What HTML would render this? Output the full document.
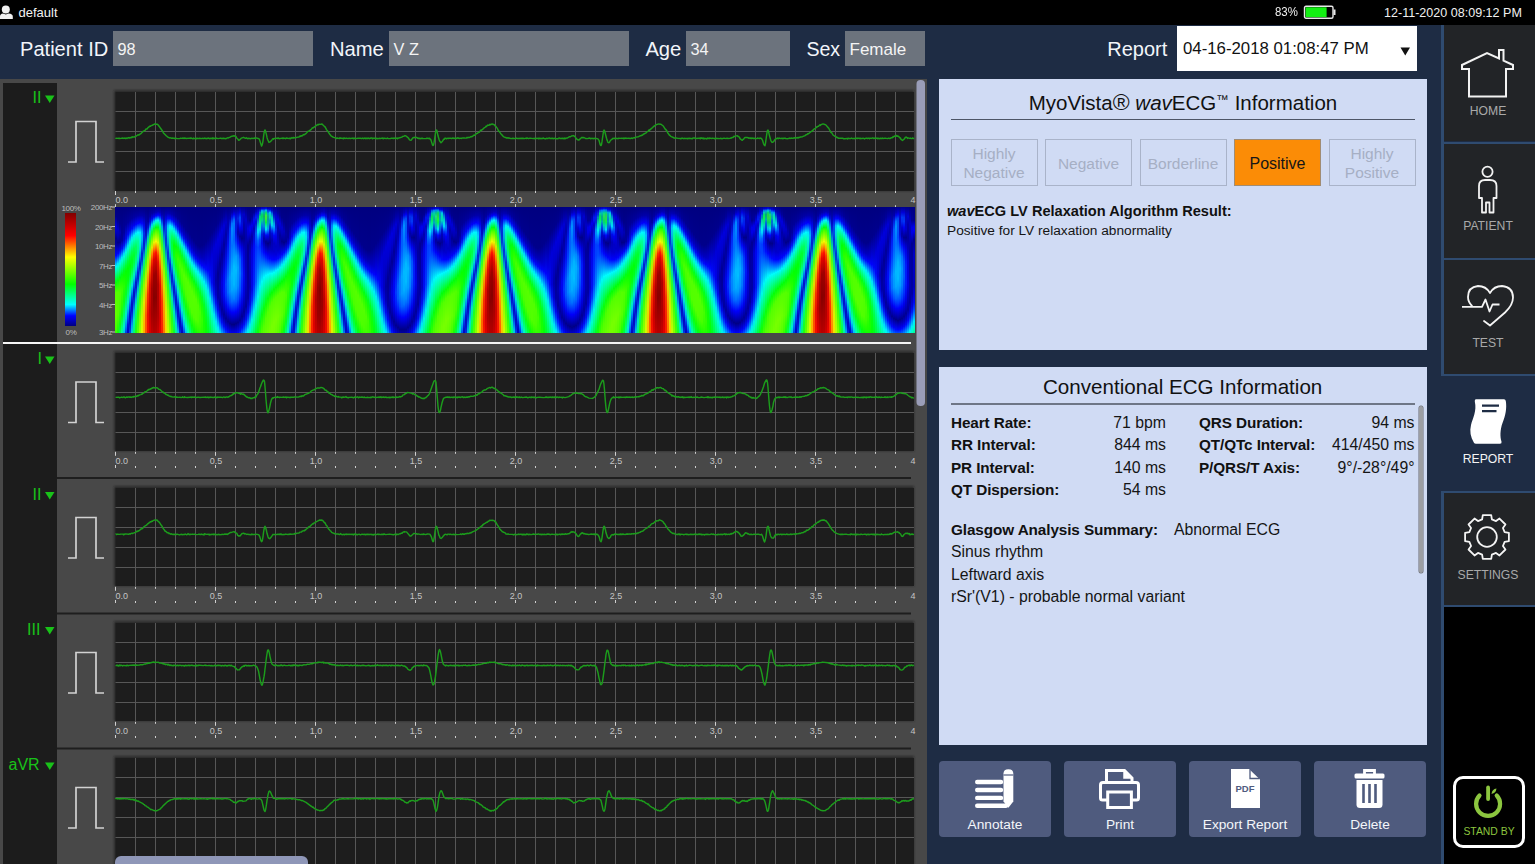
<!DOCTYPE html>
<html><head><meta charset="utf-8">
<style>
*{margin:0;padding:0;box-sizing:border-box}
html,body{width:1535px;height:864px;overflow:hidden;background:#1e2c44;font-family:"Liberation Sans",sans-serif}
.a{position:absolute;white-space:nowrap}
.tl{font-family:"Liberation Sans",sans-serif;font-size:9px;fill:#c4c4c4}
.t{line-height:1.15}
.b{font-weight:bold;font-size:15.3px;letter-spacing:-0.1px;color:#111}
.r{font-size:15.8px;color:#151515}
b{position:absolute;top:0;width:2px;height:126px}
.hz{font-family:"Liberation Sans",sans-serif;font-size:8px;fill:#bdbdbd;letter-spacing:-0.4px}
.ll{font-family:"Liberation Sans",sans-serif;font-size:16px;fill:#19c219}
</style></head><body>
<div class="a" style="left:0;top:0;width:1535px;height:25px;background:#000"></div>
<svg class="a" style="left:0;top:0" width="16" height="25"><circle cx="5.8" cy="9.6" r="4" fill="#f0f0f0"/><path d="M0 19V16.5Q0 14 3 13.6L5.8 14.5L8.6 13.6Q12.8 14 12.8 16.5V19Z" fill="#f0f0f0"/></svg>
<div class="a t" style="left:18.5px;top:5.5px;font-size:13px;color:#f2f2f2">default</div>
<div class="a t" style="left:1275px;top:5px;font-size:13px;color:#f0f0f0;transform:scaleX(0.88);transform-origin:0 0">83%</div>
<svg class="a" style="left:1303px;top:5px" width="34" height="15"><rect x="1.5" y="1.2" width="28.5" height="12" rx="1.5" fill="none" stroke="#e8e8e8" stroke-width="1.4"/><rect x="2.6" y="2.3" width="21" height="9.8" fill="#12ef12"/><rect x="30.5" y="4.5" width="2" height="5.5" fill="#e8e8e8"/></svg>
<div class="a t" style="left:1384px;top:6px;font-size:12.55px;color:#f0f0f0">12-11-2020 08:09:12 PM</div>
<div class="a" style="left:0;top:25px;width:1535px;height:54px;background:#1e2c44"></div>
<div class="a t" style="left:20px;top:38px;font-size:20.1px;color:#f2f5fa">Patient ID</div>
<div class="a t" style="left:330px;top:38px;font-size:20.2px;color:#f2f5fa">Name</div>
<div class="a t" style="left:645.4px;top:38px;font-size:20.2px;color:#f2f5fa">Age</div>
<div class="a t" style="left:806.4px;top:38px;font-size:19.6px;color:#f2f5fa">Sex</div>
<div class="a t" style="left:1107.3px;top:38px;font-size:20.0px;color:#f2f5fa">Report</div>
<div class="a" style="left:113px;top:31px;width:200px;height:34.5px;background:#6c737d"></div>
<div class="a t" style="left:117.5px;top:39.5px;font-size:16.3px;color:#f4f4f4">98</div>
<div class="a" style="left:389px;top:31px;width:240px;height:34.5px;background:#6c737d"></div>
<div class="a t" style="left:393.5px;top:39.5px;font-size:16.3px;color:#f4f4f4">V Z</div>
<div class="a" style="left:686px;top:31px;width:104px;height:34.5px;background:#6c737d"></div>
<div class="a t" style="left:690.5px;top:39.5px;font-size:16.3px;color:#f4f4f4">34</div>
<div class="a" style="left:845px;top:31px;width:80px;height:34.5px;background:#6c737d"></div>
<div class="a t" style="left:849.5px;top:39.5px;font-size:17px;color:#f4f4f4">Female</div>
<div class="a" style="left:1176.5px;top:25.5px;width:240.5px;height:45px;background:#fff"></div>
<div class="a t" style="left:1183px;top:38.7px;font-size:16.8px;color:#111">04-16-2018 01:08:47 PM</div>
<svg class="a" style="left:1400px;top:47px" width="11" height="9"><path d="M0.5 0.5H10L5.25 8.5Z" fill="#111"/></svg>
<svg width="927" height="785" viewBox="0 79 927 785" style="position:absolute;left:0;top:79px">
<defs><filter id="sh" x="-5%" y="-20%" width="110%" height="140%"><feGaussianBlur stdDeviation="1.3"/></filter></defs>
<rect x="0" y="79" width="927" height="785" fill="#484848"/>
<rect x="3" y="83" width="54" height="781" fill="#1c1c1c"/>
<rect x="114.0" y="90.5" width="800.0" height="100.5" fill="#1d1d1d" filter="url(#sh)" opacity="0.7"/>
<rect x="115.5" y="92" width="798.5" height="99" fill="#1d1d1d"/>
<path d="M135.5 92V191 M155.5 92V191 M175.5 92V191 M195.5 92V191 M215.5 92V191 M235.5 92V191 M255.5 92V191 M275.5 92V191 M295.5 92V191 M315.5 92V191 M335.5 92V191 M355.5 92V191 M375.5 92V191 M395.5 92V191 M415.5 92V191 M435.5 92V191 M455.5 92V191 M475.5 92V191 M495.5 92V191 M515.5 92V191 M535.5 92V191 M555.5 92V191 M575.5 92V191 M595.5 92V191 M615.5 92V191 M635.5 92V191 M655.5 92V191 M675.5 92V191 M695.5 92V191 M715.5 92V191 M735.5 92V191 M755.5 92V191 M775.5 92V191 M795.5 92V191 M815.5 92V191 M835.5 92V191 M855.5 92V191 M875.5 92V191 M895.5 92V191 M115.5 111.5H914.0 M115.5 131.5H914.0 M115.5 151.5H914.0 M115.5 171.5H914.0" stroke="#575757" stroke-width="1" fill="none"/>
<path d="M115.5,138.8 116,138.3 118.5,138.4 119,138.0 119.5,138.6 123,138.0 123.5,138.4 124.5,138.3 125,137.9 125.5,138.6 126.5,138.0 127,138.5 128,137.7 128.5,137.9 129,137.4 129.5,138.1 130.5,137.5 131,137.8 131.5,137.1 132,137.5 132.5,136.8 134.5,137.1 135,136.4 136.5,136.0 138,134.8 139,135.1 140,133.9 140.5,134.1 143.5,131.1 145,130.5 146,129.0 147,129.0 148,127.6 150,126.1 150.5,126.3 151,125.6 152.5,125.2 153,124.7 154,124.5 155,123.8 155.5,124.3 157,124.1 158,124.8 162.5,131.0 163.5,133.1 166.5,136.1 167,136.1 167.5,136.8 169.5,138.0 170,137.7 171.5,138.3 172.5,138.0 173,138.3 174.5,138.2 175,138.7 176,138.2 176.5,138.5 179.5,138.6 180.5,138.3 182,138.4 183,138.0 183.5,138.4 184.5,138.0 185,138.5 185.5,138.2 186,138.5 190,138.1 190.5,138.4 191,138.0 193,138.8 193.5,138.1 194,138.6 195,138.6 195.5,138.2 196.5,138.8 197,138.1 198,138.6 199.5,138.2 202,138.6 202.5,138.2 203.5,138.6 204.5,138.1 205,138.5 205.5,138.3 207,138.7 208,138.0 210,138.7 211,138.2 211.5,138.6 212.5,137.9 213,138.9 213.5,138.0 214.5,138.6 215.5,138.0 216,138.6 216.5,138.1 218,138.6 220.5,138.1 221.5,138.5 223.5,138.3 226,138.7 227.5,137.8 228.5,137.9 229,137.4 230,137.3 231,136.5 234,135.8 236,136.5 236.5,137.7 237.5,138.9 238,139.1 238.5,140.2 239.5,140.1 241.5,138.1 243.5,137.3 245.5,138.3 246,138.3 246.5,137.8 247.5,138.7 248.5,138.3 251,138.7 252,138.2 253,138.6 254.5,137.9 255,138.6 256,137.9 259,138.8 259.5,139.6 261.5,146.0 262,145.3 262.5,143.6 263,140.8 264,133.1 264.5,131.1 265,129.9 265.5,131.0 266,132.9 266.5,134.9 267,137.4 267.5,139.3 269,142.4 270.5,141.7 271,140.9 271.5,140.7 272.5,139.0 273,138.7 273.5,139.2 274,138.4 275.5,138.5 277,138.1 277.5,138.5 278.5,138.0 279,138.7 282,138.1 282.5,138.5 283,138.1 283.5,138.5 284,138.1 285.5,138.7 286,138.1 286.5,138.0 289.5,138.6 290,138.1 290.5,138.8 292,137.6 292.5,138.0 293,138.0 293.5,137.4 294,137.9 295,137.6 296,137.8 296.5,137.4 299,137.0 300,136.0 300.5,136.4 301,135.8 302,136.1 303.5,134.6 304,134.9 305.5,133.9 307,132.4 307.5,131.5 308.5,131.4 309.5,130.7 311,129.6 312.5,127.8 313,128.0 313.5,127.4 314.5,127.0 315.5,126.0 316,125.9 316.5,125.1 317,125.2 318,124.4 318.5,124.8 319,124.2 321,124.4 321.5,124.0 322,124.0 323,125.1 323.5,125.3 324.5,126.7 325,126.7 326.5,129.6 328.5,132.3 329,133.3 331,135.8 333.5,137.4 335.5,137.8 336.5,138.6 337,138.0 339.5,138.6 340,137.7 340.5,138.2 342.5,138.3 343.5,138.8 344,137.8 345,138.5 346.5,138.1 348,138.6 349,138.2 350.5,138.5 352.5,138.1 353.5,138.7 354,138.1 354.5,138.5 355,138.2 355.5,138.6 358,138.3 360.5,138.3 361.5,138.6 362.5,138.1 363.5,138.7 364.5,138.1 365.5,138.7 366,138.0 366.5,138.5 367.5,138.2 368,138.5 368.5,138.1 369.5,138.7 371,138.0 372,138.0 372.5,138.8 373.5,138.2 375.5,138.1 376,138.8 376.5,138.2 378,138.7 379,138.3 380.5,138.5 382,138.1 382.5,138.4 383,138.1 383.5,138.7 384.5,138.2 386.5,138.6 387.5,138.0 388,138.5 390.5,138.6 391,138.2 392.5,138.2 393.5,138.5 394,138.0 395.5,138.6 397,138.0 397.5,138.8 398,138.3 402,137.1 402.5,136.4 404,136.2 405,135.6 406,135.9 406.5,136.6 407,136.7 408.5,138.1 409.5,139.9 411,140.3 413,137.8 414,137.5 414.5,137.7 415,137.3 416.5,137.4 417.5,138.2 418,138.0 418.5,138.6 419.5,138.3 420,138.8 421.5,138.3 422,138.6 422.5,138.2 423,138.5 426.5,138.6 427,138.1 428,138.5 429.5,138.2 430,139.0 430.5,139.1 431,140.1 432.5,145.0 433,145.5 433.5,145.1 434,142.9 434.5,139.8 435.5,132.6 436,130.7 436.5,129.9 437,131.1 438,135.8 439,139.3 439.5,140.8 441,142.7 442.5,141.3 443,140.3 444,139.0 444.5,139.2 445,138.1 446,138.2 446.5,138.8 448,138.1 448.5,138.5 450,138.1 451.5,138.5 453,138.0 453.5,138.4 454,138.2 455,138.5 456,138.1 456.5,138.6 458,137.7 458.5,138.3 459.5,138.5 460,138.1 461.5,138.4 462,137.9 463.5,138.1 464,137.7 464.5,138.1 466.5,138.0 467,137.3 467.5,137.8 468.5,137.3 469,137.5 470,137.2 471,136.5 472,136.7 474,135.1 475,135.2 475.5,134.1 476,134.1 476.5,133.5 477.5,133.4 478,132.6 479,132.4 481,130.1 481.5,130.3 482,129.6 482.5,129.5 483.5,128.4 485.5,127.0 486,126.2 486.5,126.5 487.5,125.1 489,125.3 490,124.2 490.5,124.8 492,123.9 492.5,123.9 493,124.5 494,124.5 494.5,124.9 495,125.8 495.5,125.9 497.5,128.7 498.5,130.9 499.5,131.8 501.5,134.6 502.5,135.3 503,136.3 505,137.5 506,137.5 506.5,138.1 508,137.8 508.5,138.2 509,138.0 511,138.6 513,138.3 515,138.6 516.5,138.1 517,138.5 523,138.2 524.5,138.6 526,138.1 526.5,138.6 527,137.9 528.5,138.6 530,138.1 533.5,138.6 534,138.2 535,138.8 537,138.2 538.5,138.8 539,138.0 540,138.8 540.5,138.3 541.5,138.7 542,138.3 542.5,138.5 543.5,138.0 544,138.5 545.5,138.9 546.5,138.3 548,138.6 548.5,138.1 549.5,138.0 550,138.5 552.5,138.2 554,138.7 555,138.2 556,138.7 558,138.7 558.5,138.1 559.5,138.0 560,138.5 563,138.3 563.5,138.7 564.5,138.1 565,138.9 565.5,138.2 567.5,138.0 569.5,136.7 570.5,136.8 571.5,136.0 573.5,135.6 575,136.7 576.5,138.8 578,139.9 579,139.9 582,137.2 582.5,137.7 584,137.5 585.5,138.5 587.5,138.6 589.5,138.0 590.5,138.8 591,138.3 592,138.6 593,138.3 593.5,138.7 595,138.3 598,138.9 599,140.3 600,144.1 600.5,145.3 601,145.6 601.5,144.6 602,141.7 603.5,131.3 604,130.1 604.5,130.6 605,132.3 606.5,138.3 607.5,141.2 608,142.4 609,142.7 609.5,142.3 610,141.1 611,139.9 612,139.3 612.5,138.5 615,138.3 615.5,138.6 616,138.2 616.5,138.6 617,138.4 618,138.7 618.5,138.2 621.5,138.4 622,138.1 623.5,138.7 624,137.9 624.5,138.6 626,138.0 626.5,138.4 628.5,138.2 630.5,138.5 632,138.0 632.5,138.5 634,137.5 634.5,137.9 636,137.1 638.5,136.7 640.5,135.7 641,135.9 641.5,135.3 642.5,135.2 643,134.5 646.5,132.6 647,131.7 648.5,131.1 649,129.9 649.5,130.3 650,129.5 650.5,129.5 651.5,128.2 652.5,127.8 653.5,126.3 654,126.6 654.5,125.8 656,124.8 659,123.9 660,124.3 661,124.2 663.5,126.3 665.5,129.6 666,129.5 666.5,130.8 667,130.9 667.5,132.5 669.5,135.2 670,135.3 670.5,136.1 672,137.0 673,137.2 673.5,137.8 675.5,138.3 676,137.9 678,138.4 680.5,138.5 681,138.9 681.5,138.3 682.5,138.1 683.5,138.7 684.5,138.3 686.5,138.6 687,138.2 687.5,138.7 689,138.2 692.5,138.7 693,138.0 695,138.0 695.5,138.5 699,138.2 699.5,138.5 700,138.1 700.5,138.7 701,137.7 701.5,138.3 702,138.1 702.5,138.6 703,138.1 703.5,138.8 704,138.1 704.5,138.8 705.5,138.4 706.5,138.9 707.5,137.9 708,138.7 709,138.0 709.5,138.6 710,138.1 712,138.5 712.5,138.2 714,138.4 714.5,138.8 715.5,138.2 720,138.6 720.5,138.3 722,138.7 724,138.1 726,138.6 727,138.1 727.5,138.5 730.5,138.2 731,137.8 731.5,138.0 732,137.4 733,137.5 734,136.3 734.5,136.6 736,135.9 737.5,135.8 738,136.6 738.5,136.5 739,136.9 739.5,137.4 740,138.6 742,140.3 742.5,140.2 743,139.3 743.5,139.3 744.5,137.9 745,137.5 747.5,137.5 748.5,138.2 749,137.8 750,138.5 750.5,138.0 751.5,138.5 752,138.0 753.5,138.6 754,138.1 754.5,138.6 757,138.5 757.5,138.0 759.5,138.6 760,138.0 761.5,138.4 762,139.5 762.5,140.1 763.5,143.5 764,144.7 765,145.7 765.5,143.1 767,132.6 767.5,130.3 768,130.0 768.5,131.3 769.5,135.8 770.5,139.3 771,140.8 772,142.4 773,142.2 773.5,141.4 774,141.3 774.5,139.9 775.5,138.9 776.5,138.7 777,138.1 777.5,138.4 778,138.0 778.5,138.7 779.5,138.1 781,138.7 782,138.2 783,138.8 783.5,138.2 785,138.1 785.5,138.6 788,138.7 789.5,138.1 790,138.6 791,138.0 793,138.4 793.5,138.0 795,137.8 796,138.1 797,137.5 798,138.0 798.5,137.4 799,137.7 800.5,137.0 802.5,136.7 805,135.6 806,134.7 807,134.5 808,133.5 808.5,133.8 811.5,131.2 812,131.4 812.5,130.4 813,130.3 813.5,129.4 815,128.7 816,127.8 816.5,126.9 817,127.2 817.5,126.4 818.5,126.3 820,124.8 820.5,125.4 821,124.7 823,123.9 825.5,124.7 826.5,125.5 827,126.5 827.5,126.6 828,127.7 828.5,127.7 829.5,129.8 830,130.5 830.5,131.9 831,132.6 831.5,132.4 833,135.0 835,136.3 835.5,136.2 836.5,137.4 837,137.7 837.5,137.4 838.5,138.3 843,138.2 843.5,138.7 845,138.8 847,138.4 847.5,138.9 848,138.3 850.5,138.6 851.5,138.0 852.5,138.6 853.5,138.4 854.5,138.7 855.5,138.1 856.5,138.4 857,138.0 857.5,138.6 858,138.2 859.5,138.3 860,138.8 860.5,138.3 862,138.6 863,138.2 864.5,138.9 865,138.4 866.5,138.1 867.5,138.6 868,138.2 869,138.1 869.5,138.7 870,138.3 871.5,138.4 872.5,137.9 873.5,138.5 874,137.9 874.5,138.4 876,138.3 876.5,138.0 877.5,138.7 878,138.1 879,138.7 880.5,138.2 882,138.5 882.5,138.1 883,138.6 885,138.1 887.5,138.6 888.5,138.2 890,138.5 891.5,137.7 892.5,137.7 893,136.6 893.5,137.1 894.5,136.0 895,136.3 896.5,135.5 897,136.3 898,136.0 900,137.9 900.5,137.9 901,139.4 902.5,140.4 904,139.2 905.5,137.2 906.5,137.1 907.5,138.4 908,137.8 909.5,138.4 910.5,138.1 911,138.6 912,138.6 912.5,138.0 913.5,138.5 914,138.0" stroke="#1c9c1c" stroke-width="1.45" fill="none" stroke-linejoin="round"/>
<path d="M115.5 191v4 M115.5 204.2v3 M135.5 191v2 M135.5 205.2v2 M155.5 191v2 M155.5 205.2v2 M175.5 191v2 M175.5 205.2v2 M195.5 191v2 M195.5 205.2v2 M215.5 191v4 M215.5 204.2v3 M235.5 191v2 M235.5 205.2v2 M255.5 191v2 M255.5 205.2v2 M275.5 191v2 M275.5 205.2v2 M295.5 191v2 M295.5 205.2v2 M315.5 191v4 M315.5 204.2v3 M335.5 191v2 M335.5 205.2v2 M355.5 191v2 M355.5 205.2v2 M375.5 191v2 M375.5 205.2v2 M395.5 191v2 M395.5 205.2v2 M415.5 191v4 M415.5 204.2v3 M435.5 191v2 M435.5 205.2v2 M455.5 191v2 M455.5 205.2v2 M475.5 191v2 M475.5 205.2v2 M495.5 191v2 M495.5 205.2v2 M515.5 191v4 M515.5 204.2v3 M535.5 191v2 M535.5 205.2v2 M555.5 191v2 M555.5 205.2v2 M575.5 191v2 M575.5 205.2v2 M595.5 191v2 M595.5 205.2v2 M615.5 191v4 M615.5 204.2v3 M635.5 191v2 M635.5 205.2v2 M655.5 191v2 M655.5 205.2v2 M675.5 191v2 M675.5 205.2v2 M695.5 191v2 M695.5 205.2v2 M715.5 191v4 M715.5 204.2v3 M735.5 191v2 M735.5 205.2v2 M755.5 191v2 M755.5 205.2v2 M775.5 191v2 M775.5 205.2v2 M795.5 191v2 M795.5 205.2v2 M815.5 191v4 M815.5 204.2v3 M835.5 191v2 M835.5 205.2v2 M855.5 191v2 M855.5 205.2v2 M875.5 191v2 M875.5 205.2v2 M895.5 191v2 M895.5 205.2v2" stroke="#d0d0d0" stroke-width="1" fill="none"/>
<text x="115.5" y="203.2" text-anchor="start" class="tl">0.0</text>
<text x="216.0" y="203.2" text-anchor="middle" class="tl">0.5</text>
<text x="316.0" y="203.2" text-anchor="middle" class="tl">1.0</text>
<text x="416.0" y="203.2" text-anchor="middle" class="tl">1.5</text>
<text x="516.0" y="203.2" text-anchor="middle" class="tl">2.0</text>
<text x="616.0" y="203.2" text-anchor="middle" class="tl">2.5</text>
<text x="716.0" y="203.2" text-anchor="middle" class="tl">3.0</text>
<text x="816.0" y="203.2" text-anchor="middle" class="tl">3.5</text>
<text x="915.5" y="203.2" text-anchor="end" class="tl">4</text>
<rect x="3" y="342" width="908" height="2" fill="#f6f6f6"/>
<rect x="114.0" y="351.5" width="800.0" height="99.5" fill="#1d1d1d" filter="url(#sh)" opacity="0.7"/>
<rect x="115.5" y="353" width="798.5" height="98" fill="#1d1d1d"/>
<path d="M135.5 353V451 M155.5 353V451 M175.5 353V451 M195.5 353V451 M215.5 353V451 M235.5 353V451 M255.5 353V451 M275.5 353V451 M295.5 353V451 M315.5 353V451 M335.5 353V451 M355.5 353V451 M375.5 353V451 M395.5 353V451 M415.5 353V451 M435.5 353V451 M455.5 353V451 M475.5 353V451 M495.5 353V451 M515.5 353V451 M535.5 353V451 M555.5 353V451 M575.5 353V451 M595.5 353V451 M615.5 353V451 M635.5 353V451 M655.5 353V451 M675.5 353V451 M695.5 353V451 M715.5 353V451 M735.5 353V451 M755.5 353V451 M775.5 353V451 M795.5 353V451 M815.5 353V451 M835.5 353V451 M855.5 353V451 M875.5 353V451 M895.5 353V451 M115.5 372.5H914.0 M115.5 392.5H914.0 M115.5 412.5H914.0 M115.5 432.5H914.0" stroke="#575757" stroke-width="1" fill="none"/>
<path d="M115.5,397.4 118.5,397.2 119,397.3 119.5,397.9 121.5,397.1 123,397.5 124,396.8 125.5,397.8 126.5,397.0 128,397.2 129,396.8 129.5,397.2 130.5,397.0 131.5,397.4 132.5,396.8 133,397.0 133.5,396.4 134,396.9 135,396.3 136,396.7 136.5,396.0 137,396.3 138,395.4 138.5,395.8 139.5,394.9 141,394.6 141.5,394.1 142,394.3 143,393.3 144,392.9 145,391.7 146,391.7 147.5,390.5 148,389.8 148.5,389.9 149,389.3 149.5,389.5 153.5,387.5 154.5,387.9 155.5,387.6 157.5,388.0 158.5,389.1 159.5,389.6 160,389.5 162.5,391.9 163,392.0 163.5,392.8 164.5,393.0 166,394.6 166.5,394.5 167.5,395.3 168,394.9 169,395.9 170,396.5 171,396.3 171.5,396.7 173.5,397.1 175,396.6 175.5,397.6 176,397.0 178.5,397.4 180,397.2 181,397.6 182,397.4 182.5,396.8 183,397.4 184,397.6 184.5,396.7 185,397.3 187.5,397.5 190,397.3 191,396.9 191.5,397.6 192,396.9 192.5,397.3 195.5,397.0 196.5,397.6 198,397.1 200,397.5 204,397.1 205,397.3 205.5,396.9 206,397.5 207.5,397.1 208,397.5 208.5,397.2 209,397.7 210,397.0 210.5,397.4 211,397.2 213.5,397.5 215,397.0 217,397.7 217.5,397.0 218,397.3 221,397.1 222.5,397.6 223.5,397.0 224.5,397.1 225,397.5 226.5,396.9 228,397.3 228.5,396.7 229,396.8 229.5,396.1 232,395.2 232.5,394.3 233,394.4 233.5,393.6 234,393.9 234.5,393.3 235.5,392.8 237,392.6 239.5,393.5 240,393.2 240.5,394.3 241,393.4 242.5,394.2 243.5,394.1 246.5,396.9 247,396.8 248.5,397.8 249.5,397.6 250.5,398.4 251,398.0 251.5,398.6 252,398.6 253,397.8 254.5,397.7 255,396.9 255.5,397.4 256,396.9 257,394.7 257.5,394.3 258.5,392.5 260,387.8 260.5,386.8 261.5,383.7 262.5,381.5 263.5,380.0 264,380.4 264.5,381.6 265,386.8 265.5,392.5 266,399.3 266.5,404.8 267,409.4 267.5,411.9 268,412.8 268.5,411.8 269,410.0 269.5,408.1 270.5,403.0 271.5,399.5 272.5,398.0 273,397.7 273.5,398.1 274,397.4 276,397.2 277,397.5 277.5,396.6 278,397.2 279,397.2 279.5,397.6 280,397.2 282,397.4 283.5,397.0 284.5,397.4 286,397.0 286.5,397.8 287,397.1 287.5,397.1 289.5,397.5 290.5,397.2 291,397.5 291.5,397.2 293.5,397.3 294.5,396.9 298.5,397.1 300,396.3 301.5,396.5 302,395.7 303.5,396.1 305,394.6 309,393.0 310.5,392.1 311,391.2 313.5,389.9 314.5,389.8 315.5,388.8 317.5,387.9 320,388.0 321,387.4 323,388.0 324,388.7 325,390.0 326.5,390.5 327,391.3 328.5,392.1 329,393.2 329.5,392.9 331,394.4 332.5,395.0 333,395.6 334,395.6 334.5,396.4 335,396.2 335.5,396.6 336,396.2 338,397.1 338.5,396.6 339,397.1 341,397.1 341.5,397.7 342,397.2 342.5,397.5 343,397.0 344,397.3 345.5,397.1 346,396.6 346.5,397.2 348.5,397.8 349,397.4 352,397.2 353,397.7 354,397.7 354.5,397.0 356,397.4 357.5,396.8 358.5,397.8 359.5,397.0 360,397.4 362,397.0 364,397.6 364.5,397.1 365,397.5 366.5,397.6 367,397.3 369.5,397.6 370.5,397.2 371,397.8 371.5,397.3 373,396.8 374,397.3 376,397.5 378.5,397.1 379,397.6 379.5,397.0 380.5,397.4 381,396.8 381.5,397.5 383.5,397.0 385,397.5 386,396.9 386.5,397.6 389.5,397.2 390,397.9 390.5,397.3 391,397.1 392,397.6 393,396.8 393.5,397.6 396,397.0 396.5,397.5 397,397.1 398.5,397.3 399.5,396.5 400,397.0 402,396.3 403,394.9 404,394.7 405,393.7 405.5,393.8 406,393.2 406.5,393.2 407.5,392.4 412,393.4 412.5,394.0 413.5,393.6 414.5,394.6 416,395.0 417.5,396.4 418,396.3 419,397.2 419.5,396.9 421,398.0 422.5,398.5 423.5,398.2 424,398.7 425.5,397.6 426,397.7 426.5,396.8 427,396.8 427.5,395.8 428.5,395.2 429.5,393.5 434,381.1 435,380.5 435.5,380.6 436,382.7 436.5,387.9 437,394.4 437.5,399.9 438,406.3 438.5,410.2 439,412.4 439.5,412.5 440,411.8 440.5,410.1 441,407.4 442,403.0 443,399.8 443.5,398.6 444,398.1 445,397.5 447.5,397.0 448.5,397.4 449,397.0 450,397.5 452,397.1 453,397.7 454,396.9 455,397.5 456,397.0 457,397.8 457.5,397.1 458,397.4 459,397.0 460.5,397.5 461,397.1 462.5,396.8 463.5,397.6 464.5,397.1 465,397.5 467,397.0 468,397.4 468.5,396.8 469,396.6 469.5,397.0 470.5,396.3 473,396.4 474.5,395.6 475.5,395.7 476.5,394.8 477,395.2 478.5,393.6 479.5,393.7 480,393.0 481,392.4 482,392.1 482.5,391.2 484.5,389.9 485,390.1 486.5,389.4 487,388.7 490,387.4 490.5,388.0 492,387.1 494,388.4 494.5,388.3 495,388.8 495.5,388.7 496.5,389.9 497,390.0 499,392.1 499.5,392.0 500,392.9 500.5,392.7 503.5,395.0 504,395.8 505,395.7 508.5,397.0 510.5,397.0 511.5,397.5 514,397.0 514.5,397.5 515.5,397.0 516.5,397.4 517,396.8 518,397.5 519.5,397.0 520,397.7 521.5,397.1 522.5,397.6 526.5,397.0 527.5,397.7 528.5,397.6 529,397.2 530.5,397.3 531,397.7 531.5,397.0 533.5,397.5 534,396.9 534.5,397.6 535.5,397.4 536.5,397.8 537,397.4 539.5,397.2 544,397.6 545,397.4 545.5,396.9 546,397.5 546.5,397.0 548,397.7 549,397.0 549.5,397.4 551,397.0 552,397.7 552.5,397.0 554,397.5 554.5,396.9 555,397.4 556,397.1 556.5,397.5 557,396.9 558.5,397.5 559.5,397.1 560,397.4 561.5,397.3 562.5,397.9 563,397.1 565,397.6 569,396.6 569.5,395.9 570.5,395.7 573,393.5 573.5,393.7 576,392.6 576.5,393.2 577,393.0 578.5,393.6 580,393.3 580.5,393.8 581,393.3 583.5,394.9 584,395.6 585.5,396.8 586,396.7 589,398.1 592.5,398.4 594.5,397.2 595.5,395.9 596,395.8 597,393.1 597.5,392.7 598.5,390.0 599,389.3 600.5,384.4 602.5,380.3 603,380.3 603.5,381.0 604,384.5 604.5,389.9 605,396.8 605.5,402.9 606,407.8 606.5,411.2 607,412.3 607.5,412.6 608,411.3 609.5,404.1 610,402.1 611,399.3 612.5,397.4 613,397.5 613.5,396.8 614,397.7 616,397.1 618,397.4 618.5,397.1 619,397.7 619.5,397.1 620,397.5 621,397.0 621.5,397.4 624.5,397.2 625.5,397.5 626,397.0 629,397.3 630,396.9 630.5,397.4 632.5,397.0 633,397.6 634.5,396.9 635,397.3 635.5,397.1 636,397.3 636.5,396.8 638,396.9 638.5,396.5 639,396.8 640,396.2 641,396.2 641.5,395.5 643.5,395.7 644,394.9 644.5,394.8 645,394.2 647.5,393.4 650,391.5 651,391.1 652,389.7 653,390.3 654,389.1 655,388.9 656.5,387.8 657.5,387.6 658.5,388.0 660.5,387.4 662,388.4 663.5,388.7 664,389.7 664.5,389.7 665,390.7 665.5,390.2 667.5,392.5 671,394.7 672,396.1 672.5,395.3 674.5,396.7 675,396.3 675.5,396.8 676,396.5 676.5,397.0 678.5,396.7 679.5,397.3 680.5,397.4 681,396.9 682,397.5 682.5,396.8 683.5,397.7 684,397.1 684.5,397.5 688.5,397.1 689,397.5 690,397.0 691,397.4 691.5,396.8 692,397.4 693,397.6 694,397.1 695.5,397.6 697,397.0 698.5,397.6 700,397.6 701,397.0 704,397.6 707,397.1 707.5,397.6 708,396.7 708.5,397.5 710.5,397.3 711.5,397.7 712,397.3 712.5,397.7 713,397.2 714,397.4 714.5,397.0 716,397.5 717,396.9 718,397.3 719.5,397.1 720,397.5 720.5,397.2 721.5,397.5 722.5,396.9 723,397.5 724,397.2 724.5,397.6 725,397.2 726,397.3 726.5,397.9 727,396.9 728.5,397.5 729,397.1 730,397.4 730.5,397.0 732,396.8 732.5,396.2 734.5,395.6 738,392.6 739,392.9 740,392.3 740.5,392.8 741.5,392.9 742,393.3 745.5,393.9 746,394.5 748.5,395.7 749,396.5 750,396.7 751,397.6 751.5,397.3 752,398.2 752.5,397.6 753,398.0 753.5,397.5 754,398.1 756,398.0 756.5,398.5 757.5,397.4 758,397.3 758.5,396.2 759.5,396.0 760.5,394.1 761,392.9 761.5,392.2 763.5,386.8 764.5,383.2 766,380.3 766.5,379.9 767,380.3 767.5,382.6 768,387.6 769,400.5 769.5,406.0 770,409.9 770.5,412.3 771,412.5 772,410.0 773,405.8 773.5,402.5 774.5,399.4 775.5,397.8 776.5,397.7 777,397.2 778,397.7 779,396.9 779.5,397.7 780,397.1 782.5,397.4 783.5,397.0 784.5,397.3 785,396.8 785.5,397.5 786,397.1 787,397.6 789.5,396.9 790.5,397.2 791,396.8 792,397.6 795.5,397.0 796,397.4 797,397.0 799,397.4 800,396.7 801,397.3 801.5,396.6 804.5,396.3 806,395.4 806.5,395.8 807.5,395.4 808,394.7 808.5,395.0 811.5,392.7 813,391.9 814,391.8 815.5,390.3 816.5,390.3 818,388.8 819,388.7 820.5,387.8 821.5,388.0 823.5,387.5 825.5,388.1 827,389.3 829,390.1 829.5,391.3 830,391.2 831,392.6 831.5,392.3 835.5,395.4 837,396.2 837.5,395.7 838.5,396.5 839.5,396.0 840,396.8 840.5,396.7 841,397.1 843.5,397.0 844.5,397.4 847,397.1 847.5,397.5 849,396.9 850,397.4 851,396.9 853.5,397.5 856,397.1 857.5,397.5 858,397.2 859,397.6 862.5,397.2 863,397.7 863.5,397.1 864,397.5 864.5,397.1 865.5,397.6 866,397.1 866.5,397.7 867,397.1 868,397.4 868.5,397.1 869,397.5 869.5,397.4 870,396.7 871.5,397.4 872,397.1 874,397.4 874.5,397.0 875.5,397.6 876.5,396.8 877.5,397.5 878,397.2 878.5,397.5 879,397.0 880.5,397.5 881.5,397.1 882,397.4 884.5,397.3 885,396.8 886,397.6 887.5,396.9 888,397.6 888.5,397.1 890,397.0 891,397.4 891.5,396.8 892,397.2 894.5,395.8 895.5,394.7 896,394.8 897,393.6 897.5,393.6 898.5,392.9 900,393.1 901,392.6 902,393.3 905.5,393.7 907,394.3 907.5,395.0 909.5,396.5 911,397.1 911.5,397.7 912,397.2 913,398.0 914,397.9" stroke="#1c9c1c" stroke-width="1.45" fill="none" stroke-linejoin="round"/>
<path d="M115.5 451.8v4 M115.5 465.0v3 M135.5 451.8v2 M135.5 466.0v2 M155.5 451.8v2 M155.5 466.0v2 M175.5 451.8v2 M175.5 466.0v2 M195.5 451.8v2 M195.5 466.0v2 M215.5 451.8v4 M215.5 465.0v3 M235.5 451.8v2 M235.5 466.0v2 M255.5 451.8v2 M255.5 466.0v2 M275.5 451.8v2 M275.5 466.0v2 M295.5 451.8v2 M295.5 466.0v2 M315.5 451.8v4 M315.5 465.0v3 M335.5 451.8v2 M335.5 466.0v2 M355.5 451.8v2 M355.5 466.0v2 M375.5 451.8v2 M375.5 466.0v2 M395.5 451.8v2 M395.5 466.0v2 M415.5 451.8v4 M415.5 465.0v3 M435.5 451.8v2 M435.5 466.0v2 M455.5 451.8v2 M455.5 466.0v2 M475.5 451.8v2 M475.5 466.0v2 M495.5 451.8v2 M495.5 466.0v2 M515.5 451.8v4 M515.5 465.0v3 M535.5 451.8v2 M535.5 466.0v2 M555.5 451.8v2 M555.5 466.0v2 M575.5 451.8v2 M575.5 466.0v2 M595.5 451.8v2 M595.5 466.0v2 M615.5 451.8v4 M615.5 465.0v3 M635.5 451.8v2 M635.5 466.0v2 M655.5 451.8v2 M655.5 466.0v2 M675.5 451.8v2 M675.5 466.0v2 M695.5 451.8v2 M695.5 466.0v2 M715.5 451.8v4 M715.5 465.0v3 M735.5 451.8v2 M735.5 466.0v2 M755.5 451.8v2 M755.5 466.0v2 M775.5 451.8v2 M775.5 466.0v2 M795.5 451.8v2 M795.5 466.0v2 M815.5 451.8v4 M815.5 465.0v3 M835.5 451.8v2 M835.5 466.0v2 M855.5 451.8v2 M855.5 466.0v2 M875.5 451.8v2 M875.5 466.0v2 M895.5 451.8v2 M895.5 466.0v2" stroke="#d0d0d0" stroke-width="1" fill="none"/>
<text x="115.5" y="464.2" text-anchor="start" class="tl">0.0</text>
<text x="216.0" y="464.2" text-anchor="middle" class="tl">0.5</text>
<text x="316.0" y="464.2" text-anchor="middle" class="tl">1.0</text>
<text x="416.0" y="464.2" text-anchor="middle" class="tl">1.5</text>
<text x="516.0" y="464.2" text-anchor="middle" class="tl">2.0</text>
<text x="616.0" y="464.2" text-anchor="middle" class="tl">2.5</text>
<text x="716.0" y="464.2" text-anchor="middle" class="tl">3.0</text>
<text x="816.0" y="464.2" text-anchor="middle" class="tl">3.5</text>
<text x="915.5" y="464.2" text-anchor="end" class="tl">4</text>
<rect x="114.0" y="486.5" width="800.0" height="99.5" fill="#1d1d1d" filter="url(#sh)" opacity="0.7"/>
<rect x="115.5" y="488" width="798.5" height="98" fill="#1d1d1d"/>
<path d="M135.5 488V586 M155.5 488V586 M175.5 488V586 M195.5 488V586 M215.5 488V586 M235.5 488V586 M255.5 488V586 M275.5 488V586 M295.5 488V586 M315.5 488V586 M335.5 488V586 M355.5 488V586 M375.5 488V586 M395.5 488V586 M415.5 488V586 M435.5 488V586 M455.5 488V586 M475.5 488V586 M495.5 488V586 M515.5 488V586 M535.5 488V586 M555.5 488V586 M575.5 488V586 M595.5 488V586 M615.5 488V586 M635.5 488V586 M655.5 488V586 M675.5 488V586 M695.5 488V586 M715.5 488V586 M735.5 488V586 M755.5 488V586 M775.5 488V586 M795.5 488V586 M815.5 488V586 M835.5 488V586 M855.5 488V586 M875.5 488V586 M895.5 488V586 M115.5 507.5H914.0 M115.5 527.5H914.0 M115.5 547.5H914.0 M115.5 567.5H914.0" stroke="#575757" stroke-width="1" fill="none"/>
<path d="M115.5,534.2 116,534.0 116.5,534.6 117.5,534.1 120,534.4 120.5,534.1 123,534.1 123.5,534.8 124,534.1 124.5,534.4 125.5,533.9 128.5,534.3 129.5,533.8 130.5,534.0 131,533.4 132,533.3 132.5,533.6 133,533.1 134,533.1 134.5,532.6 135.5,532.4 136.5,531.3 137.5,531.5 138,530.8 138.5,531.1 140,530.0 140.5,529.2 142.5,528.5 144,526.6 146.5,525.2 148,523.4 148.5,523.5 149.5,522.2 150,522.3 150.5,521.8 151,521.9 152,521.1 152.5,521.2 153,520.6 155,519.9 155.5,520.2 157,519.9 157.5,520.8 158.5,521.6 160,523.3 160.5,524.3 161.5,525.4 163.5,529.0 164,529.4 165,531.0 166.5,531.8 167,532.8 168,532.6 168.5,532.8 169,533.7 169.5,533.3 171,534.3 171.5,533.8 173,534.6 173.5,534.2 176.5,534.5 177,534.1 179.5,534.9 181,534.3 183,534.7 184,534.3 184.5,534.6 185.5,534.0 186.5,534.8 187.5,534.3 188,533.6 189,534.5 189.5,534.3 190,534.7 190.5,534.2 192,534.4 192.5,534.1 193.5,534.4 194.5,534.1 196.5,534.6 198.5,534.4 199,534.0 200,534.6 200.5,534.3 201,534.5 201.5,534.1 202,534.4 203.5,534.4 204,534.9 204.5,533.7 206,534.4 208.5,534.2 209,534.7 209.5,534.2 210,535.0 211,534.3 212,534.6 213,534.0 213.5,534.7 214,534.2 215,534.5 215.5,534.0 216,534.5 217,534.7 219,534.3 219.5,534.7 221.5,534.6 222,534.2 223,534.6 225,534.0 226,534.4 227,533.9 227.5,534.4 230.5,532.4 231.5,532.4 234,531.6 236,533.1 236.5,533.1 237,533.6 237.5,535.2 238,535.3 238.5,536.1 239.5,535.8 240,536.0 242,533.5 243,533.5 243.5,533.2 244.5,533.9 245,533.5 246.5,534.4 247.5,534.2 251,534.7 251.5,534.1 252,534.5 253,534.3 254,534.7 255.5,534.1 257.5,534.4 259,535.0 260,537.4 261,540.7 261.5,541.7 262,541.4 262.5,539.7 263,536.6 263.5,532.7 264,529.5 264.5,527.2 265,526.2 265.5,527.2 266,528.8 266.5,530.8 267,533.3 268,536.7 268.5,537.9 269.5,538.7 270,538.5 271,537.3 273,534.3 274,534.7 275,534.3 276.5,534.6 277.5,534.2 278,534.6 279,534.1 279.5,534.6 280.5,533.9 281,534.7 281.5,534.1 283,534.8 283.5,534.4 285,534.5 285.5,534.1 288,534.5 289,534.2 289.5,534.4 290,534.0 291,534.3 294,534.1 294.5,533.4 295,534.0 296.5,533.3 299,533.1 300,532.1 301.5,532.0 302,531.3 304,530.6 304.5,530.8 305,530.0 305.5,530.1 306.5,528.8 308,527.8 308.5,527.0 309,527.1 309.5,526.5 310,526.5 311.5,524.8 313,523.6 313.5,523.8 314,523.0 315,522.6 315.5,522.1 319,520.3 320,520.0 321,520.4 321.5,519.9 322.5,520.3 324.5,522.7 325,522.8 326,524.9 327,526.0 328.5,529.0 329,529.2 330.5,531.1 331,531.2 331.5,532.3 335.5,534.0 338,534.0 339.5,534.5 340,534.3 340.5,533.6 342,534.8 344,534.3 344.5,534.8 345.5,534.2 346.5,534.6 347,534.0 348,534.6 349,534.1 350,534.6 351,534.2 352,534.5 353,534.2 353.5,534.9 354.5,534.1 355,534.3 355.5,533.8 357,534.9 357.5,534.4 359.5,534.3 360,534.7 361,534.7 362,534.2 364,534.5 365,534.2 365.5,534.7 367,534.2 370.5,534.5 371,534.2 372,534.8 373,534.3 373.5,535.0 374.5,534.3 376.5,534.6 377.5,534.1 378.5,534.6 379,534.1 380,534.6 382,534.3 383.5,534.5 384,533.8 385.5,534.6 389.5,534.1 393.5,534.8 395,534.1 395.5,534.5 396,534.3 396.5,534.7 397,534.0 398,534.6 400,533.7 400.5,533.7 401,533.2 402,533.3 402.5,532.5 403.5,531.9 404,532.2 404.5,531.6 405,531.7 406.5,531.9 410,536.0 411,536.0 414,533.3 414.5,533.6 416.5,533.6 417,534.4 418,533.9 421,534.6 422,534.2 423,534.7 423.5,534.0 425.5,534.6 427.5,534.0 429.5,534.1 430,534.4 431,536.1 431.5,537.3 432.5,540.8 433,541.7 433.5,541.5 434,539.0 434.5,535.8 435,531.6 435.5,528.8 436,526.6 436.5,526.3 437,527.3 439,535.6 439.5,536.0 440,537.9 441,538.5 442.5,537.2 443,536.2 443.5,536.0 444,535.1 445,534.4 446,534.3 447,534.8 448,534.1 449,534.1 449.5,534.5 450.5,534.2 451.5,534.6 454,534.3 455,534.8 455.5,534.1 456,534.6 460,534.4 460.5,533.9 461.5,534.5 463,533.7 463.5,534.2 464.5,534.3 465,533.7 466.5,533.7 467,533.3 469,533.6 469.5,533.0 470.5,533.0 471,532.5 471.5,532.7 472.5,531.9 475.5,530.7 478.5,528.5 479.5,527.4 480,527.6 481.5,526.0 482,526.1 483,524.5 483.5,524.6 484,523.9 485.5,523.2 486.5,522.2 487.5,522.2 488,521.2 488.5,521.3 490,520.2 491,520.6 492,520.0 492.5,520.5 494,520.4 495,521.8 495.5,521.6 497,524.4 499,527.3 500,529.5 500.5,529.5 501,530.4 501.5,530.6 502,531.5 505.5,533.2 506,534.1 507.5,534.2 508,533.8 508.5,534.2 512.5,534.4 513.5,534.9 514.5,534.3 517,534.7 518.5,534.1 519,534.6 520,534.2 521.5,534.3 522,534.8 522.5,534.3 523,534.9 524,534.2 525,534.9 525.5,534.4 526,534.5 526.5,533.9 527,534.5 527.5,534.1 528.5,534.7 529,534.3 531.5,534.6 533.5,534.0 535.5,534.6 536.5,534.2 538,534.3 538.5,533.9 540,534.6 541,534.1 541.5,534.7 542.5,534.3 543.5,534.5 545,534.3 545.5,534.6 546.5,534.5 547,534.0 548,534.3 549,534.0 550,534.7 552,534.1 554.5,534.6 555.5,534.0 556.5,534.7 557,534.1 557.5,534.7 559.5,534.1 560,534.2 560.5,534.7 561.5,534.1 562,534.6 562.5,534.0 564.5,534.4 565.5,533.7 566,534.2 569.5,533.5 571,531.9 571.5,532.2 572,531.5 572.5,532.2 573.5,531.8 575,532.5 575.5,533.4 576,533.6 577.5,536.1 578.5,536.5 579,536.1 580.5,533.8 581,533.8 581.5,532.9 582,533.2 582.5,532.8 583.5,533.7 584,533.5 585.5,534.2 586,533.9 586.5,534.3 588,534.2 588.5,534.6 591.5,534.0 592,534.3 593.5,534.1 594,534.5 595,534.0 595.5,534.8 596,534.0 596.5,534.4 597,534.2 598,534.9 599,536.5 599.5,537.9 600,540.2 600.5,541.3 601,541.7 601.5,540.6 602,537.8 603,530.8 603.5,527.8 604,526.2 604.5,526.5 605.5,530.1 606,532.8 607.5,537.2 608.5,538.4 609,538.5 610.5,537.0 611,535.6 611.5,534.9 612.5,534.6 613,535.0 615,534.0 618,534.5 619.5,534.2 620,534.6 620.5,533.9 621,534.5 621.5,534.5 622,533.9 623,534.6 623.5,534.1 625,534.6 626.5,534.0 627.5,534.3 628,533.8 629,534.3 629.5,533.9 631,534.2 631.5,533.7 633,533.9 633.5,533.5 634,533.9 635.5,533.3 636,533.8 636.5,533.3 637,533.6 637.5,532.9 638.5,533.0 639,532.5 640,532.4 641,531.6 643,531.0 644.5,529.5 648,527.4 649,526.2 650,525.8 651.5,523.9 653.5,523.2 655.5,521.2 656,521.2 656.5,520.7 658,520.9 659.5,519.8 662,520.8 662.5,521.5 663,521.6 663.5,522.3 664,523.6 664.5,523.5 665.5,525.2 666,526.4 666.5,526.7 668,529.2 669,530.0 670.5,531.9 673,533.6 674,533.3 674.5,533.9 677,534.5 677.5,534.2 678,534.6 679,533.8 679.5,534.1 680,535.0 680.5,534.3 683,534.4 683.5,534.8 686,534.1 686.5,534.6 687,534.2 689,534.7 690,534.3 693.5,534.5 695.5,534.0 696,534.6 697,534.3 697.5,534.6 698.5,534.1 699,534.6 699.5,533.9 700.5,534.5 701,534.1 701.5,534.7 702,534.3 702.5,534.7 704,534.4 704.5,534.9 705,534.5 707,534.3 710,534.6 711.5,533.9 712.5,534.4 713.5,534.1 714,534.6 717.5,534.7 718,534.1 719,534.6 720.5,534.3 721,534.6 722,534.2 722.5,534.7 724.5,533.8 725.5,534.8 726,533.9 727,534.5 729,534.1 729.5,534.5 730.5,534.1 731,533.4 731.5,534.1 732,533.5 733,533.5 734,532.5 736.5,531.4 737,531.5 738,532.5 738.5,532.3 739,533.3 739.5,533.6 740,534.6 740.5,534.8 741,536.2 742.5,536.1 743,535.3 743.5,535.2 745.5,532.8 747,533.2 747.5,533.9 748,533.6 749.5,534.6 751,534.2 752,534.5 753,534.6 753.5,534.2 755,534.3 755.5,534.7 756.5,534.3 759,534.2 759.5,534.6 761,534.7 761.5,534.2 762.5,536.0 764,541.0 764.5,542.0 765,540.9 765.5,538.9 766,536.1 767,528.4 767.5,526.7 768,526.3 768.5,527.0 769.5,531.7 770.5,535.7 771.5,537.8 773,538.1 773.5,538.0 774,537.4 774.5,536.1 775,535.6 775.5,534.5 776,535.1 776.5,534.3 777.5,534.7 778,534.1 779.5,534.7 780.5,534.2 781.5,534.7 782,534.2 783,534.6 784,534.2 785.5,534.6 787,534.0 787.5,534.5 790,534.5 791,534.0 791.5,534.5 794.5,533.9 795,534.4 795.5,533.7 796,534.3 796.5,533.7 798,533.9 799.5,533.2 800,533.6 802,532.7 803.5,532.5 804.5,531.5 805,531.8 806,531.1 806.5,530.1 807.5,530.3 809,529.4 810,528.3 811,527.8 812,526.5 813,526.3 814,524.9 816.5,523.4 817.5,522.2 818.5,522.2 819,521.3 819.5,521.5 820,520.8 822.5,520.0 823.5,520.3 824,519.8 825.5,520.8 826,520.5 826.5,521.7 827,521.8 828.5,523.9 830.5,527.4 832.5,530.3 833,530.4 833.5,531.2 834.5,532.1 836.5,533.4 839.5,534.4 840.5,534.2 841,534.8 842,534.0 842.5,534.5 846,534.1 848,534.6 850,534.4 850.5,534.8 851,533.8 852.5,534.5 854.5,534.3 855.5,534.8 856,533.9 856.5,534.9 857.5,534.3 860,534.6 860.5,534.2 861,534.5 861.5,534.2 862.5,534.6 865,534.1 866.5,534.9 867,534.2 867.5,534.6 868.5,534.3 869,534.8 869.5,534.4 870,534.6 871,534.2 872.5,534.3 873,534.8 874,534.0 874.5,534.8 875,534.5 876,534.7 876.5,534.2 881,534.7 881.5,533.9 882,534.4 883.5,534.7 885,534.4 887.5,534.5 888,534.2 888.5,534.6 889.5,534.3 890,533.6 890.5,534.1 891,533.6 891.5,534.1 894.5,532.2 896.5,532.1 897.5,531.7 898.5,532.6 899,532.4 899.5,533.4 900.5,533.8 901.5,536.0 902.5,536.4 903,536.1 904,534.5 906,533.2 907,533.7 907.5,533.2 909,534.0 909.5,533.6 910,534.9 911.5,534.0 912,534.5 912.5,534.1 913,534.5 914,534.4" stroke="#1c9c1c" stroke-width="1.45" fill="none" stroke-linejoin="round"/>
<path d="M115.5 586.8v4 M115.5 600.0v3 M135.5 586.8v2 M135.5 601.0v2 M155.5 586.8v2 M155.5 601.0v2 M175.5 586.8v2 M175.5 601.0v2 M195.5 586.8v2 M195.5 601.0v2 M215.5 586.8v4 M215.5 600.0v3 M235.5 586.8v2 M235.5 601.0v2 M255.5 586.8v2 M255.5 601.0v2 M275.5 586.8v2 M275.5 601.0v2 M295.5 586.8v2 M295.5 601.0v2 M315.5 586.8v4 M315.5 600.0v3 M335.5 586.8v2 M335.5 601.0v2 M355.5 586.8v2 M355.5 601.0v2 M375.5 586.8v2 M375.5 601.0v2 M395.5 586.8v2 M395.5 601.0v2 M415.5 586.8v4 M415.5 600.0v3 M435.5 586.8v2 M435.5 601.0v2 M455.5 586.8v2 M455.5 601.0v2 M475.5 586.8v2 M475.5 601.0v2 M495.5 586.8v2 M495.5 601.0v2 M515.5 586.8v4 M515.5 600.0v3 M535.5 586.8v2 M535.5 601.0v2 M555.5 586.8v2 M555.5 601.0v2 M575.5 586.8v2 M575.5 601.0v2 M595.5 586.8v2 M595.5 601.0v2 M615.5 586.8v4 M615.5 600.0v3 M635.5 586.8v2 M635.5 601.0v2 M655.5 586.8v2 M655.5 601.0v2 M675.5 586.8v2 M675.5 601.0v2 M695.5 586.8v2 M695.5 601.0v2 M715.5 586.8v4 M715.5 600.0v3 M735.5 586.8v2 M735.5 601.0v2 M755.5 586.8v2 M755.5 601.0v2 M775.5 586.8v2 M775.5 601.0v2 M795.5 586.8v2 M795.5 601.0v2 M815.5 586.8v4 M815.5 600.0v3 M835.5 586.8v2 M835.5 601.0v2 M855.5 586.8v2 M855.5 601.0v2 M875.5 586.8v2 M875.5 601.0v2 M895.5 586.8v2 M895.5 601.0v2" stroke="#d0d0d0" stroke-width="1" fill="none"/>
<text x="115.5" y="599.2" text-anchor="start" class="tl">0.0</text>
<text x="216.0" y="599.2" text-anchor="middle" class="tl">0.5</text>
<text x="316.0" y="599.2" text-anchor="middle" class="tl">1.0</text>
<text x="416.0" y="599.2" text-anchor="middle" class="tl">1.5</text>
<text x="516.0" y="599.2" text-anchor="middle" class="tl">2.0</text>
<text x="616.0" y="599.2" text-anchor="middle" class="tl">2.5</text>
<text x="716.0" y="599.2" text-anchor="middle" class="tl">3.0</text>
<text x="816.0" y="599.2" text-anchor="middle" class="tl">3.5</text>
<text x="915.5" y="599.2" text-anchor="end" class="tl">4</text>
<rect x="114.0" y="621.5" width="800.0" height="99.5" fill="#1d1d1d" filter="url(#sh)" opacity="0.7"/>
<rect x="115.5" y="623" width="798.5" height="98" fill="#1d1d1d"/>
<path d="M135.5 623V721 M155.5 623V721 M175.5 623V721 M195.5 623V721 M215.5 623V721 M235.5 623V721 M255.5 623V721 M275.5 623V721 M295.5 623V721 M315.5 623V721 M335.5 623V721 M355.5 623V721 M375.5 623V721 M395.5 623V721 M415.5 623V721 M435.5 623V721 M455.5 623V721 M475.5 623V721 M495.5 623V721 M515.5 623V721 M535.5 623V721 M555.5 623V721 M575.5 623V721 M595.5 623V721 M615.5 623V721 M635.5 623V721 M655.5 623V721 M675.5 623V721 M695.5 623V721 M715.5 623V721 M735.5 623V721 M755.5 623V721 M775.5 623V721 M795.5 623V721 M815.5 623V721 M835.5 623V721 M855.5 623V721 M875.5 623V721 M895.5 623V721 M115.5 642.5H914.0 M115.5 662.5H914.0 M115.5 682.5H914.0 M115.5 702.5H914.0" stroke="#575757" stroke-width="1" fill="none"/>
<path d="M115.5,665.6 116.5,665.5 117,665.0 117.5,665.7 118,665.5 118.5,666.1 119.5,665.0 120,665.8 121,665.2 122.5,665.9 123,665.4 126.5,665.7 127,665.1 127.5,665.6 128.5,665.8 129,665.4 134.5,665.0 135,665.5 136.5,665.0 137,665.3 139.5,665.1 140,664.7 143,664.7 145,663.9 145.5,664.1 147,663.3 147.5,663.6 148.5,662.7 149,663.3 153.5,662.0 154.5,662.5 155.5,662.1 156,662.4 158.5,662.3 160,663.2 160.5,662.9 163,663.8 163.5,663.4 164,664.2 165,663.9 165.5,664.7 166,664.2 167,664.4 167.5,664.9 168,664.2 168.5,664.9 169,664.6 169.5,665.3 170,665.5 171,665.0 172,665.8 173,665.3 173.5,665.7 174,665.1 176,665.7 177.5,665.2 179,665.7 180,665.2 181.5,665.8 182,665.4 183.5,665.7 184,665.5 184.5,666.1 185.5,665.2 186.5,665.7 189,665.2 189.5,665.7 190,665.4 191,665.6 191.5,665.1 192,665.1 192.5,665.6 193,665.4 194,665.8 195.5,665.6 196,665.1 196.5,665.9 197.5,665.4 198,665.8 198.5,665.3 199.5,665.2 203.5,665.6 205,665.1 205.5,665.6 206,665.2 206.5,665.6 208.5,665.6 209,665.3 210,665.7 212,665.5 212.5,665.9 214,665.7 214.5,665.3 216.5,665.8 218,665.3 220.5,665.5 221.5,666.0 222.5,665.4 223,665.8 224.5,665.7 225,665.1 226.5,666.0 227,665.6 227.5,665.9 228,665.5 229.5,665.3 230.5,665.8 231,665.2 232,665.9 234,666.6 234.5,666.5 235,667.7 236,668.3 237.5,669.9 239.5,669.7 241,667.8 242.5,666.4 243,666.5 244,665.6 244.5,666.2 245,665.4 246,665.2 246.5,665.9 248.5,665.5 249.5,665.9 250,665.6 252,665.8 253.5,665.1 256.5,666.4 257.5,668.2 258.5,671.0 260,679.2 261,683.2 261.5,684.7 262,685.2 262.5,684.2 263,682.0 264,676.7 264.5,673.6 265,668.8 266.5,657.0 267.5,650.8 268,650.0 268.5,650.0 269,651.7 269.5,653.8 270,656.6 271,660.9 271.5,662.7 272,663.9 272.5,664.5 273.5,665.2 274,665.1 274.5,665.7 275.5,665.2 276,665.5 276.5,665.1 278,665.9 279,665.3 279.5,665.7 280.5,665.6 281,664.8 281.5,665.4 282.5,665.8 283,665.3 283.5,665.6 284.5,665.2 285.5,665.6 288,665.6 289,665.2 290.5,665.8 291,665.3 291.5,665.8 292,665.4 292.5,665.8 293,665.0 293.5,665.4 294,664.9 295.5,665.5 297,665.2 297.5,665.7 298,665.2 298.5,665.8 299,665.7 299.5,665.1 302,665.5 303.5,664.8 306,664.9 307.5,664.2 309,664.4 311,663.6 311.5,663.8 312,663.2 312.5,663.7 314.5,662.8 317,662.9 318,662.2 318.5,662.6 319,662.1 321.5,662.5 323,662.1 323.5,663.1 324,662.5 325.5,663.1 326,662.9 328.5,663.3 330,664.4 330.5,664.1 331.5,664.7 332,664.2 332.5,664.8 333,664.6 334,665.0 335,664.8 336,665.5 337.5,665.2 340,665.6 340.5,665.1 341.5,665.6 342.5,665.3 343,665.8 343.5,665.5 347,665.1 350,665.7 351,665.0 352,665.8 355,665.1 356,665.7 357.5,665.3 358,665.8 359,665.4 360.5,665.7 363,665.2 366,665.9 369,665.3 370,666.0 372.5,665.5 374,665.8 375,665.1 375.5,665.7 377,665.3 377.5,664.8 378,665.3 379,665.6 380,665.3 382.5,665.7 383,665.1 383.5,665.5 386.5,665.2 388,665.7 389.5,665.3 390.5,665.4 391,665.9 391.5,665.3 392,665.2 393,665.7 393.5,665.4 395,665.7 395.5,665.2 396.5,665.6 397.5,665.3 398,665.8 398.5,665.2 400,665.9 401.5,665.2 403,665.9 404.5,665.9 407,667.9 408,669.4 410,670.3 411.5,669.3 412.5,667.4 413.5,667.0 414,666.2 417.5,665.4 418.5,665.7 419,665.4 419.5,665.8 421.5,665.3 423,665.9 423.5,664.9 425,665.6 426,665.4 427.5,666.2 429,668.0 429.5,669.7 430.5,674.1 431.5,679.6 432,681.9 432.5,683.8 433,685.0 434,684.1 434.5,682.0 435,679.3 435.5,676.2 437,663.9 438,656.2 438.5,652.9 439,650.6 439.5,649.5 440,650.4 440.5,651.9 442.5,661.8 443.5,664.5 445.5,665.9 446,665.2 448.5,665.9 449,665.5 449.5,665.6 450.5,665.3 452.5,665.8 453,665.4 453.5,665.7 454,665.3 454.5,665.9 455,665.2 456,665.6 457,665.3 457.5,665.6 458,665.3 458.5,665.7 459,665.2 459.5,665.7 461.5,665.4 462.5,665.7 463,665.3 465,665.4 465.5,664.9 466,665.4 467,665.7 469,665.2 470.5,665.6 473.5,665.0 474.5,665.2 476,664.7 476.5,665.2 478.5,664.3 480,664.6 481,664.1 482,664.1 482.5,663.5 483,663.8 483.5,663.4 486,663.3 487.5,662.5 488.5,662.8 489.5,662.1 490.5,662.5 491,662.2 493.5,662.4 494.5,661.9 495.5,662.9 497,662.7 497.5,663.4 499,663.8 500.5,663.7 501.5,663.9 502,664.5 502.5,664.3 503,664.8 503.5,664.5 504.5,664.6 505,665.1 505.5,664.8 506,665.3 507,664.7 509,665.7 509.5,665.1 511.5,665.8 512.5,665.1 513,665.8 514,665.2 516,665.7 517.5,665.3 519,665.6 519.5,665.0 521,665.9 521.5,665.7 522,665.0 524.5,665.9 525,665.3 525.5,665.8 527,665.1 528,665.8 528.5,665.5 532.5,665.3 534,665.7 535.5,665.1 536.5,666.0 537.5,665.0 538,665.7 538.5,665.4 541.5,665.7 542,665.4 542.5,665.8 544,665.3 544.5,665.7 545,665.4 546,665.7 547.5,665.3 550,665.6 550.5,665.1 551,665.5 552.5,665.4 553,666.0 554.5,665.0 555.5,665.7 556,665.4 556.5,665.7 557,665.3 557.5,665.6 558,665.3 559.5,665.7 560.5,665.2 561,665.6 562,665.6 562.5,665.2 563,665.7 564,665.3 565,665.7 567,665.4 567.5,665.8 568.5,665.2 570.5,665.7 571,665.1 571.5,665.9 572.5,666.0 573,666.7 573.5,666.6 576,669.5 578,669.9 579,669.6 581,667.0 581.5,667.1 583.5,665.5 586.5,665.7 587,665.3 588,665.2 588.5,665.7 589.5,665.7 590.5,664.9 591.5,665.5 593,665.8 593.5,665.4 594,665.8 594.5,665.3 595,666.1 595.5,665.8 596,666.9 596.5,667.2 598,672.7 599,678.1 599.5,679.9 600.5,684.3 601,684.7 602,683.8 602.5,681.4 603,678.2 604,670.8 605,662.4 605.5,658.8 606,654.4 607,650.2 607.5,650.2 608,650.8 608.5,652.6 610.5,662.9 611,663.9 612.5,665.3 613,665.5 613.5,665.1 614.5,665.8 615.5,665.1 616.5,665.9 617,665.5 618,665.8 619,665.4 621,665.8 621.5,665.3 622,665.6 623,665.0 623.5,665.7 625,665.1 626,665.9 628,665.4 629,665.7 629.5,665.2 630,665.8 631,665.8 631.5,665.1 632,665.8 634,665.2 634.5,665.7 636.5,665.5 637,665.0 638,665.3 638.5,665.8 640,664.9 640.5,665.4 641.5,665.5 642,664.8 642.5,665.4 645,664.6 645.5,665.0 646,663.9 646.5,664.8 647.5,664.2 648,664.4 649,663.7 650,664.0 651,663.4 653.5,663.4 654,662.8 655,662.5 656,662.6 657,662.2 657.5,662.7 658,662.0 658.5,662.1 659,661.7 659.5,662.5 661.5,662.1 663,662.6 665,662.7 665.5,663.2 667.5,663.7 668,663.4 669,664.1 670.5,664.2 671,664.9 671.5,664.5 672.5,664.8 673,665.5 673.5,665.0 674.5,665.3 676,664.9 677,665.8 679.5,665.3 681,665.7 682,665.2 684,665.9 684.5,665.4 685,665.9 686.5,665.1 687,665.8 687.5,665.9 689.5,665.1 693,665.8 693.5,665.5 697.5,665.3 698.5,665.8 702,665.1 703,665.6 704.5,665.7 705,665.3 705.5,665.7 706.5,665.5 707,665.8 707.5,665.3 711,665.6 711.5,665.3 713.5,665.5 714,665.0 716,665.6 716.5,665.4 717,665.9 717.5,665.2 718,665.9 718.5,665.3 719,665.2 722,665.7 722.5,665.3 723,665.8 725,665.5 725.5,665.8 726,665.2 726.5,665.8 727,665.4 727.5,665.7 728,665.4 728.5,665.9 730.5,665.2 731.5,665.8 732.5,665.2 733,665.9 733.5,665.4 735.5,665.9 736,665.4 738,667.1 738.5,668.2 740,669.1 741,670.1 741.5,670.1 745,666.9 747.5,665.5 748,665.9 749.5,665.3 751.5,665.5 752.5,665.3 753,665.8 754.5,665.2 755.5,665.3 756,665.7 758.5,665.6 760,667.1 761,669.8 762,674.1 763,679.6 763.5,682.0 764.5,684.8 765,685.1 765.5,683.6 766.5,679.2 767,676.1 767.5,672.0 768,668.3 769,660.0 770,652.9 770.5,650.6 771,649.9 771.5,650.6 772,652.0 773.5,659.3 774.5,663.3 775,664.3 776,665.3 777.5,665.7 778,665.4 779,665.8 779.5,665.2 780,665.3 780.5,665.8 782,665.8 782.5,665.4 783,665.9 786,665.2 787.5,665.5 788.5,665.1 789,665.5 789.5,665.0 790.5,665.6 791,665.1 792.5,665.8 794,665.5 794.5,665.1 795.5,665.6 797.5,665.5 798,665.0 799.5,665.6 801,665.1 803,665.2 803.5,665.7 804,665.0 804.5,665.4 805,664.9 806,665.2 807,664.8 808,665.4 808.5,664.6 809.5,664.9 810,664.4 810.5,665.0 811,664.1 812,664.4 813.5,663.5 814.5,663.8 815.5,663.2 816,663.6 818,662.7 818.5,663.1 819.5,662.6 821,662.6 822.5,662.1 828,662.7 831.5,664.0 832,663.6 832.5,664.2 833,664.0 834.5,664.9 835,664.5 835.5,664.9 836,664.2 836.5,664.9 837,664.5 837.5,664.9 841.5,665.5 843,665.0 843.5,665.6 845,665.3 846.5,666.0 847,665.4 848,665.8 848.5,665.4 850.5,665.7 851.5,665.3 852,666.0 852.5,665.3 853,665.7 853.5,665.5 856,665.9 856.5,665.3 858,665.1 858.5,665.6 859,665.1 861,665.5 861.5,664.9 864.5,665.8 865,666.2 865.5,665.4 866.5,665.7 867.5,665.3 868.5,665.7 870,665.0 871,665.8 872,665.3 873.5,665.8 874,665.3 875.5,665.2 876,665.9 876.5,665.1 877.5,665.7 878.5,665.7 879,665.0 879.5,665.5 880.5,665.6 881,665.2 882,665.3 882.5,665.8 883,665.4 885.5,665.8 887.5,665.1 888,665.5 889.5,665.3 890,665.8 892,665.6 892.5,665.9 893,665.5 894,665.4 894.5,665.8 895,665.5 896.5,665.9 897,666.8 898,667.0 899.5,668.6 900,669.6 901.5,670.1 902.5,669.9 904,668.4 904.5,667.5 906,666.8 907,665.8 907.5,666.0 908,665.5 909.5,665.1 910,665.9 911,664.9 911.5,665.3 912,665.1 912.5,665.7 913.5,665.3 914,665.6" stroke="#1c9c1c" stroke-width="1.45" fill="none" stroke-linejoin="round"/>
<path d="M115.5 721.8v4 M115.5 735.0v3 M135.5 721.8v2 M135.5 736.0v2 M155.5 721.8v2 M155.5 736.0v2 M175.5 721.8v2 M175.5 736.0v2 M195.5 721.8v2 M195.5 736.0v2 M215.5 721.8v4 M215.5 735.0v3 M235.5 721.8v2 M235.5 736.0v2 M255.5 721.8v2 M255.5 736.0v2 M275.5 721.8v2 M275.5 736.0v2 M295.5 721.8v2 M295.5 736.0v2 M315.5 721.8v4 M315.5 735.0v3 M335.5 721.8v2 M335.5 736.0v2 M355.5 721.8v2 M355.5 736.0v2 M375.5 721.8v2 M375.5 736.0v2 M395.5 721.8v2 M395.5 736.0v2 M415.5 721.8v4 M415.5 735.0v3 M435.5 721.8v2 M435.5 736.0v2 M455.5 721.8v2 M455.5 736.0v2 M475.5 721.8v2 M475.5 736.0v2 M495.5 721.8v2 M495.5 736.0v2 M515.5 721.8v4 M515.5 735.0v3 M535.5 721.8v2 M535.5 736.0v2 M555.5 721.8v2 M555.5 736.0v2 M575.5 721.8v2 M575.5 736.0v2 M595.5 721.8v2 M595.5 736.0v2 M615.5 721.8v4 M615.5 735.0v3 M635.5 721.8v2 M635.5 736.0v2 M655.5 721.8v2 M655.5 736.0v2 M675.5 721.8v2 M675.5 736.0v2 M695.5 721.8v2 M695.5 736.0v2 M715.5 721.8v4 M715.5 735.0v3 M735.5 721.8v2 M735.5 736.0v2 M755.5 721.8v2 M755.5 736.0v2 M775.5 721.8v2 M775.5 736.0v2 M795.5 721.8v2 M795.5 736.0v2 M815.5 721.8v4 M815.5 735.0v3 M835.5 721.8v2 M835.5 736.0v2 M855.5 721.8v2 M855.5 736.0v2 M875.5 721.8v2 M875.5 736.0v2 M895.5 721.8v2 M895.5 736.0v2" stroke="#d0d0d0" stroke-width="1" fill="none"/>
<text x="115.5" y="734.2" text-anchor="start" class="tl">0.0</text>
<text x="216.0" y="734.2" text-anchor="middle" class="tl">0.5</text>
<text x="316.0" y="734.2" text-anchor="middle" class="tl">1.0</text>
<text x="416.0" y="734.2" text-anchor="middle" class="tl">1.5</text>
<text x="516.0" y="734.2" text-anchor="middle" class="tl">2.0</text>
<text x="616.0" y="734.2" text-anchor="middle" class="tl">2.5</text>
<text x="716.0" y="734.2" text-anchor="middle" class="tl">3.0</text>
<text x="816.0" y="734.2" text-anchor="middle" class="tl">3.5</text>
<text x="915.5" y="734.2" text-anchor="end" class="tl">4</text>
<rect x="114.0" y="756.5" width="800.0" height="111.5" fill="#1d1d1d" filter="url(#sh)" opacity="0.7"/>
<rect x="115.5" y="758" width="798.5" height="110" fill="#1d1d1d"/>
<path d="M135.5 758V868 M155.5 758V868 M175.5 758V868 M195.5 758V868 M215.5 758V868 M235.5 758V868 M255.5 758V868 M275.5 758V868 M295.5 758V868 M315.5 758V868 M335.5 758V868 M355.5 758V868 M375.5 758V868 M395.5 758V868 M415.5 758V868 M435.5 758V868 M455.5 758V868 M475.5 758V868 M495.5 758V868 M515.5 758V868 M535.5 758V868 M555.5 758V868 M575.5 758V868 M595.5 758V868 M615.5 758V868 M635.5 758V868 M655.5 758V868 M675.5 758V868 M695.5 758V868 M715.5 758V868 M735.5 758V868 M755.5 758V868 M775.5 758V868 M795.5 758V868 M815.5 758V868 M835.5 758V868 M855.5 758V868 M875.5 758V868 M895.5 758V868 M115.5 777.5H914.0 M115.5 797.5H914.0 M115.5 817.5H914.0 M115.5 837.5H914.0" stroke="#575757" stroke-width="1" fill="none"/>
<path d="M115.5,799.1 116,798.5 117,798.5 117.5,798.9 119,798.5 119.5,799.0 120,798.6 121,799.0 121.5,798.5 124,798.8 124.5,798.4 125.5,798.9 127,798.6 129,799.3 130,799.0 130.5,799.5 133,799.3 133.5,800.0 134,799.3 135,800.4 135.5,800.0 136,800.5 136.5,800.3 137,801.2 137.5,800.9 138,801.3 138.5,801.0 139,801.7 143,803.6 143.5,804.3 144.5,804.7 145,805.6 146.5,806.2 147,806.9 148,807.2 151,809.8 151.5,809.4 154.5,810.8 155,810.4 156.5,810.9 160.5,808.9 161,807.9 161.5,807.7 163,805.9 168,801.3 168.5,801.3 169.5,800.3 170,800.5 171,799.6 172.5,799.5 174,798.8 175.5,798.8 176,799.2 176.5,798.7 177,798.9 177.5,798.5 178,799.1 179,798.4 179.5,798.8 180,798.6 180.5,799.2 181.5,798.5 182,798.9 187,798.5 187.5,799.1 188,798.8 189,799.3 189.5,798.7 190.5,798.3 191.5,798.8 192.5,798.3 194,799.1 194.5,798.4 195,798.9 195.5,798.2 196,799.0 197,798.5 197.5,799.0 199.5,798.9 200.5,798.5 202,798.9 204,798.6 206.5,799.1 207,798.6 207.5,799.3 208.5,798.8 211.5,798.6 212,798.1 212.5,798.8 213,798.3 213.5,798.8 214.5,798.6 215,798.9 216,798.5 220,798.9 221,798.5 222,799.3 223,798.5 223.5,798.9 226,798.4 226.5,798.8 227,798.6 230,799.4 231.5,800.7 232.5,801.1 233.5,802.2 235,802.2 235.5,803.0 236.5,802.8 237.5,801.4 238,801.7 239.5,800.6 242,800.7 243,801.4 246,800.9 247.5,799.1 248,799.2 249,798.4 251.5,799.2 252,798.6 253.5,798.9 255,798.1 255.5,798.9 256,798.7 257,799.1 258.5,798.9 259,798.4 261,799.4 261.5,800.2 262,801.3 264,810.0 264.5,811.0 265,811.5 265.5,810.1 266,807.3 266.5,804.2 267,800.4 267.5,797.9 268,794.8 269,791.3 269.5,791.0 270.5,792.0 272,795.7 273.5,798.3 276,798.6 276.5,799.3 279,798.5 279.5,798.8 283,798.5 285,799.0 286,798.4 287.5,798.9 291,798.4 292,799.3 292.5,798.6 298.5,799.8 299.5,799.7 301.5,800.7 302,800.4 306,802.4 311,806.2 311.5,806.2 312.5,807.3 313,807.1 314,808.2 316,809.5 316.5,809.4 317.5,810.1 318.5,810.1 320,810.8 320.5,810.4 322.5,810.5 324.5,809.5 325,808.7 326,808.2 327.5,806.4 328,806.3 328.5,805.2 329.5,804.8 330,803.8 330.5,803.8 331.5,802.5 332.5,802.1 334,800.2 337,800.0 337.5,799.6 338,799.9 339.5,798.9 341,799.1 342.5,798.5 343,798.9 343.5,798.6 344,799.0 346.5,798.9 347.5,798.4 348,799.0 348.5,798.6 349,798.9 353.5,798.8 356,798.3 357.5,798.8 358,798.4 358.5,798.9 359,798.5 360,798.6 360.5,799.0 361,798.7 361.5,799.1 362.5,798.6 363.5,799.0 364,798.5 366,798.6 366.5,799.1 368.5,798.4 369,798.9 369.5,798.6 370,799.4 370.5,798.8 371.5,798.4 374,798.8 377,798.4 378,798.8 379,798.5 379.5,798.9 380,798.5 382,798.7 383,798.4 383.5,798.8 385.5,798.7 386,799.1 386.5,798.7 387.5,799.0 389.5,798.5 390,798.8 393.5,798.7 394,799.1 394.5,798.3 397,798.7 397.5,799.1 399,798.8 400,798.8 400.5,799.4 401,799.1 402,800.3 402.5,800.2 404,801.1 405,802.3 405.5,802.2 406.5,803.0 407,802.6 408,802.9 408.5,802.0 409,801.8 410,800.7 410.5,801.2 411.5,800.5 413,800.4 415,801.4 416,800.8 417.5,800.7 418.5,799.5 419.5,799.5 420,799.0 421,799.3 421.5,798.5 423.5,798.9 424,798.4 424.5,798.8 425.5,798.3 427,799.1 427.5,798.6 428,798.8 428.5,798.4 429,798.9 429.5,798.7 430,799.0 430.5,798.4 431.5,798.5 432,799.5 432.5,799.5 433,800.1 433.5,801.7 435,808.6 436,811.4 436.5,810.7 437,809.1 437.5,806.8 439,796.5 439.5,794.1 440,792.3 441,790.7 441.5,790.9 442,791.8 444,797.3 445,797.6 445.5,798.6 446,798.4 448.5,798.8 452,798.3 453,799.0 455.5,799.1 456.5,798.6 460,798.6 460.5,799.2 461.5,798.4 462,799.0 462.5,798.7 464,799.1 465.5,799.0 466,799.6 466.5,799.1 467.5,799.0 469.5,799.7 470,799.4 474.5,800.8 475,801.6 478,802.6 480,804.4 480.5,804.4 482.5,806.0 483,806.8 485.5,808.0 486,808.9 487,808.9 488,809.8 489,810.1 489.5,810.7 490,810.4 490.5,810.6 491,811.2 492,810.4 493.5,810.7 494.5,809.7 495,810.0 496.5,808.6 497,808.6 498,807.1 499.5,805.6 500.5,805.1 503,802.6 503.5,801.7 504,801.9 507,799.7 508.5,799.4 509,799.7 509.5,799.1 512.5,798.8 513,799.1 514.5,798.6 516,799.2 516.5,798.5 519,798.9 521,798.6 523,799.0 524.5,798.5 526.5,799.1 527,798.6 527.5,798.8 528.5,798.3 531,798.9 531.5,798.7 533.5,798.8 534.5,798.4 535.5,799.0 537.5,798.5 539.5,798.9 540,798.4 541.5,798.4 542,799.1 544.5,798.7 545,798.0 546,798.8 546.5,798.2 547,799.0 549.5,798.6 550,799.1 551,798.5 551.5,799.1 552,798.7 553.5,799.2 555,798.4 556,799.1 556.5,798.5 557.5,798.3 559.5,798.8 560,798.3 561,799.0 564,798.4 565.5,798.9 566.5,798.4 567,799.1 567.5,798.7 568,799.5 569,799.1 570,800.2 570.5,799.9 571.5,801.3 572,801.1 573.5,802.9 574,802.9 575,802.4 576,802.3 579,800.5 580.5,800.6 581,801.0 581.5,800.7 582.5,801.3 584,801.1 585.5,800.0 588.5,798.6 589,799.0 589.5,798.6 590.5,799.3 592,798.6 593.5,798.9 594.5,798.3 595,798.9 597,798.5 598,798.9 598.5,798.6 599,799.1 599.5,798.8 600,799.6 600.5,799.6 601,800.7 602.5,807.0 603,809.5 603.5,810.8 604,811.2 604.5,810.6 605,808.9 606.5,798.2 607.5,793.6 608,791.8 609,790.7 610.5,793.5 611.5,796.6 612,797.2 612.5,797.3 613,798.1 613.5,798.4 614,798.0 614.5,798.7 615,799.0 616,798.5 618,798.8 618.5,798.3 619.5,799.1 620,798.7 622,798.4 622.5,799.2 623.5,798.5 624,798.9 626,798.4 627,798.9 628,798.7 628.5,799.0 630,798.5 631,799.1 631.5,798.7 632,799.4 633,798.7 634,799.4 634.5,799.0 635.5,799.4 636,799.2 637,799.8 638,799.3 640,800.6 641.5,800.3 642.5,801.4 643,801.2 643.5,801.6 644,801.5 645.5,802.9 646.5,803.5 647,803.4 648,804.6 648.5,804.0 649,805.0 650,806.0 652,807.4 653.5,808.0 655,809.5 655.5,809.2 657.5,810.5 658.5,810.3 659.5,810.9 660.5,810.8 661,810.3 661.5,810.7 662.5,809.8 663,809.8 663.5,809.1 664.5,809.0 665.5,807.5 666,807.4 667,806.4 667.5,805.2 668.5,805.0 669,804.0 671,802.3 671.5,801.4 672,801.7 672.5,801.0 673.5,800.9 674,800.2 675,800.3 677.5,799.1 678,799.5 679,799.3 679.5,798.4 680,798.8 681.5,798.5 682,798.9 682.5,798.6 683,799.2 683.5,798.7 685.5,798.8 686.5,798.0 687,798.6 689,798.8 689.5,798.4 691,798.9 694,798.4 695.5,799.0 696,798.8 697,799.1 698,798.5 700,798.9 700.5,798.6 704.5,798.9 705,798.6 705.5,799.4 706,798.8 707,798.3 709,799.0 710,798.5 712.5,798.7 713,798.3 713.5,798.7 716,798.7 716.5,798.3 717,798.9 717.5,798.7 718.5,799.0 719,798.4 721.5,798.5 722,799.1 722.5,798.6 724,799.0 724.5,798.4 726,798.9 726.5,798.6 731.5,798.8 733,799.8 734,799.7 734.5,801.0 736.5,802.1 737,802.7 737.5,802.3 738,802.9 739,803.1 739.5,802.4 740,802.5 741.5,801.0 742,801.2 742.5,800.5 743.5,800.9 744,800.4 745,801.3 746.5,801.0 747,801.6 749,799.9 749.5,800.2 750.5,799.2 751,799.5 752,798.9 753.5,798.9 754,798.6 754.5,798.9 755.5,798.5 757,799.0 757.5,798.9 758,798.2 759,798.9 760,798.5 761,799.1 761.5,798.2 762,799.0 763,798.7 763.5,799.1 764.5,800.5 765,801.9 766,805.9 767,810.5 767.5,811.3 768,811.1 768.5,809.7 769,806.3 769.5,803.5 770.5,796.7 771,794.3 771.5,792.5 772.5,790.7 774,793.4 775.5,797.0 776,797.4 776.5,798.4 777.5,799.0 778.5,798.5 779.5,799.0 781,798.6 781.5,799.0 782,798.5 782.5,798.9 785.5,798.6 787.5,799.0 788,798.4 788.5,798.8 789,798.6 791,799.1 792,798.7 793.5,799.2 794,798.7 794.5,799.1 795.5,798.3 796,799.1 796.5,798.8 798,799.4 798.5,798.9 799,798.9 799.5,799.7 801,799.2 802,800.3 802.5,799.8 804,800.5 805,800.4 806,801.3 806.5,801.1 807.5,802.1 808.5,802.0 809,802.8 810,802.8 810.5,803.7 811,803.6 812,804.9 813,805.3 815,807.0 815.5,806.9 816,807.8 816.5,807.8 820.5,810.2 823,810.8 825.5,810.6 826,809.8 828.5,808.6 830,806.6 831,806.0 831.5,805.1 837,800.7 838.5,800.0 839.5,800.2 840,799.4 840.5,799.1 842,799.1 842.5,798.6 843,798.6 843.5,799.1 844,798.6 845,799.1 845.5,798.1 846,798.9 848,798.7 849,799.1 850,798.4 850.5,799.0 852,798.8 853,799.1 854,798.6 854.5,799.0 855,798.6 855.5,799.0 856,798.6 858,798.5 858.5,799.1 859,798.6 859.5,798.9 860,798.5 863.5,798.9 864.5,798.6 868.5,798.8 869,798.5 872.5,798.8 873,798.3 873.5,798.7 875,798.7 875.5,798.1 876,798.9 877,799.0 879,799.0 879.5,798.4 882,799.1 884.5,798.3 885,798.7 886.5,798.5 888,798.8 889.5,798.4 890.5,799.0 891.5,798.8 893,799.3 893.5,800.2 896,801.2 897.5,802.5 898.5,802.5 899,802.9 901.5,801.4 902,800.6 902.5,801.1 904,800.5 904.5,801.0 905.5,800.5 906.5,801.2 907,800.9 909,800.9 910.5,799.8 911,800.2 912,799.0 914,798.7" stroke="#1c9c1c" stroke-width="1.45" fill="none" stroke-linejoin="round"/>
<rect x="57" y="477" width="854" height="2" fill="#1e1e1e"/>
<rect x="57" y="612.5" width="854" height="2" fill="#1e1e1e"/>
<rect x="57" y="747.5" width="854" height="2" fill="#1e1e1e"/>
<path d="M68 162.0H76V121.5H96V162.0H104" stroke="#d2d2d2" stroke-width="1.7" fill="none"/>
<path d="M68 422.5H76V382H96V422.5H104" stroke="#d2d2d2" stroke-width="1.7" fill="none"/>
<path d="M68 558.0H76V517.5H96V558.0H104" stroke="#d2d2d2" stroke-width="1.7" fill="none"/>
<path d="M68 693.0H76V652.5H96V693.0H104" stroke="#d2d2d2" stroke-width="1.7" fill="none"/>
<path d="M68 828.0H76V787.5H96V828.0H104" stroke="#d2d2d2" stroke-width="1.7" fill="none"/>
<text x="32.5" y="103" class="ll">II</text>
<path d="M45 95.5H54.5L49.75 103Z" fill="#19c219"/>
<text x="37.5" y="364" class="ll">I</text>
<path d="M45 356.5H54.5L49.75 364Z" fill="#19c219"/>
<text x="32.5" y="499.5" class="ll">II</text>
<path d="M45 492.0H54.5L49.75 499.5Z" fill="#19c219"/>
<text x="27" y="634.5" class="ll">III</text>
<path d="M45 627.0H54.5L49.75 634.5Z" fill="#19c219"/>
<text x="8.5" y="770" class="ll">aVR</text>
<path d="M45 762.5H54.5L49.75 770Z" fill="#19c219"/>
<rect x="916.5" y="80" width="8.5" height="326" rx="4" fill="#9a9db8"/>
<rect x="115" y="856" width="193" height="14" rx="6" fill="#8f97b8"/>
</svg>
<div class="a" style="left:115px;top:207px;width:800px;height:126px;overflow:hidden"><b style="left:0px;background:linear-gradient(#000080 0px,#00008c 9.5px,#0000d8 19.5px,#0000bf 25.5px,#00008e 31.5px,#00009c 36.5px,#0005fa 48.5px,#003bff 51.5px,#00f8f6 59.5px,#03ff06 75.5px,#54ff00 85.5px,#62ff00 107.5px,#41ff00 123.5px,#36ff00 126px)"></b><b style="left:2px;background:linear-gradient(#000080 0px,#00008d 12.5px,#0000c8 22.5px,#0000af 29.5px,#000088 35.5px,#0006f7 46.5px,#003cff 49.5px,#00e8f9 56.5px,#00ffd7 59.5px,#04ff09 73.5px,#55ff00 85.5px,#54ff00 107.5px,#10ff0e 126px)"></b><b style="left:4px;background:linear-gradient(#000080 0px,#00008e 16.5px,#0000b2 25.5px,#000094 32.5px,#00008d 35.5px,#0005ed 43.5px,#0030ff 46.5px,#00e3f9 53.5px,#00fed9 56.5px,#01ff0f 70.5px,#27ff00 76.5px,#52ff00 86.5px,#41ff00 103.5px,#0cff16 117.5px,#01ff4c 126px)"></b><b style="left:6px;background:linear-gradient(#000080 0px,#000093 23.5px,#000099 33.5px,#000df2 41.5px,#0046ff 44.5px,#00e2f7 50.5px,#00fed6 53.5px,#01ff14 67.5px,#17ff00 72.5px,#3fff00 83.5px,#2aff01 97.5px,#08ff1e 108.5px,#00fca6 126px)"></b><b style="left:8px;background:linear-gradient(#000080 0px,#00009d 25.5px,#0001c5 33.5px,#0018f2 38.5px,#0051fe 41.5px,#00d5f9 46.5px,#00fadd 49.5px,#00ff1e 63.5px,#0bff00 68.5px,#28ff00 79.5px,#0dff12 94.5px,#01ff5f 106.5px,#00eecc 119.5px,#00c5ec 126px)"></b><b style="left:10px;background:linear-gradient(#000080 0px,#000099 17.5px,#0009e5 31.5px,#0031fa 35.5px,#00d0f8 42.5px,#00f7de 45.5px,#00ff30 58.5px,#04ff02 64.5px,#13ff03 76.5px,#04ff25 87.5px,#00f2bf 106.5px,#00d6e0 111.5px,#0080f3 119.5px,#003be8 126px)"></b><b style="left:12px;background:linear-gradient(#000080 0px,#00009d 15.5px,#000bf1 27.5px,#0044fd 31.5px,#00d7f6 38.5px,#00f7db 41.5px,#00ff33 54.5px,#01ff03 61.5px,#05ff11 73.5px,#00ff5b 84.5px,#00f1c0 95.5px,#00c6e6 101.5px,#0065f1 109.5px,#0017d7 117.5px,#0006c3 123.5px,#0006c3 126px)"></b><b style="left:14px;background:linear-gradient(#000080 0px,#00009f 13.5px,#0005ef 23.5px,#002efd 26.5px,#00e0f4 34.5px,#00fdc9 38.5px,#00ff35 50.5px,#00ff09 58.5px,#01ff1e 67.5px,#00fe85 79.5px,#00e7d3 87.5px,#0095f0 94.5px,#0044e6 100.5px,#0015cf 106.5px,#000cc5 109.5px,#0013ca 116.5px,#0034de 122.5px,#004aea 126px)"></b><b style="left:16px;background:linear-gradient(#000081 0px,#00009f 11.5px,#0009f5 21.5px,#005cff 25.5px,#00dffa 30.5px,#00fbda 33.5px,#00ff4b 44.5px,#00ff19 52.5px,#00ff28 60.5px,#00fd8a 71.5px,#00e6d6 78.5px,#0094ef 84.5px,#003cdf 90.5px,#0018d2 94.5px,#000ec8 97.5px,#0018cd 103.5px,#0045e1 109.5px,#00a1ed 118.5px,#00d7d7 126px)"></b><b style="left:18px;background:linear-gradient(#000081 0px,#0000a4 10.5px,#0003f0 18.5px,#0033ff 21.5px,#00edf7 28.5px,#00ffc0 32.5px,#00ff4f 41.5px,#00ff2c 48.5px,#00ff40 55.5px,#00f2b9 67.5px,#00d0de 71.5px,#0080ee 76.5px,#0026dc 82.5px,#0015c6 85.5px,#0013c9 89.5px,#0031da 94.5px,#009ee9 103.5px,#00e6c1 112.5px,#02fe6a 126px)"></b><b style="left:20px;background:linear-gradient(#000081 0px,#0000a6 9.5px,#0006f9 17.5px,#0066ff 21.5px,#00f1fb 26.5px,#00ffb4 31.5px,#00ff5e 39.5px,#00ff4d 45.5px,#00ff72 52.5px,#00efbb 59.5px,#00d7d8 62.5px,#0087ec 67.5px,#0042e0 71.5px,#0019cb 75.5px,#001cc8 80.5px,#0043dd 84.5px,#0075e6 88.5px,#00addf 92.5px,#00e6b9 98.5px,#05fd63 108.5px,#17ff24 119.5px,#21ff0f 126px)"></b><b style="left:22px;background:linear-gradient(#000081 0px,#0000a5 8.5px,#0006fc 16.5px,#00f8ff 25.5px,#00ff96 34.5px,#00ff81 41.5px,#00f3b1 49.5px,#00d9d5 53.5px,#008eea 58.5px,#0057e4 61.5px,#0021d5 65.5px,#0023d0 71.5px,#0070e3 77.5px,#00a5dc 80.5px,#01e5b0 86.5px,#0afd52 95.5px,#28ff10 106.5px,#60ff00 126px)"></b><b style="left:24px;background:linear-gradient(#000082 0px,#0000aa 8.5px,#0000f9 15.5px,#0040ff 18.5px,#00ebff 25.5px,#00fbcc 32.5px,#00ecc8 39.5px,#00d5d8 43.5px,#0087e9 49.5px,#0057e3 52.5px,#0023d4 56.5px,#0025ce 61.5px,#0073df 67.5px,#00a8d4 70.5px,#02e3a9 75.5px,#0cfc54 82.5px,#2fff11 91.5px,#7aff00 109.5px,#9dff00 126px)"></b><b style="left:26px;background:linear-gradient(#000082 0px,#0000a9 8.5px,#0007fb 16.5px,#0096ff 24.5px,#00b8fa 28.5px,#00abf4 33.5px,#0070eb 39.5px,#0025d5 46.5px,#0033d4 52.5px,#0077da 57.5px,#009dd2 59.5px,#02dea8 64.5px,#0ffc4a 71.5px,#3aff10 79.5px,#90fe00 95.5px,#d1f700 115.5px,#e0f500 126px)"></b><b style="left:28px;background:linear-gradient(#000081 0px,#0000aa 9.5px,#0008ec 18.5px,#0036eb 26.5px,#001fd2 36.5px,#002dd2 41.5px,#0084d6 47.5px,#03daa7 53.5px,#15fb49 60.5px,#38ff15 66.5px,#85fe00 77.5px,#dfe800 95.5px,#fabb00 114.5px,#fdb200 126px)"></b><b style="left:30px;background:linear-gradient(#000081 0px,#0002bd 21.5px,#0018c9 28.5px,#0031d7 31.5px,#007ad9 36.5px,#02b7bd 40.5px,#04dd9a 43.5px,#1ffb3e 50.5px,#41ff14 55.5px,#9cfc00 66.5px,#e1db00 78.5px,#fc9200 92.5px,#fe5800 108.5px,#fe5000 126px)"></b><b style="left:32px;background:linear-gradient(#000080 0px,#0000a2 14.5px,#0013ce 20.5px,#005be6 25.5px,#00aad3 29.5px,#02e09f 33.5px,#1bfb42 39.5px,#43ff14 44.5px,#9dfb01 53.5px,#dbd800 62.5px,#fa8600 73.5px,#f63100 87.5px,#eb0c00 107.5px,#f30d00 126px)"></b><b style="left:34px;background:linear-gradient(#000081 0px,#0000a6 9.5px,#000ad8 14.5px,#003af0 17.5px,#00a6ee 21.5px,#00e0c5 24.5px,#11fc45 30.5px,#37ff15 34.5px,#99fd01 42.5px,#d9dc00 49.5px,#f78a00 57.5px,#f23300 67.5px,#de0d00 77.5px,#c20000 103.5px,#d70000 126px)"></b><b style="left:36px;background:linear-gradient(#000082 0px,#0000a3 6.5px,#0006e5 11.5px,#002df8 13.5px,#00c2f2 17.5px,#00ead0 19.5px,#08ff46 24.5px,#29ff13 27.5px,#8fff00 34.5px,#dde700 40.5px,#fc8200 47.5px,#f63300 53.5px,#dd0d00 60.5px,#a40000 81.5px,#a30000 107.5px,#c00000 126px)"></b><b style="left:38px;background:linear-gradient(#000083 0px,#0000a6 5.5px,#0003e8 9.5px,#0014f6 10.5px,#0063fe 12.5px,#00c4fb 14.5px,#00f4d5 16.5px,#04ff30 21.5px,#36ff06 24.5px,#e8f600 35.5px,#fd9b00 40.5px,#fe2300 46.5px,#de0300 52.5px,#9b0000 68.5px,#870000 91.5px,#b30000 124.5px,#b50000 126px)"></b><b style="left:40px;background:linear-gradient(#000084 0px,#0000b6 5.5px,#0003f2 8.5px,#001efc 9.5px,#00e8fa 13.5px,#00fec3 15.5px,#01ff10 20.5px,#49ff00 23.5px,#aeff00 30.5px,#f7fb00 34.5px,#ff1600 45.5px,#dc0100 51.5px,#9d0000 66.5px,#8a0000 90.5px,#b80000 126px)"></b><b style="left:42px;background:linear-gradient(#000086 0px,#0000b1 4.5px,#0000ed 7.5px,#000dfd 8.5px,#00d2ff 12.5px,#00f7f6 13.5px,#01ff18 20.5px,#4aff02 24.5px,#e1f900 35.5px,#fd9400 42.5px,#fc3900 48.5px,#e50f00 55.5px,#ad0000 77.5px,#ae0000 106.5px,#c80000 126px)"></b><b style="left:44px;background:linear-gradient(#000085 0px,#0000b9 5.5px,#0005ee 8.5px,#003dfa 10.5px,#00b3fc 13.5px,#00e0e5 15.5px,#00fb72 20.5px,#18ff2a 24.5px,#4cff09 29.5px,#c9f100 41.5px,#f3a700 50.5px,#f43d00 63.5px,#e00f00 78.5px,#d60100 111.5px,#e40200 126px)"></b><b style="left:46px;background:linear-gradient(#000082 0px,#0000af 7.5px,#0010d8 11.5px,#006aed 16.5px,#00a3e1 19.5px,#02df9d 25.5px,#22fa3b 33.5px,#43fe17 38.5px,#9ff901 49.5px,#dcd300 60.5px,#f88a00 73.5px,#f93600 94.5px,#fa2000 123.5px,#fb2100 126px)"></b><b style="left:48px;background:linear-gradient(#000082 0px,#000bc9 16.5px,#003bd7 23.5px,#0087d2 30.5px,#07d897 38.5px,#22f942 46.5px,#42fe17 52.5px,#94fc01 64.5px,#dede00 80.5px,#faa400 98.5px,#ff7900 122.5px,#ff7800 126px)"></b><b style="left:50px;background:linear-gradient(#000083 0px,#0000b4 7.5px,#0006e4 12.5px,#0044e9 19.5px,#0046e1 26.5px,#0032d7 31.5px,#0044d1 38.5px,#0185d2 44.5px,#06db97 52.5px,#1cfb43 60.5px,#3eff14 67.5px,#8bfe00 81.5px,#e0ec00 105.5px,#f7d500 126px)"></b><b style="left:52px;background:linear-gradient(#000083 0px,#0000b3 6.5px,#0006fb 11.5px,#00b9fe 18.5px,#00d4f0 21.5px,#00cad9 28.5px,#0092e1 36.5px,#0063e0 40.5px,#0034d7 45.5px,#003dd2 51.5px,#0090d1 58.5px,#03dda0 65.5px,#15fc43 74.5px,#3bff10 83.5px,#8eff00 103.5px,#c7fc00 126px)"></b><b style="left:54px;background:linear-gradient(#000083 0px,#0000ae 6.5px,#0004f9 11.5px,#0083ff 15.5px,#00e8ff 18.5px,#00fde8 20.5px,#00fe9f 26.5px,#00fb88 32.5px,#00e4b1 41.5px,#00ccc8 44.5px,#0097e0 49.5px,#0064e0 52.5px,#002cd4 57.5px,#0032d4 63.5px,#0075db 69.5px,#00accc 73.5px,#02e1aa 78.5px,#0cfc50 87.5px,#31ff10 98.5px,#7aff00 120.5px,#85ff00 126px)"></b><b style="left:56px;background:linear-gradient(#000082 0px,#0000ac 7.5px,#0005f1 12.5px,#0030fd 14.5px,#00e2fd 19.5px,#00fce3 21.5px,#00ff64 29.5px,#00ff37 35.5px,#01ff41 41.5px,#00f491 50.5px,#00d6c7 55.5px,#0082e3 61.5px,#0025d3 68.5px,#0026cf 74.5px,#0070e1 81.5px,#00a9d8 85.5px,#01e3b4 91.5px,#08fd5a 101.5px,#1eff1b 111.5px,#4cff02 126px)"></b><b style="left:58px;background:linear-gradient(#000081 0px,#0000a5 8.5px,#0007ec 14.5px,#0047fe 17.5px,#00d1fb 21.5px,#00fcd3 24.5px,#00ff37 33.5px,#02ff07 38.5px,#0cff19 48.5px,#02fe51 55.5px,#00eda6 62.5px,#00ced0 66.5px,#0086e7 71.5px,#0056e2 74.5px,#001fd0 79.5px,#001eca 85.5px,#0069e6 93.5px,#00abe0 98.5px,#00e4c1 104.5px,#03fd6c 114.5px,#13ff24 126px)"></b><b style="left:60px;background:linear-gradient(#000081 0px,#00009b 9.5px,#000aed 17.5px,#004afd 20.5px,#00ccf9 24.5px,#00f2e3 26.5px,#00ff4d 34.5px,#04ff08 39.5px,#27ff01 48.5px,#10ff17 58.5px,#01fe57 65.5px,#00e8bb 73.5px,#00bfdd 77.5px,#0061eb 83.5px,#001dd5 89.5px,#0012cc 92.5px,#001bcc 97.5px,#0039dc 101.5px,#008aea 108.5px,#00ddd1 116.5px,#01fc8d 126px)"></b><b style="left:62px;background:linear-gradient(#000080 0px,#000097 11.5px,#0004df 19.5px,#0027fa 22.5px,#00bef9 27.5px,#00f4d9 30.5px,#01ff22 40.5px,#14ff03 44.5px,#3aff00 52.5px,#24ff04 62.5px,#08ff24 69.5px,#00f2ae 81.5px,#00d8d6 85.5px,#0097ed 90.5px,#004be6 95.5px,#0018d2 100.5px,#000dc7 103.5px,#0016cd 109.5px,#0046e6 115.5px,#00b5ec 124.5px,#00bee8 126px)"></b><b style="left:64px;background:linear-gradient(#000080 0px,#000096 14.5px,#0002db 22.5px,#001ff6 25.5px,#008dfe 29.5px,#00dcef 32.5px,#00fcc4 35.5px,#03ff20 44.5px,#1fff01 49.5px,#48ff00 58.5px,#31ff01 68.5px,#0dff19 76.5px,#00fc8a 87.5px,#00e3d5 94.5px,#0097f1 100.5px,#003fe5 106.5px,#0012ce 111.5px,#0008c2 114.5px,#000dc3 119.5px,#0029dc 124.5px,#0033e2 126px)"></b><b style="left:66px;background:linear-gradient(#000080 0px,#000091 16.5px,#0000ca 24.5px,#0016f2 28.5px,#0059fe 31.5px,#00cff7 35.5px,#00f7d2 38.5px,#03ff23 48.5px,#1fff01 53.5px,#4eff00 62.5px,#40ff00 73.5px,#0eff16 84.5px,#00ff74 94.5px,#00e9d4 103.5px,#00a1f4 109.5px,#0039e7 116.5px,#0012d3 120.5px,#0004bd 126px)"></b><b style="left:68px;background:linear-gradient(#000080 0px,#000090 19.5px,#0000c5 27.5px,#000def 31.5px,#0046fd 34.5px,#00d3f6 39.5px,#00f8d2 42.5px,#05ff1a 53.5px,#2bff00 59.5px,#54ff00 68.5px,#42ff00 81.5px,#0eff13 92.5px,#00ff62 101.5px,#00efce 111.5px,#00b4f4 117.5px,#0035ea 126px)"></b><b style="left:70px;background:linear-gradient(#000080 0px,#00008f 22.5px,#0000c1 30.5px,#0012f2 35.5px,#004efe 38.5px,#00d6f6 43.5px,#00f9d3 46.5px,#04ff1f 57.5px,#20ff01 62.5px,#53ff00 71.5px,#4aff00 87.5px,#10ff0d 99.5px,#01ff4d 107.5px,#00f2cf 119.5px,#00c7f3 124.5px,#00b9f6 126px)"></b><b style="left:72px;background:linear-gradient(#000080 0px,#00008c 24.5px,#0000be 33.5px,#000aef 38.5px,#003dfd 41.5px,#00d9f5 47.5px,#00fad3 50.5px,#05ff16 62.5px,#26ff01 67.5px,#54ff00 75.5px,#4fff00 93.5px,#10ff0a 106.5px,#00ff4b 114.5px,#00fac5 126px)"></b><b style="left:74px;background:linear-gradient(#000080 0px,#00008b 27.5px,#0000bb 36.5px,#000ff3 42.5px,#0045fe 45.5px,#00ddf5 51.5px,#00fbd3 54.5px,#04ff16 66.5px,#26ff00 71.5px,#54ff00 79.5px,#52ff00 99.5px,#0cff0c 113.5px,#00ff5d 122.5px,#00ff7e 126px)"></b><b style="left:76px;background:linear-gradient(#000080 0px,#00008b 30.5px,#0000c1 40.5px,#0009f0 45.5px,#0039fe 48.5px,#00e4f3 55.5px,#00fecf 58.5px,#04ff14 70.5px,#2fff00 76.5px,#56ff00 84.5px,#51ff00 105.5px,#0bff08 118.5px,#00ff41 126px)"></b><b style="left:78px;background:linear-gradient(#000080 0px,#00008b 33.5px,#0000c0 43.5px,#0007ef 48.5px,#0031fe 51.5px,#00e1f7 58.5px,#00fdd6 61.5px,#05ff12 74.5px,#37ff00 81.5px,#57ff00 89.5px,#4fff00 110.5px,#08ff07 123.5px,#02ff12 126px)"></b><b style="left:80px;background:linear-gradient(#000080 0px,#00008c 36.5px,#0000c1 46.5px,#0006f1 51.5px,#0031ff 54.5px,#00e1fa 61.5px,#00feda 64.5px,#03ff1a 77.5px,#1eff01 82.5px,#53ff00 92.5px,#52ff00 112.5px,#10ff01 126px)"></b><b style="left:82px;background:linear-gradient(#000080 0px,#00008b 38.5px,#0000bf 48.5px,#0007f7 54.5px,#003bff 57.5px,#00e5fa 64.5px,#00fedb 67.5px,#03ff1a 81.5px,#21ff01 87.5px,#4fff00 98.5px,#4dff00 114.5px,#1fff00 126px)"></b><b style="left:84px;background:linear-gradient(#000080 0px,#00008b 39.5px,#0000c2 50.5px,#0005f8 56.5px,#004cff 60.5px,#00e9f9 67.5px,#00ffce 71.5px,#02ff20 85.5px,#1cff01 92.5px,#47ff00 105.5px,#3aff00 119.5px,#26ff00 126px)"></b><b style="left:86px;background:linear-gradient(#000080 0px,#00008a 38.5px,#0000bc 50.5px,#0005fb 58.5px,#0087ff 65.5px,#00e9f9 70.5px,#00ffc7 75.5px,#02ff24 90.5px,#17ff03 98.5px,#35ff00 113.5px,#23ff00 126px)"></b><b style="left:88px;background:linear-gradient(#000080 0px,#00008c 37.5px,#0000c8 52.5px,#0008fe 60.5px,#00eef5 74.5px,#00ffb3 81.5px,#02ff24 97.5px,#14ff03 108.5px,#19ff00 126px)"></b><b style="left:90px;background:linear-gradient(#000080 0px,#00008b 34.5px,#0000e0 56.5px,#000bfe 62.5px,#00e9f6 78.5px,#00ffc0 85.5px,#00ff34 103.5px,#08ff09 116.5px,#0aff03 126px)"></b><b style="left:92px;background:linear-gradient(#000080 0px,#00008c 31.5px,#0004fb 63.5px,#0059ff 72.5px,#00e2f7 83.5px,#00fecd 90.5px,#00ff45 110.5px,#01ff16 126px)"></b><b style="left:94px;background:linear-gradient(#000080 0px,#00008c 28.5px,#0000de 55.5px,#000af9 68.5px,#004eff 77.5px,#00e6f2 91.5px,#00febd 100.5px,#00ff4b 120.5px,#00ff39 126px)"></b><b style="left:96px;background:linear-gradient(#000080 0px,#00008d 25.5px,#0000d6 47.5px,#000af2 75.5px,#003bfd 83.5px,#00ddf5 98.5px,#00fdce 106.5px,#00ff62 126px)"></b><b style="left:98px;background:linear-gradient(#000080 0px,#00008e 22.5px,#0000d6 41.5px,#0000cc 62.5px,#0001d4 77.5px,#0016f2 87.5px,#005cfe 95.5px,#00e4f3 107.5px,#00fec9 115.5px,#00ff8b 126px)"></b><b style="left:100px;background:linear-gradient(#000080 0px,#00008c 18.5px,#0000da 37.5px,#0000cb 53.5px,#0000a5 73.5px,#0001c7 87.5px,#0017f0 96.5px,#005afe 103.5px,#00e3f6 114.5px,#00fed1 121.5px,#00ffb5 126px)"></b><b style="left:102px;background:linear-gradient(#000080 0px,#000091 16.5px,#0000dc 32.5px,#0000cf 45.5px,#000093 66.5px,#0000a5 90.5px,#000ae9 102.5px,#003efd 108.5px,#00e3f9 120.5px,#00fedf 126px)"></b><b style="left:104px;background:linear-gradient(#000080 0px,#000093 13.5px,#0000dd 27.5px,#0000d1 38.5px,#000094 56.5px,#0000b9 80.5px,#00009c 97.5px,#000aed 109.5px,#003dfe 114.5px,#00e6fa 126px)"></b><b style="left:106px;background:linear-gradient(#000080 0px,#000095 10.5px,#0000de 23.5px,#0000c9 33.5px,#000097 47.5px,#0000ac 57.5px,#0001e0 75.5px,#0000d1 89.5px,#00009a 102.5px,#0000af 107.5px,#000ef2 115.5px,#0051ff 120.5px,#00aaff 126px)"></b><b style="left:108px;background:linear-gradient(#000081 0px,#0000a1 9.5px,#0000d8 18.5px,#0000c7 26.5px,#00009d 37.5px,#0000b0 47.5px,#000bf4 68.5px,#0013f9 84.5px,#0001de 95.5px,#000096 107.5px,#0000a8 111.5px,#000cf5 119.5px,#0059ff 124.5px,#006dff 126px)"></b><b style="left:110px;background:linear-gradient(#000082 0px,#0000ca 15.5px,#0000a7 27.5px,#0000b9 36.5px,#0013f6 57.5px,#0049ff 77.5px,#0033ff 88.5px,#0003ee 98.5px,#000092 111.5px,#0000ac 115.5px,#0009f7 122.5px,#0038ff 126px)"></b><b style="left:112px;background:linear-gradient(#000082 0px,#0000b0 12.5px,#0003b7 21.5px,#0010ee 37.5px,#0033fe 52.5px,#0075ff 72.5px,#006bff 85.5px,#0028ff 96.5px,#0001f0 102.5px,#00008e 114.5px,#0000d6 121.5px,#0010fe 126px)"></b><b style="left:114px;background:linear-gradient(#000082 0px,#0002b2 11.5px,#0032f1 21.5px,#0043fe 32.5px,#0060ff 48.5px,#009bff 70.5px,#008dff 84.5px,#004fff 95.5px,#0000f5 104.5px,#000089 116.5px,#0001f5 126px)"></b><b style="left:116px;background:linear-gradient(#000083 0px,#0000a9 5.5px,#000bdf 9.5px,#0070fd 16.5px,#0087ff 21.5px,#0071ff 38.5px,#00b4ff 66.5px,#00a5ff 82.5px,#0067ff 94.5px,#0000f7 105.5px,#000085 117.5px,#0000ec 126px)"></b><b style="left:118px;background:linear-gradient(#000087 0px,#0000b9 4.5px,#0002f0 7.5px,#0061fc 12.5px,#0079fd 16.5px,#0063ff 32.5px,#00bcff 59.5px,#00b6ff 77.5px,#007dff 91.5px,#001aff 102.5px,#0000f8 105.5px,#000082 117.5px,#0000eb 126px)"></b><b style="left:120px;background:linear-gradient(#000088 0px,#0008db 8.5px,#001ddb 14.5px,#0019e3 25.5px,#002dfc 33.5px,#009dff 49.5px,#00bbff 63.5px,#009fff 81.5px,#005aff 94.5px,#0000f8 104.5px,#000088 116.5px,#0000be 121.5px,#0000f1 126px)"></b><b style="left:122px;background:linear-gradient(#000089 0px,#0007d2 6.5px,#0026e1 11.5px,#0006d0 18.5px,#0001af 24.5px,#0001b0 27.5px,#0010f6 36.5px,#007bff 48.5px,#00a0ff 60.5px,#008dff 78.5px,#004cff 92.5px,#0002f5 102.5px,#00008c 115.5px,#0008fb 126px)"></b><b style="left:124px;background:linear-gradient(#00008d 0px,#0004e2 5.5px,#0047f5 10.5px,#003ffb 14.5px,#0002ef 20.5px,#000095 29.5px,#0000ae 32.5px,#0006f4 39.5px,#005fff 52.5px,#0074ff 66.5px,#0051ff 83.5px,#0004f3 98.5px,#000090 113.5px,#0009f8 123.5px,#0028ff 126px)"></b><b style="left:126px;background:linear-gradient(#000088 0px,#0006c6 7.5px,#000edb 16.5px,#0000de 21.5px,#000094 29.5px,#00008a 31.5px,#0000e0 40.5px,#001efb 50.5px,#0038fe 66.5px,#001bfb 84.5px,#0001df 96.5px,#000094 109.5px,#0000b5 114.5px,#0007f3 120.5px,#0045ff 124.5px,#005aff 126px)"></b><b style="left:128px;background:linear-gradient(#000087 0px,#0000cb 7.5px,#0000be 13.5px,#0000ad 17.5px,#00009f 26.5px,#000093 31.5px,#0000d1 44.5px,#0009ef 68.5px,#0001d8 88.5px,#000098 104.5px,#0000ae 109.5px,#000ef4 117.5px,#0047ff 121.5px,#0098ff 126px)"></b><b style="left:130px;background:linear-gradient(#000083 0px,#0000c7 12.5px,#0000ab 31.5px,#0000b4 52.5px,#0000c1 77.5px,#00009a 99.5px,#000df0 112.5px,#0048ff 117.5px,#00d8fc 126px)"></b><b style="left:132px;background:linear-gradient(#000082 0px,#0000a2 13.5px,#0000dd 21.5px,#0000d3 27.5px,#000092 38.5px,#0000a3 91.5px,#0009ea 105.5px,#003efd 111.5px,#00e6f7 122.5px,#00fbe4 126px)"></b><b style="left:134px;background:linear-gradient(#000081 0px,#000094 10.5px,#00008f 13.5px,#0000e6 19.5px,#0000f1 23.5px,#000095 34.5px,#0000bb 48.5px,#0000b2 79.5px,#000aeb 97.5px,#003cfc 104.5px,#00e6f5 117.5px,#00fecb 123.5px,#00ffb9 126px)"></b><b style="left:136px;background:linear-gradient(#000080 0px,#000099 9.5px,#0000e9 18.5px,#0000d3 23.5px,#0000a7 29.5px,#0000ae 33.5px,#0001de 43.5px,#0007e6 82.5px,#002bfa 93.5px,#008eff 103.5px,#00eeef 112.5px,#00ffac 121.5px,#00ff89 126px)"></b><b style="left:138px;background:linear-gradient(#000081 0px,#000096 5.5px,#0011eb 12.5px,#0002f1 15.5px,#0003ba 21.5px,#000ccc 28.5px,#000cf4 39.5px,#0026fb 77.5px,#005afe 88.5px,#00e9f1 104.5px,#00ffb9 113.5px,#00ff57 126px)"></b><b style="left:140px;background:linear-gradient(#000085 0px,#0000b4 4.5px,#0010f1 8.5px,#001ff3 10.5px,#000cdc 14.5px,#0018ce 16.5px,#003fda 20.5px,#005df7 26.5px,#002fff 39.5px,#0061ff 74.5px,#00abff 87.5px,#00f5e9 98.5px,#01ff25 126px)"></b><b style="left:142px;background:linear-gradient(#00008d 0px,#000de7 6.5px,#002ad3 8.5px,#0036da 10.5px,#0060c3 12.5px,#0080cf 14.5px,#00b0ce 17.5px,#00dbef 22.5px,#00cfff 25.5px,#0061ff 33.5px,#003fff 40.5px,#006cff 59.5px,#00b2ff 77.5px,#00f6ed 89.5px,#00ff58 111.5px,#0cff07 124.5px,#10ff05 126px)"></b><b style="left:144px;background:linear-gradient(#000096 0px,#0000ae 1.5px,#002cd0 3.5px,#007acd 5.5px,#007fc0 6.5px,#00b88f 8.5px,#01d187 9.5px,#00e76b 12.5px,#00f491 16.5px,#00dfed 22.5px,#0084fd 27.5px,#0044fc 32.5px,#002cff 39.5px,#006aff 54.5px,#00f2f6 79.5px,#00ffa0 94.5px,#07ff11 114.5px,#31ff00 126px)"></b><b style="left:146px;background:linear-gradient(#0000ab 0px,#0000d8 1.5px,#003feb 2.5px,#0098f4 3.5px,#00bcd3 4.5px,#00cfaf 5.5px,#00d36d 7.5px,#02d958 9.5px,#00d96f 11.5px,#00cd98 13.5px,#008cd9 17.5px,#005fe4 21.5px,#001ada 27.5px,#0007ea 36.5px,#001dff 44.5px,#00faf7 74.5px,#00ff6f 94.5px,#08ff0f 107.5px,#45ff00 122.5px,#4dff00 126px)"></b><b style="left:148px;background:linear-gradient(#0000ab 0px,#0006d4 1.5px,#003bea 2.5px,#007ee5 3.5px,#00a3cf 4.5px,#0cad80 7.5px,#10ad67 9.5px,#08a899 13.5px,#0082e2 19.5px,#0042e3 23.5px,#000dd4 26.5px,#0000aa 31.5px,#0000ab 34.5px,#0009fb 45.5px,#00fafb 70.5px,#00ff58 91.5px,#09ff0c 101.5px,#54ff00 119.5px,#5bff00 126px)"></b><b style="left:150px;background:linear-gradient(#0000b3 0px,#000ce1 1.5px,#006af1 2.5px,#00b7df 3.5px,#00db73 5.5px,#0cea50 6.5px,#32f038 8.5px,#36f02e 11.5px,#01f340 15.5px,#00ebcc 20.5px,#00d9f7 22.5px,#001ef7 27.5px,#0005f0 28.5px,#000095 34.5px,#000094 36.5px,#0001f3 46.5px,#001dff 50.5px,#00fafd 68.5px,#00ff2b 91.5px,#0fff05 97.5px,#54ff00 111.5px,#64ff00 126px)"></b><b style="left:152px;background:linear-gradient(#00009d 0px,#0001bc 1.5px,#003de9 3.5px,#0054ea 4.5px,#01a0c4 6.5px,#0dad93 8.5px,#0fad85 9.5px,#0c9b9c 12.5px,#00b2a4 16.5px,#00a3e9 21.5px,#007df5 23.5px,#0015ee 27.5px,#0000dc 29.5px,#000085 36.5px,#0000eb 47.5px,#0012ff 51.5px,#00fbfe 67.5px,#07ff0a 91.5px,#55ff00 105.5px,#6cff00 126px)"></b><b style="left:154px;background:linear-gradient(#00009b 0px,#0000e1 2.5px,#0032f2 3.5px,#00b7f7 5.5px,#00d5b1 8.5px,#00d2b5 10.5px,#0098d4 13.5px,#0092d9 15.5px,#006ccf 17.5px,#003fe1 19.5px,#0009c5 25.5px,#000090 35.5px,#0003fc 51.5px,#009aff 61.5px,#00f7fe 66.5px,#04ff0c 87.5px,#52ff00 99.5px,#72ff00 124.5px,#72ff00 126px)"></b><b style="left:156px;background:linear-gradient(#00008b 0px,#000bc0 3.5px,#0022d3 4.5px,#006cdc 6.5px,#00d0c0 10.5px,#00e5b8 13.5px,#00e4d8 16.5px,#00cdf4 18.5px,#0037f0 23.5px,#0009dc 26.5px,#0000b0 33.5px,#0000bf 42.5px,#0002fe 52.5px,#009eff 61.5px,#00fef9 66.5px,#07ff06 85.5px,#52ff00 95.5px,#76ff00 119.5px,#73ff00 126px)"></b><b style="left:158px;background:linear-gradient(#000087 0px,#0006bf 6.5px,#002ed0 10.5px,#009ee8 16.5px,#00abfc 19.5px,#0067fe 23.5px,#0005f7 28.5px,#0000c3 36.5px,#0000ca 44.5px,#0000fd 52.5px,#007fff 59.5px,#00fdf8 65.5px,#03ff0a 82.5px,#53ff00 92.5px,#77ff00 115.5px,#70ff00 126px)"></b><b style="left:160px;background:linear-gradient(#000085 0px,#0000d9 9.5px,#0016c6 16.5px,#002ae5 22.5px,#0000eb 29.5px,#0000c3 39.5px,#0000da 47.5px,#0004fe 52.5px,#00aaff 60.5px,#00f1fd 63.5px,#00ffd8 66.5px,#04ff09 80.5px,#55ff00 90.5px,#75ff00 112.5px,#68ff00 126px)"></b><b style="left:162px;background:linear-gradient(#000081 0px,#0000a1 6.5px,#0000df 12.5px,#0000d4 16.5px,#0002b2 21.5px,#0000c9 43.5px,#0007fd 51.5px,#009bff 58.5px,#00f6f8 62.5px,#03ff09 78.5px,#55ff00 88.5px,#70ff00 109.5px,#5dff00 126px)"></b><b style="left:164px;background:linear-gradient(#000080 0px,#000094 8.5px,#0000da 16.5px,#0000cb 21.5px,#00009c 28.5px,#0000a5 35.5px,#0000e0 46.5px,#0010fe 50.5px,#00f2f7 60.5px,#00ffb0 65.5px,#03ff09 76.5px,#54ff00 86.5px,#67ff00 108.5px,#4aff00 126px)"></b><b style="left:166px;background:linear-gradient(#000080 0px,#00008b 10.5px,#0000cf 20.5px,#0000bd 26.5px,#00008a 34.5px,#0005f7 47.5px,#0038ff 50.5px,#00e4fb 57.5px,#00fedb 60.5px,#03ff09 74.5px,#55ff00 85.5px,#5cff00 108.5px,#2dff01 123.5px,#23ff03 126px)"></b><b style="left:168px;background:linear-gradient(#000080 0px,#00008d 14.5px,#0000bf 24.5px,#0000a1 31.5px,#000087 35.5px,#0008f6 45.5px,#0042ff 48.5px,#00dafb 54.5px,#00fde0 57.5px,#04ff08 72.5px,#54ff00 85.5px,#4cff00 105.5px,#12ff0d 120.5px,#05ff27 126px)"></b><b style="left:170px;background:linear-gradient(#000080 0px,#00008d 18.5px,#0000a2 27.5px,#000091 34.5px,#0007ef 42.5px,#0039ff 45.5px,#00d7fa 51.5px,#00fcdf 54.5px,#02ff0d 69.5px,#30ff00 77.5px,#4bff00 88.5px,#28ff03 104.5px,#06ff20 114.5px,#00ff78 126px)"></b><b style="left:172px;background:linear-gradient(#000080 0px,#00009b 30.5px,#0001cc 36.5px,#0017f5 40.5px,#0073ff 44.5px,#00dbf9 48.5px,#00fcda 51.5px,#00ff19 65.5px,#11ff00 70.5px,#33ff00 81.5px,#18ff07 96.5px,#04ff34 106.5px,#00f1c8 124.5px,#00eed0 126px)"></b><b style="left:174px;background:linear-gradient(#000080 0px,#000099 19.5px,#0001ce 31.5px,#001cf3 36.5px,#006bfe 40.5px,#00e2f2 45.5px,#00fec2 49.5px,#00ff22 61.5px,#07ff01 66.5px,#1eff01 77.5px,#09ff18 90.5px,#00ff76 103.5px,#00ebd1 114.5px,#00a5f4 122.5px,#0080f5 126px)"></b><b style="left:176px;background:linear-gradient(#000080 0px,#00009b 16.5px,#000aed 29.5px,#003cfb 33.5px,#00d3f8 40.5px,#00fcd1 44.5px,#00ff31 56.5px,#04ff02 63.5px,#08ff0e 77.5px,#01ff52 88.5px,#00efc4 101.5px,#00b2f1 109.5px,#003ae6 119.5px,#0011cf 126px)"></b><b style="left:178px;background:linear-gradient(#000080 0px,#00009e 14.5px,#0008f2 25.5px,#0046fe 29.5px,#00dcf4 36.5px,#00fdcc 40.5px,#00ff34 52.5px,#00ff03 60.5px,#02ff1c 71.5px,#00fe89 84.5px,#00e8d3 92.5px,#008ef1 100.5px,#0039e1 107.5px,#0014d0 112.5px,#0007c5 117.5px,#0011c9 123.5px,#0017d2 126px)"></b><b style="left:180px;background:linear-gradient(#000080 0px,#00009f 12.5px,#0007f3 22.5px,#0038fe 25.5px,#00cffb 31.5px,#00f6e3 34.5px,#00ff3f 47.5px,#00ff11 55.5px,#00ff20 63.5px,#00fe7e 74.5px,#00e8d1 82.5px,#0092f0 89.5px,#003fe2 95.5px,#0016cf 100.5px,#0009c9 104.5px,#0015c9 109.5px,#0039de 115.5px,#0079ee 122.5px,#0097ef 126px)"></b><b style="left:182px;background:linear-gradient(#000081 0px,#00009f 10.5px,#0003ef 19.5px,#002ffe 22.5px,#00e7f8 29.5px,#00fed4 32.5px,#00ff50 42.5px,#00ff23 49.5px,#00ff2b 56.5px,#00ff75 65.5px,#00e9ce 73.5px,#009bef 79.5px,#0049e6 84.5px,#0018cf 89.5px,#0010c9 94.5px,#001ace 97.5px,#006beb 106.5px,#00bfdf 114.5px,#00ebbe 121.5px,#00f6a6 126px)"></b><b style="left:184px;background:linear-gradient(#000081 0px,#0000a2 9.5px,#000af9 18.5px,#0069ff 22.5px,#00f0f8 27.5px,#00ffb0 32.5px,#00ff53 40.5px,#00ff3a 47.5px,#00ff5b 54.5px,#00f1ba 63.5px,#00ccde 67.5px,#0079ed 72.5px,#001fda 78.5px,#0016c7 80.5px,#001ac7 85.5px,#002fda 88.5px,#0088e7 95.5px,#00dec9 103.5px,#02fc75 114.5px,#0bff31 126px)"></b><b style="left:186px;background:linear-gradient(#000081 0px,#0000a2 8.5px,#0002f7 16.5px,#0042ff 19.5px,#00eeff 25.5px,#00ffda 28.5px,#00ff7b 36.5px,#00ff64 43.5px,#00fc8c 50.5px,#00e1d3 57.5px,#0081eb 63.5px,#0022da 69.5px,#0017d0 73.5px,#0021d1 76.5px,#007ee4 83.5px,#00b4d8 87.5px,#00e2bd 91.5px,#07fd5d 101.5px,#1aff23 110.5px,#3eff05 123.5px,#42ff02 126px)"></b><b style="left:188px;background:linear-gradient(#000081 0px,#0000a8 8.5px,#0000f7 15.5px,#0024ff 17.5px,#00f8ff 25.5px,#00ffaf 33.5px,#00fca2 39.5px,#00e4cd 47.5px,#0097e9 53.5px,#0052e3 57.5px,#0020d0 61.5px,#0024ce 66.5px,#0072e1 72.5px,#00a7d8 75.5px,#01e2b2 80.5px,#0afd56 88.5px,#2bff11 98.5px,#70ff00 118.5px,#7eff00 126px)"></b><b style="left:190px;background:linear-gradient(#000082 0px,#0000aa 8.5px,#0000f8 15.5px,#003aff 18.5px,#00cfff 25.5px,#00e7ef 29.5px,#00d5e1 36.5px,#0092ea 43.5px,#0057e4 47.5px,#0025d6 51.5px,#002fd4 57.5px,#0074dc 62.5px,#00a8cf 65.5px,#02e4a1 70.5px,#0efc48 77.5px,#36ff10 85.5px,#83ff00 101.5px,#c1fd00 126px)"></b><b style="left:192px;background:linear-gradient(#000082 0px,#0000a7 8.5px,#0002f2 16.5px,#006bfb 25.5px,#0072f4 30.5px,#0023d2 41.5px,#002bd2 46.5px,#007cd8 52.5px,#02d8af 58.5px,#10fb4f 65.5px,#36ff14 72.5px,#83ff00 84.5px,#daf200 104.5px,#f5da00 126px)"></b><b style="left:194px;background:linear-gradient(#000081 0px,#0000ae 11.5px,#0007d7 20.5px,#0013cd 30.5px,#0031d5 36.5px,#0073d7 41.5px,#0199ce 43.5px,#06e192 49.5px,#1afb44 55.5px,#40ff13 61.5px,#95fd00 72.5px,#e0e100 86.5px,#fba300 102.5px,#ff7e00 121.5px,#ff7e00 126px)"></b><b style="left:196px;background:linear-gradient(#000081 0px,#0001af 18.5px,#0017cb 24.5px,#0065de 30.5px,#00a0d2 33.5px,#04df99 38.5px,#1cfa44 44.5px,#3fff16 49.5px,#9afc00 59.5px,#dfd700 70.5px,#fc8500 83.5px,#fa3800 99.5px,#fa2200 121.5px,#fb2500 126px)"></b><b style="left:198px;background:linear-gradient(#000081 0px,#0000a3 11.5px,#0011d6 17.5px,#006dec 22.5px,#00a0e7 24.5px,#01dfb5 28.5px,#15fb46 34.5px,#41ff14 39.5px,#abf600 49.5px,#dfd200 56.5px,#f97b00 66.5px,#f33300 76.5px,#e10c00 89.5px,#db0200 117.5px,#e40200 126px)"></b><b style="left:200px;background:linear-gradient(#000082 0px,#0000a3 7.5px,#0005dc 12.5px,#0023ef 14.5px,#009cf5 18.5px,#00e3d0 21.5px,#09fc55 26.5px,#2fff15 30.5px,#9afe00 38.5px,#dae000 44.5px,#f88b00 51.5px,#f33500 59.5px,#db0d00 68.5px,#ae0000 92.5px,#c10000 121.5px,#c70000 126px)"></b><b style="left:202px;background:linear-gradient(#000082 0px,#0000ab 6.5px,#0006e9 10.5px,#0036fb 12.5px,#00b7f9 15.5px,#00eddb 17.5px,#05ff43 22.5px,#2aff0e 25.5px,#b8ff00 34.5px,#eae300 38.5px,#fe5200 46.5px,#f11900 51.5px,#c20200 61.5px,#940000 80.5px,#9a0000 108.5px,#b60000 126px)"></b><b style="left:204px;background:linear-gradient(#000083 0px,#0000ad 5.5px,#0001e5 8.5px,#000df5 9.5px,#005cff 11.5px,#00c6fd 13.5px,#00e9f1 14.5px,#00ff96 17.5px,#01ff28 20.5px,#21ff07 22.5px,#59ff00 25.5px,#f0fc00 34.5px,#ff5300 42.5px,#fc0b00 46.5px,#a50000 62.5px,#850000 82.5px,#9d0000 114.5px,#b20000 126px)"></b><b style="left:206px;background:linear-gradient(#000085 0px,#0000ad 4.5px,#0009fb 8.5px,#0097ff 11.5px,#00f8f6 13.5px,#01ff0a 20.5px,#4aff00 23.5px,#a9ff00 30.5px,#eefc00 34.5px,#ff6700 42.5px,#fd2200 46.5px,#dc0400 53.5px,#a10000 71.5px,#980000 99.5px,#bb0000 126px)"></b><b style="left:208px;background:linear-gradient(#000086 0px,#0000c1 5.5px,#000afa 8.5px,#00e3f9 13.5px,#00fcb2 16.5px,#07ff26 21.5px,#3fff06 25.5px,#d1f600 37.5px,#f5ac00 44.5px,#f73b00 54.5px,#de0f00 65.5px,#ba0000 93.5px,#d10000 126px)"></b><b style="left:210px;background:linear-gradient(#000083 0px,#0000ab 5.5px,#0009e4 9.5px,#0050f5 12.5px,#00a5f4 15.5px,#00e2c1 19.5px,#10fb46 26.5px,#3fff14 32.5px,#a6f900 43.5px,#dad600 51.5px,#f78700 62.5px,#f33300 78.5px,#e70c00 100.5px,#ee0800 126px)"></b><b style="left:212px;background:linear-gradient(#000081 0px,#0001b2 10.5px,#0028da 16.5px,#0095d6 24.5px,#05d99a 31.5px,#28fa39 40.5px,#46fe17 45.5px,#9ff901 57.5px,#ded600 70.5px,#fa9400 85.5px,#fc5200 105.5px,#fe4000 126px)"></b><b style="left:214px;background:linear-gradient(#000082 0px,#0008d0 14.5px,#003cd3 30.5px,#0184d3 37.5px,#07d897 45.5px,#1ffa43 53.5px,#44ff14 60.5px,#94fd00 73.5px,#e0e300 92.5px,#fbaf00 114.5px,#fea000 126px)"></b><b style="left:216px;background:linear-gradient(#000083 0px,#0000b1 6.5px,#0003f2 11.5px,#007efa 18.5px,#0096f2 22.5px,#0081e6 28.5px,#0036d8 39.5px,#0044d2 45.5px,#0089d0 51.5px,#05de96 59.5px,#18fb43 67.5px,#3dff11 75.5px,#8cfe00 91.5px,#ddf400 117.5px,#e8ec00 126px)"></b><b style="left:218px;background:linear-gradient(#000083 0px,#0000b2 6.5px,#0007fd 11.5px,#00deff 18.5px,#00f2ee 20.5px,#00f4b9 27.5px,#00e2be 34.5px,#009edc 42.5px,#0066e0 46.5px,#0031d5 51.5px,#0036d3 57.5px,#0079d8 63.5px,#01afc6 67.5px,#02e29f 72.5px,#0ffc4b 80.5px,#37ff10 90.5px,#80ff00 109.5px,#aafe00 126px)"></b><b style="left:220px;background:linear-gradient(#000082 0px,#0000a9 6.5px,#0001f0 11.5px,#002afe 13.5px,#00ddff 18.5px,#00f6fa 19.5px,#00ff83 27.5px,#00ff5d 33.5px,#00fb70 40.5px,#00dcc2 49.5px,#0090e2 55.5px,#005fe1 58.5px,#0027d3 63.5px,#002fd5 69.5px,#0074de 75.5px,#00a2d7 78.5px,#01e1b2 84.5px,#09fc59 93.5px,#26ff11 104.5px,#6dff00 126px)"></b><b style="left:222px;background:linear-gradient(#000082 0px,#0000a4 7.5px,#0006ef 13.5px,#0030fc 15.5px,#00dcfb 20.5px,#00f9e1 22.5px,#00ff4b 31.5px,#00ff18 37.5px,#04ff2b 45.5px,#01fa82 54.5px,#00dbc7 60.5px,#0085e5 66.5px,#0056e2 69.5px,#0020cf 74.5px,#0024d2 80.5px,#0073e4 87.5px,#00aadd 91.5px,#00e4b9 97.5px,#06fd60 107.5px,#1aff20 117.5px,#32ff09 126px)"></b><b style="left:224px;background:linear-gradient(#000081 0px,#00009c 8.5px,#0006e7 15.5px,#0021f9 17.5px,#00c1fb 22.5px,#00eeea 24.5px,#00ffa0 28.5px,#00ff1a 36.5px,#06ff02 39.5px,#1aff06 48.5px,#07ff29 56.5px,#00f39f 66.5px,#00cdd4 71.5px,#0083e9 76.5px,#0046e0 80.5px,#001ccf 84.5px,#0017cb 89.5px,#002cda 93.5px,#007fe8 100.5px,#00d8cf 108.5px,#01fc82 118.5px,#06ff4c 126px)"></b><b style="left:226px;background:linear-gradient(#000080 0px,#000099 10.5px,#0007e6 18.5px,#0039fb 21.5px,#00d3f6 26.5px,#00facc 29.5px,#02ff17 39.5px,#1dff00 44.5px,#31ff00 52.5px,#11ff13 62.5px,#01ff52 69.5px,#00ecb8 77.5px,#00d5d6 80.5px,#008fec 85.5px,#004fe7 89.5px,#0019d2 94.5px,#000eca 97.5px,#0018cb 102.5px,#0035db 106.5px,#0084ed 113.5px,#00d0db 120.5px,#00eebd 126px)"></b><b style="left:228px;background:linear-gradient(#000080 0px,#000094 12.5px,#0001d7 20.5px,#001bf4 23.5px,#0067fe 26.5px,#00daf0 30.5px,#00fcc5 33.5px,#02ff20 42.5px,#1eff01 47.5px,#41ff00 55.5px,#29ff02 65.5px,#07ff23 73.5px,#00f4af 85.5px,#00d0dd 90.5px,#008aef 95.5px,#0040e4 100.5px,#0014ce 105.5px,#000bc4 111.5px,#0027d9 117.5px,#007ef1 126px)"></b><b style="left:230px;background:linear-gradient(#000080 0px,#000094 15.5px,#0001d2 23.5px,#0013f1 26.5px,#0054fe 29.5px,#00ccf7 33.5px,#00f7d3 36.5px,#03ff21 46.5px,#1fff01 51.5px,#4bff00 60.5px,#38ff00 70.5px,#0dff15 79.5px,#00fe78 89.5px,#00e9d0 97.5px,#0095f3 104.5px,#0033e2 111.5px,#000ec9 116.5px,#0009be 123.5px,#0010ca 126px)"></b><b style="left:232px;background:linear-gradient(#000080 0px,#00008f 17.5px,#0000c3 25.5px,#000bed 29.5px,#0042fc 32.5px,#00d1f6 37.5px,#00f8d2 40.5px,#05ff18 51.5px,#25ff01 56.5px,#50ff00 65.5px,#40ff00 76.5px,#0cff15 87.5px,#00ff72 97.5px,#00e8d9 107.5px,#009ff5 113.5px,#0039e9 120.5px,#000fce 126px)"></b><b style="left:234px;background:linear-gradient(#000080 0px,#00008e 20.5px,#0000be 28.5px,#0010f1 33.5px,#004afe 36.5px,#00d4f6 41.5px,#00f8d2 44.5px,#04ff1e 55.5px,#20ff01 60.5px,#52ff00 70.5px,#46ff00 82.5px,#0fff0f 94.5px,#00ff57 103.5px,#00f2ca 114.5px,#00cbed 119.5px,#0074f8 126px)"></b><b style="left:236px;background:linear-gradient(#000080 0px,#00008d 23.5px,#0000c4 32.5px,#0009ed 36.5px,#0039fc 39.5px,#00d7f5 45.5px,#00f9d3 48.5px,#05ff18 60.5px,#2aff00 66.5px,#53ff00 75.5px,#48ff00 89.5px,#0eff0f 102.5px,#00ff57 111.5px,#00f2d2 123.5px,#00e8e2 126px)"></b><b style="left:238px;background:linear-gradient(#000080 0px,#00008d 26.5px,#0000c1 35.5px,#000df1 40.5px,#0041fd 43.5px,#00d9f5 49.5px,#00f9d4 52.5px,#04ff1d 64.5px,#1eff01 69.5px,#53ff00 79.5px,#4bff00 96.5px,#0eff0b 109.5px,#00ff53 118.5px,#00ff9c 126px)"></b><b style="left:240px;background:linear-gradient(#000080 0px,#00008d 29.5px,#0000be 38.5px,#0008ed 43.5px,#0032fc 46.5px,#00dcf5 53.5px,#00fad5 56.5px,#04ff15 69.5px,#2aff00 75.5px,#55ff00 84.5px,#4dff00 102.5px,#0cff0c 116.5px,#00ff55 126px)"></b><b style="left:242px;background:linear-gradient(#000080 0px,#00008d 32.5px,#0000c4 42.5px,#000bf2 47.5px,#003afe 50.5px,#00e0f5 57.5px,#00fec6 61.5px,#04ff16 73.5px,#29ff00 79.5px,#55ff00 88.5px,#4eff00 108.5px,#0aff0a 122.5px,#02ff1c 126px)"></b><b style="left:244px;background:linear-gradient(#000080 0px,#00008a 34.5px,#0000ba 44.5px,#0007ef 50.5px,#0030fd 53.5px,#00e7f3 61.5px,#00ffc2 65.5px,#04ff15 77.5px,#28ff00 83.5px,#54ff00 92.5px,#4eff00 113.5px,#12ff03 126px)"></b><b style="left:246px;background:linear-gradient(#000080 0px,#00008b 37.5px,#0000b9 47.5px,#000cf5 54.5px,#0056ff 58.5px,#00e4f7 64.5px,#00ffc9 68.5px,#04ff14 81.5px,#2eff00 88.5px,#54ff00 97.5px,#4dff00 117.5px,#29ff00 126px)"></b><b style="left:248px;background:linear-gradient(#000080 0px,#00008b 40.5px,#0000ba 50.5px,#000cf7 57.5px,#0056ff 61.5px,#00e4f9 67.5px,#00fedc 70.5px,#03ff13 85.5px,#2bff00 92.5px,#53ff00 103.5px,#4aff00 120.5px,#37ff00 126px)"></b><b style="left:250px;background:linear-gradient(#000080 0px,#00008b 42.5px,#0000c0 53.5px,#0005f5 59.5px,#0031ff 62.5px,#00e6fa 70.5px,#00ffd0 74.5px,#03ff15 89.5px,#24ff00 96.5px,#4eff00 109.5px,#42ff00 123.5px,#3cff00 126px)"></b><b style="left:252px;background:linear-gradient(#000080 0px,#00008a 43.5px,#0000ba 54.5px,#000afb 62.5px,#0096ff 69.5px,#00e9fa 73.5px,#00ffd2 77.5px,#02ff1b 93.5px,#1aff01 100.5px,#41ff00 114.5px,#39ff00 126px)"></b><b style="left:254px;background:linear-gradient(#000080 0px,#00008a 43.5px,#0000c1 56.5px,#000afd 64.5px,#00eafa 76.5px,#00ffcb 81.5px,#02ff1f 98.5px,#18ff01 107.5px,#2fff00 123.5px,#2dff00 126px)"></b><b style="left:256px;background:linear-gradient(#000080 0px,#00008c 42.5px,#0000c5 57.5px,#0003fb 65.5px,#007fff 73.5px,#00f0f6 80.5px,#00ffb6 87.5px,#01ff25 104.5px,#11ff03 115.5px,#1bff00 126px)"></b><b style="left:258px;background:linear-gradient(#000080 0px,#00008b 39.5px,#0000d0 59.5px,#0006fd 67.5px,#00aeff 79.5px,#00eef5 84.5px,#00ffb7 92.5px,#00ff33 110.5px,#07ff09 123.5px,#08ff06 126px)"></b><b style="left:260px;background:linear-gradient(#000080 0px,#00008b 36.5px,#0000f5 67.5px,#0020ff 72.5px,#00ebf5 89.5px,#00ffb9 98.5px,#00ff3d 118.5px,#00ff23 126px)"></b><b style="left:262px;background:linear-gradient(#000080 0px,#00008b 33.5px,#0007fa 72.5px,#0058ff 82.5px,#00e5f5 95.5px,#00feca 103.5px,#00ff4d 126px)"></b><b style="left:264px;background:linear-gradient(#000080 0px,#00008c 30.5px,#0000d5 56.5px,#000af7 78.5px,#0045fe 87.5px,#00e6f3 103.5px,#00fec4 112.5px,#00ff7a 126px)"></b><b style="left:266px;background:linear-gradient(#000080 0px,#00008c 27.5px,#0000d4 50.5px,#0001e2 80.5px,#001bf8 90.5px,#0076ff 100.5px,#00e6f3 111.5px,#00ffc5 120.5px,#00ffa7 126px)"></b><b style="left:268px;background:linear-gradient(#000080 0px,#00008d 24.5px,#0000d6 45.5px,#0000c9 65.5px,#0000c3 82.5px,#000cee 96.5px,#0046fe 104.5px,#00e4f6 118.5px,#00fed4 126px)"></b><b style="left:270px;background:linear-gradient(#000080 0px,#00008e 21.5px,#0000d8 40.5px,#0000cd 56.5px,#00009e 79.5px,#0000b5 93.5px,#000eee 105.5px,#0049fe 112.5px,#00e2fa 124.5px,#00eaf6 126px)"></b><b style="left:272px;background:linear-gradient(#000080 0px,#00008f 18.5px,#0000da 35.5px,#0000d0 49.5px,#000092 71.5px,#0000a0 98.5px,#000bee 112.5px,#0043fe 118.5px,#00aaff 126px)"></b><b style="left:274px;background:linear-gradient(#000080 0px,#000091 15.5px,#0000db 30.5px,#0000d2 42.5px,#000092 63.5px,#0000ba 86.5px,#000098 105.5px,#000af0 118.5px,#003ffe 123.5px,#005fff 126px)"></b><b style="left:276px;background:linear-gradient(#000080 0px,#000093 12.5px,#0000de 26.5px,#0000cd 37.5px,#000095 54.5px,#0000b9 67.5px,#0001df 84.5px,#0000c8 98.5px,#000097 110.5px,#0000b9 116.5px,#000bf4 123.5px,#001ffc 126px)"></b><b style="left:278px;background:linear-gradient(#000080 0px,#00009a 10.5px,#0000dc 21.5px,#0000cd 30.5px,#000099 44.5px,#0000ac 54.5px,#0006f2 75.5px,#000af6 92.5px,#0000d0 104.5px,#000093 114.5px,#0000a5 118.5px,#0003ea 126px)"></b><b style="left:280px;background:linear-gradient(#000081 0px,#0000a7 9.5px,#0000d5 17.5px,#0000c0 25.5px,#0000a0 34.5px,#0000b6 45.5px,#0011f8 66.5px,#003aff 85.5px,#001bfd 97.5px,#0000e3 106.5px,#00008f 118.5px,#0000c4 124.5px,#0000cf 126px)"></b><b style="left:282px;background:linear-gradient(#000082 0px,#0000c3 14.5px,#0000ab 24.5px,#0001bb 32.5px,#0013f6 53.5px,#0064ff 78.5px,#005bff 91.5px,#0016fe 103.5px,#0000e7 109.5px,#00008b 120.5px,#0000b9 126px)"></b><b style="left:284px;background:linear-gradient(#000082 0px,#0000a9 12.5px,#000ccc 22.5px,#0019f2 33.5px,#003afe 49.5px,#0085ff 72.5px,#0084ff 87.5px,#0050ff 99.5px,#0000f6 109.5px,#000087 122.5px,#0000a9 126px)"></b><b style="left:286px;background:linear-gradient(#000082 0px,#0000a9 8.5px,#001ddd 14.5px,#0053fa 22.5px,#0060ff 43.5px,#00a5ff 69.5px,#009bff 86.5px,#005fff 99.5px,#0000f7 110.5px,#000086 122.5px,#0000a2 126px)"></b><b style="left:288px;background:linear-gradient(#000084 0px,#0000b5 5.5px,#0008e4 8.5px,#0071fd 14.5px,#008eff 18.5px,#0074ff 37.5px,#00b9ff 64.5px,#00acff 83.5px,#0070ff 97.5px,#0000f8 110.5px,#000086 122.5px,#0000a3 126px)"></b><b style="left:290px;background:linear-gradient(#000087 0px,#0000ce 5.5px,#0001ef 7.5px,#0049f6 11.5px,#0060f5 16.5px,#004ffe 30.5px,#00b8ff 56.5px,#00bbff 74.5px,#0088ff 91.5px,#0034ff 103.5px,#0000f7 109.5px,#000088 122.5px,#0000ac 126px)"></b><b style="left:292px;background:linear-gradient(#000088 0px,#0007cb 8.5px,#000fca 16.5px,#000bcd 24.5px,#001bf8 33.5px,#0092ff 48.5px,#00b4ff 61.5px,#009eff 80.5px,#005bff 95.5px,#0001f4 107.5px,#00008c 120.5px,#0000bd 126px)"></b><b style="left:294px;background:linear-gradient(#00008b 0px,#0000d8 5.5px,#002eeb 9.5px,#002aec 14.5px,#0000d0 20.5px,#0000a6 26.5px,#0000ad 29.5px,#000df6 37.5px,#0074ff 49.5px,#0095ff 61.5px,#0080ff 79.5px,#0036ff 95.5px,#0002f0 104.5px,#000090 118.5px,#0000d6 126px)"></b><b style="left:296px;background:linear-gradient(#00008c 0px,#0000d8 5.5px,#0035f0 10.5px,#0038f5 14.5px,#0001f4 20.5px,#00008f 30.5px,#0005f2 40.5px,#0055ff 54.5px,#0062ff 69.5px,#0033fe 87.5px,#0002e9 100.5px,#000094 114.5px,#0000b4 119.5px,#0006f1 126px)"></b><b style="left:298px;background:linear-gradient(#000088 0px,#0001b9 6.5px,#0008c2 12.5px,#0000cc 22.5px,#000089 30.5px,#0001e2 42.5px,#0021fb 58.5px,#001efb 77.5px,#0001e1 94.5px,#000097 109.5px,#0000ac 114.5px,#000cf3 122.5px,#0030fe 126px)"></b><b style="left:300px;background:linear-gradient(#000086 0px,#0000cf 8.5px,#0000c9 12.5px,#0000a7 19.5px,#00009a 31.5px,#0001d4 51.5px,#0003e2 76.5px,#0000b7 94.5px,#00009a 104.5px,#0000bf 111.5px,#0012f4 118.5px,#0066ff 124.5px,#0078ff 126px)"></b><b style="left:302px;background:linear-gradient(#000082 0px,#0000c2 15.5px,#0000ae 32.5px,#0000a0 44.5px,#0000b3 77.5px,#00009b 97.5px,#000aec 111.5px,#0046fe 117.5px,#00c6fd 126px)"></b><b style="left:304px;background:linear-gradient(#000082 0px,#000095 10.5px,#000097 13.5px,#0000e2 20.5px,#0000e4 25.5px,#000094 36.5px,#00009c 57.5px,#0000a4 87.5px,#0007e2 102.5px,#0033fb 109.5px,#00e2f8 122.5px,#00f8e9 126px)"></b><b style="left:306px;background:linear-gradient(#000081 0px,#000096 13.5px,#0000ea 19.5px,#0000ed 23.5px,#000099 33.5px,#0000c8 47.5px,#0000c2 80.5px,#0013f0 96.5px,#0051fe 104.5px,#00e2f6 116.5px,#00fed3 122.5px,#00ffbb 126px)"></b><b style="left:308px;background:linear-gradient(#000080 0px,#000092 7.5px,#0000e8 16.5px,#0000d5 21.5px,#0001ae 27.5px,#0001b7 32.5px,#0002e6 42.5px,#0010f0 82.5px,#0034fb 91.5px,#009dfe 102.5px,#00f1ed 111.5px,#00ff97 123.5px,#00ff88 126px)"></b><b style="left:310px;background:linear-gradient(#000081 0px,#0000a2 5.5px,#0013e9 10.5px,#000bf2 14.5px,#0005bd 19.5px,#0011c6 23.5px,#0015f6 36.5px,#003afe 77.5px,#007cff 89.5px,#00f0ed 103.5px,#00ff96 116.5px,#00ff53 126px)"></b><b style="left:312px;background:linear-gradient(#000087 0px,#0000c2 4.5px,#000cf0 7.5px,#001ee9 11.5px,#001cd0 13.5px,#0030ce 16.5px,#0084f5 23.5px,#0074fe 28.5px,#003aff 38.5px,#0048ff 53.5px,#007eff 76.5px,#00eaf2 93.5px,#00ffb5 104.5px,#02ff20 126px)"></b><b style="left:314px;background:linear-gradient(#00008e 0px,#0008d2 4.5px,#0033da 7.5px,#0039d7 8.5px,#0057c2 9.5px,#0081c2 11.5px,#0085bc 12.5px,#00b2b2 14.5px,#00e1c5 18.5px,#00e7fc 24.5px,#0067ff 32.5px,#0040ff 38.5px,#004dff 48.5px,#00b9ff 75.5px,#00f7eb 87.5px,#00ff49 111.5px,#0dff07 123.5px,#14ff04 126px)"></b><b style="left:316px;background:linear-gradient(#00009c 0px,#0000bb 1.5px,#001dd4 2.5px,#005be0 3.5px,#007bde 4.5px,#00bfa5 6.5px,#02dd63 9.5px,#00f058 12.5px,#00ef94 16.5px,#00d5dc 20.5px,#009af7 24.5px,#0049f6 29.5px,#0023fa 35.5px,#002dff 43.5px,#00f3f7 77.5px,#00ffa0 92.5px,#07ff11 112.5px,#36ff00 126px)"></b><b style="left:318px;background:linear-gradient(#0000ab 0px,#0000d8 1.5px,#0032f3 2.5px,#0088f6 3.5px,#00c0c1 5.5px,#01d398 7.5px,#03ba95 10.5px,#01ad9f 12.5px,#00abbb 15.5px,#003ddd 21.5px,#0011c5 26.5px,#0004d2 34.5px,#000efc 43.5px,#00f7fa 72.5px,#00ff81 90.5px,#08ff0f 105.5px,#45ff00 120.5px,#51ff00 126px)"></b><b style="left:320px;background:linear-gradient(#0000ae 0px,#0008da 1.5px,#0052eb 2.5px,#008ce3 3.5px,#06c883 6.5px,#1ce17b 9.5px,#0ad974 13.5px,#00c3a6 17.5px,#0099e7 21.5px,#0046eb 24.5px,#0009d9 27.5px,#0000a1 32.5px,#0000a4 35.5px,#0004f7 45.5px,#00a1ff 61.5px,#00fdf8 70.5px,#00ff2f 94.5px,#10ff05 101.5px,#54ff00 117.5px,#5dff00 126px)"></b><b style="left:322px;background:linear-gradient(#0000ad 0px,#0009d8 1.5px,#0052ec 2.5px,#0094dc 3.5px,#00bdb2 4.5px,#00d27a 5.5px,#0dd45c 6.5px,#22d547 8.5px,#1ef534 12.5px,#03f64c 15.5px,#00e7e4 21.5px,#00dbf7 22.5px,#0020fb 27.5px,#0007f6 28.5px,#00008c 35.5px,#00009a 37.5px,#0002f5 47.5px,#0022ff 51.5px,#00fdfc 68.5px,#08ff0a 94.5px,#54ff00 109.5px,#66ff00 126px)"></b><b style="left:324px;background:linear-gradient(#00009d 0px,#0006dc 2.5px,#0072dc 4.5px,#0095c7 5.5px,#029cc2 7.5px,#0392c6 8.5px,#02adae 13.5px,#01a3aa 14.5px,#0085db 18.5px,#0050e8 23.5px,#0002d9 28.5px,#000087 36.5px,#0001f6 49.5px,#0026ff 53.5px,#00fdfd 67.5px,#08ff08 90.5px,#54ff00 103.5px,#6eff00 126px)"></b><b style="left:326px;background:linear-gradient(#000098 0px,#0000d6 2.5px,#0027eb 3.5px,#00a8ef 5.5px,#00cbe0 6.5px,#00deaf 9.5px,#00d7b3 12.5px,#00d8be 13.5px,#007ff0 17.5px,#001ad3 22.5px,#0001b9 27.5px,#000098 35.5px,#0008ff 52.5px,#00c1ff 63.5px,#00fafe 66.5px,#03ff0c 86.5px,#4bff00 96.5px,#72ff00 119.5px,#72ff00 126px)"></b><b style="left:328px;background:linear-gradient(#000089 0px,#0003b2 3.5px,#0023c6 5.5px,#0075d5 8.5px,#00c9c7 12.5px,#00e4dc 16.5px,#00cffc 19.5px,#003af5 24.5px,#0008e6 27.5px,#0000b8 34.5px,#0000c4 43.5px,#0001fd 52.5px,#008cff 60.5px,#00f6fe 65.5px,#06ff07 84.5px,#55ff00 95.5px,#76ff00 118.5px,#72ff00 126px)"></b><b style="left:330px;background:linear-gradient(#000087 0px,#0005c9 7.5px,#002ace 12.5px,#007df0 18.5px,#007ff8 20.5px,#0025fd 26.5px,#0000f4 29.5px,#0000c4 37.5px,#0000ce 45.5px,#0001fd 52.5px,#0083ff 59.5px,#00f5fd 64.5px,#00ff81 73.5px,#07ff05 82.5px,#52ff00 91.5px,#77ff00 113.5px,#6dff00 126px)"></b><b style="left:332px;background:linear-gradient(#000083 0px,#0000ad 5.5px,#0000de 10.5px,#000ec0 18.5px,#0008e3 26.5px,#0000c4 41.5px,#0000f1 50.5px,#0008ff 52.5px,#00b4ff 60.5px,#00f7fa 63.5px,#07ff04 80.5px,#54ff00 89.5px,#74ff00 111.5px,#64ff00 126px)"></b><b style="left:334px;background:linear-gradient(#000081 0px,#000097 6.5px,#0000de 13.5px,#0000d6 17.5px,#0000ab 23.5px,#0000c9 43.5px,#0003f9 50.5px,#0048ff 54.5px,#00effb 61.5px,#00ffc6 65.5px,#02ff0d 77.5px,#35ff00 83.5px,#58ff00 89.5px,#6dff00 110.5px,#59ff00 126px)"></b><b style="left:336px;background:linear-gradient(#000080 0px,#00008d 8.5px,#0000d7 17.5px,#0000ca 22.5px,#000095 31.5px,#0000ac 38.5px,#0003f5 48.5px,#002eff 51.5px,#00edfa 59.5px,#00ffd5 62.5px,#02ff0d 75.5px,#33ff00 81.5px,#57ff00 87.5px,#64ff00 108.5px,#41ff00 126px)"></b><b style="left:338px;background:linear-gradient(#000080 0px,#00008b 11.5px,#0000cb 21.5px,#0000b4 28.5px,#000087 34.5px,#0004f3 46.5px,#0031ff 49.5px,#00defb 56.5px,#00fedf 59.5px,#02ff0c 73.5px,#38ff00 80.5px,#56ff00 86.5px,#56ff00 108.5px,#20ff05 123.5px,#17ff08 126px)"></b><b style="left:340px;background:linear-gradient(#000080 0px,#00008d 15.5px,#0000b7 25.5px,#000097 32.5px,#00008a 35.5px,#0007f3 44.5px,#003cff 47.5px,#00d6fb 53.5px,#00fce1 56.5px,#03ff0a 71.5px,#50ff00 84.5px,#4aff00 102.5px,#12ff0d 117.5px,#02ff3c 126px)"></b><b style="left:342px;background:linear-gradient(#000080 0px,#00008e 20.5px,#000098 29.5px,#000099 34.5px,#0007ec 41.5px,#0037fe 44.5px,#00d5fa 50.5px,#00fbdf 53.5px,#01ff0f 68.5px,#21ff00 74.5px,#45ff00 85.5px,#29ff02 100.5px,#06ff21 111.5px,#00fe93 126px)"></b><b style="left:344px;background:linear-gradient(#000080 0px,#00009f 28.5px,#0001c4 34.5px,#000dee 38.5px,#003ffd 41.5px,#00dbf8 47.5px,#00fbd9 50.5px,#00ff1a 64.5px,#0eff00 69.5px,#2dff00 80.5px,#0fff11 96.5px,#01ff55 107.5px,#00f0ca 121.5px,#00d8e3 126px)"></b><b style="left:346px;background:linear-gradient(#000080 0px,#000097 17.5px,#0005dc 31.5px,#0022f5 35.5px,#008cfe 40.5px,#00e4f0 44.5px,#00fec0 48.5px,#00ff22 60.5px,#06ff02 65.5px,#18ff01 76.5px,#05ff1d 88.5px,#00f3bd 108.5px,#00d1e3 114.5px,#0079f4 122.5px,#0052f1 126px)"></b><b style="left:348px;background:linear-gradient(#000080 0px,#00009a 15.5px,#0006ea 27.5px,#0033fb 31.5px,#00d8f5 39.5px,#00f8d9 42.5px,#00ff30 55.5px,#03ff02 62.5px,#06ff11 75.5px,#00ff64 87.5px,#00eec7 98.5px,#00b6ee 105.5px,#0046eb 114.5px,#0012d0 121.5px,#0007c1 126px)"></b><b style="left:350px;background:linear-gradient(#000080 0px,#00009d 13.5px,#0007f2 24.5px,#004afe 28.5px,#00d3f9 34.5px,#00fad4 38.5px,#00ff32 51.5px,#00ff06 59.5px,#01ff20 69.5px,#00fd91 82.5px,#00deda 90.5px,#0089f0 97.5px,#003de3 103.5px,#0016d2 108.5px,#000ac5 112.5px,#0013cb 119.5px,#0033de 126px)"></b><b style="left:352px;background:linear-gradient(#000081 0px,#00009d 11.5px,#0005f1 21.5px,#0035fe 24.5px,#00e3f7 31.5px,#00fec8 35.5px,#00ff3e 46.5px,#00ff16 53.5px,#00ff23 61.5px,#00ff79 71.5px,#00eace 79.5px,#0093f0 86.5px,#003de0 92.5px,#0018d3 96.5px,#000ec7 99.5px,#0016c9 105.5px,#003dde 111.5px,#0080ed 118.5px,#00c0e3 126px)"></b><b style="left:354px;background:linear-gradient(#000081 0px,#0000a2 10.5px,#0007f5 19.5px,#0041ff 22.5px,#00e5fb 28.5px,#00fed7 31.5px,#00ff52 41.5px,#00ff28 48.5px,#00ff35 55.5px,#00fd90 65.5px,#00dada 72.5px,#008eee 77.5px,#004be6 81.5px,#0018cf 86.5px,#0011c9 88.5px,#001acb 93.5px,#0038db 97.5px,#0087e9 104.5px,#00e4ca 114.5px,#01fc83 126px)"></b><b style="left:356px;background:linear-gradient(#000081 0px,#0000a4 9.5px,#0003f6 17.5px,#0041ff 20.5px,#00ebfd 26.5px,#00ffd7 29.5px,#00ff6d 37.5px,#00ff45 44.5px,#00ff5a 51.5px,#00f3b4 60.5px,#00d3db 64.5px,#0081ed 69.5px,#0023db 75.5px,#0014cc 78.5px,#001bc8 82.5px,#0033da 85.5px,#0081e7 91.5px,#00b2de 95.5px,#00e4c0 100.5px,#04fd66 111.5px,#15ff24 123.5px,#1aff1d 126px)"></b><b style="left:358px;background:linear-gradient(#000081 0px,#0000a4 8.5px,#0004fa 16.5px,#00a0ff 22.5px,#00f5ff 25.5px,#00ff91 34.5px,#00ff74 41.5px,#00fc96 48.5px,#00d7d6 55.5px,#0089eb 60.5px,#0053e3 63.5px,#001fd3 67.5px,#0022d1 73.5px,#006ee4 79.5px,#00a3de 82.5px,#01e4b5 88.5px,#07fc63 96.5px,#1bff23 105.5px,#3eff06 116.5px,#57ff01 126px)"></b><b style="left:360px;background:linear-gradient(#000082 0px,#0000a9 8.5px,#0000f8 15.5px,#0027ff 17.5px,#00f2ff 25.5px,#00fdbd 33.5px,#00f2bc 40.5px,#00d8d6 45.5px,#0086e9 51.5px,#0055e3 54.5px,#0022d2 58.5px,#0025cd 63.5px,#0073e0 69.5px,#00a7d5 72.5px,#02e3ac 77.5px,#0cfd4d 85.5px,#2fff10 94.5px,#78ff00 113.5px,#90ff00 126px)"></b><b style="left:362px;background:linear-gradient(#000082 0px,#0000aa 8.5px,#0009fd 16.5px,#00b7ff 25.5px,#00cff6 29.5px,#00b0ee 36.5px,#0078ea 41.5px,#0026d6 48.5px,#0031d4 54.5px,#0075db 59.5px,#00a9cd 62.5px,#03e49c 67.5px,#12fd44 74.5px,#36ff11 81.5px,#81ff00 95.5px,#c9fa00 118.5px,#d3f800 126px)"></b><b style="left:364px;background:linear-gradient(#000081 0px,#0000ac 9.5px,#0005ef 17.5px,#0048f4 25.5px,#003ae1 33.5px,#0021d2 38.5px,#002cd1 43.5px,#0080d7 49.5px,#03d9aa 55.5px,#13fb4b 62.5px,#3bff12 69.5px,#8dfe00 81.5px,#dfeb00 99.5px,#f9c400 122.5px,#fac200 126px)"></b><b style="left:366px;background:linear-gradient(#000081 0px,#0005c8 22.5px,#000ac6 26.5px,#0032d6 33.5px,#0078d8 38.5px,#01a9c5 41.5px,#04dc9c 45.5px,#1dfb40 52.5px,#3eff15 57.5px,#96fc00 68.5px,#e0de00 81.5px,#fb9c00 95.5px,#fe6500 113.5px,#ff6200 126px)"></b><b style="left:368px;background:linear-gradient(#000080 0px,#0000a5 15.5px,#0011c9 21.5px,#0033d9 24.5px,#0075e2 28.5px,#00acce 31.5px,#03e09b 35.5px,#1cfb43 41.5px,#42ff15 46.5px,#98fc01 55.5px,#dcd800 65.5px,#f98b00 76.5px,#f73100 92.5px,#f21200 115.5px,#f61600 126px)"></b><b style="left:370px;background:linear-gradient(#000081 0px,#0000a0 9.5px,#000cd7 15.5px,#0051f2 19.5px,#00b2e2 23.5px,#01e3b4 26.5px,#17fc3f 32.5px,#3cff14 36.5px,#a4fa00 45.5px,#ddd400 52.5px,#f97e00 61.5px,#f33500 70.5px,#e00d00 81.5px,#cb0100 108.5px,#dc0100 126px)"></b><b style="left:372px;background:linear-gradient(#000082 0px,#0000a9 7.5px,#000bea 12.5px,#005ffb 15.5px,#00c4ed 18.5px,#00f1b0 21.5px,#14ff32 26.5px,#39ff0f 29.5px,#c3f600 39.5px,#f2bb00 45.5px,#f83d00 54.5px,#e00f00 62.5px,#a90000 84.5px,#ac0000 111.5px,#c20000 126px)"></b><b style="left:374px;background:linear-gradient(#000083 0px,#0000a4 5.5px,#0001e2 9.5px,#0027fb 11.5px,#00d5f3 15.5px,#00eee1 16.5px,#02ff42 21.5px,#18ff15 23.5px,#69ff00 28.5px,#ddfa00 35.5px,#f9be00 39.5px,#fb2600 47.5px,#de0600 53.5px,#9b0000 70.5px,#8a0000 94.5px,#b50000 126px)"></b><b style="left:376px;background:linear-gradient(#000084 0px,#0000b2 5.5px,#0002ed 8.5px,#0015fb 9.5px,#00a9ff 12.5px,#00defc 13.5px,#00f6e9 14.5px,#01ff17 20.5px,#2aff02 22.5px,#53ff00 24.5px,#bfff00 31.5px,#f7fc00 34.5px,#ff1300 45.5px,#e10100 50.5px,#9d0000 65.5px,#860000 88.5px,#af0000 122.5px,#b50000 126px)"></b><b style="left:378px;background:linear-gradient(#000086 0px,#0000b0 4.5px,#0000eb 7.5px,#000cfd 8.5px,#00d3ff 12.5px,#00fbf6 13.5px,#01ff10 20.5px,#50ff00 24.5px,#c0ff00 32.5px,#eaf400 35.5px,#fe5c00 44.5px,#f92700 48.5px,#dd0900 55.5px,#a70000 75.5px,#a50000 104.5px,#c20000 126px)"></b><b style="left:380px;background:linear-gradient(#000085 0px,#0000bd 5.5px,#0008f3 8.5px,#0075fe 11.5px,#00cafc 13.5px,#00f4c3 16.5px,#0aff30 22.5px,#39ff0d 26.5px,#caf400 39.5px,#f3ac00 47.5px,#f53d00 59.5px,#df0f00 72.5px,#c90100 103.5px,#db0100 126px)"></b><b style="left:382px;background:linear-gradient(#000083 0px,#0000ad 6.5px,#000cdd 10.5px,#0077f0 15.5px,#00aee1 18.5px,#00deb0 22.5px,#1bfa40 30.5px,#47ff14 36.5px,#acf500 48.5px,#e6c500 59.5px,#f95b00 77.5px,#f32900 92.5px,#f41400 121.5px,#f61500 126px)"></b><b style="left:384px;background:linear-gradient(#000081 0px,#0001b3 11.5px,#0026d6 19.5px,#0091cf 28.5px,#08dc8e 36.5px,#27fa3b 44.5px,#4afe14 50.5px,#9efa00 62.5px,#e1d700 77.5px,#fc9500 95.5px,#fe6400 117.5px,#ff6000 126px)"></b><b style="left:386px;background:linear-gradient(#000083 0px,#0000b9 8.5px,#0009dd 13.5px,#0033e0 20.5px,#002ed6 28.5px,#0042d1 35.5px,#0180d4 41.5px,#06d999 49.5px,#1cfa45 57.5px,#3fff15 64.5px,#8afd00 77.5px,#dfe900 99.5px,#fbc000 126px)"></b><b style="left:388px;background:linear-gradient(#000083 0px,#0000b3 6.5px,#0005f9 11.5px,#00a4fd 18.5px,#00bff5 21.5px,#00a0e2 31.5px,#005ce0 38.5px,#0036d8 43.5px,#0044d3 49.5px,#0196cc 56.5px,#04df98 63.5px,#16fb45 71.5px,#38ff12 79.5px,#83ff00 95.5px,#d2f800 123.5px,#d6f800 126px)"></b><b style="left:390px;background:linear-gradient(#000083 0px,#0000b0 6.5px,#0005fb 11.5px,#00e7ff 18.5px,#00fbea 20.5px,#00fcaa 26.5px,#00f69d 33.5px,#00d1c7 41.5px,#008fe0 47.5px,#0062e0 50.5px,#002fd6 55.5px,#002dd4 60.5px,#007fda 67.5px,#02deac 75.5px,#0dfc4f 84.5px,#36ff0f 95.5px,#80ff00 117.5px,#94ff00 126px)"></b><b style="left:392px;background:linear-gradient(#000082 0px,#0000a5 6.5px,#0009f5 12.5px,#005fff 15.5px,#00ebfb 19.5px,#00ffcc 22.5px,#00ff68 29.5px,#00ff44 35.5px,#01fd5c 42.5px,#00e8a8 50.5px,#00d3c7 53.5px,#0080e3 59.5px,#0056e1 62.5px,#0025d1 66.5px,#0028d2 72.5px,#007ae0 79.5px,#00aed4 83.5px,#01e2b4 88.5px,#09fd56 98.5px,#23ff13 109.5px,#5aff01 126px)"></b><b style="left:394px;background:linear-gradient(#000081 0px,#0000a0 7.5px,#000bf2 14.5px,#0039fd 16.5px,#00dff7 21.5px,#00f9dc 23.5px,#00ff41 32.5px,#02ff0c 38.5px,#07ff26 48.5px,#01fa81 57.5px,#00dcc8 63.5px,#0086e6 69.5px,#0056e2 72.5px,#001fce 77.5px,#0021ce 83.5px,#0075e5 91.5px,#00aadf 95.5px,#00e4be 101.5px,#04fd68 111.5px,#16ff22 122.5px,#1dff15 126px)"></b><b style="left:396px;background:linear-gradient(#000081 0px,#00009e 9.5px,#0007e8 16.5px,#0023fa 18.5px,#00c2fa 23.5px,#00eee9 25.5px,#00ff9f 29.5px,#00ff15 37.5px,#10ff01 41.5px,#21ff02 49.5px,#0dff1c 57.5px,#01fc6e 65.5px,#00e3c6 72.5px,#0096e9 78.5px,#0054e6 82.5px,#001dd2 87.5px,#0011ce 90.5px,#001dd1 95.5px,#006dea 103.5px,#00b7e2 109.5px,#00e8c2 115.5px,#01fe72 126px)"></b><b style="left:398px;background:linear-gradient(#000080 0px,#00009a 11.5px,#0007e6 19.5px,#0039fb 22.5px,#00d2f6 27.5px,#00f9cd 30.5px,#02ff18 40.5px,#1fff00 45.5px,#37ff00 53.5px,#13ff0f 64.5px,#02ff4b 71.5px,#00f1af 79.5px,#00d6d7 83.5px,#0092ec 88.5px,#0046e3 93.5px,#0017ce 98.5px,#000dc8 103.5px,#0017cb 106.5px,#0032db 110.5px,#0073ee 116.5px,#00c5e3 123.5px,#00d6da 126px)"></b><b style="left:400px;background:linear-gradient(#000080 0px,#000095 13.5px,#0001d7 21.5px,#001af4 24.5px,#0064fe 27.5px,#00d8f1 31.5px,#00fbc8 34.5px,#02ff23 43.5px,#16ff04 47.5px,#44ff00 56.5px,#31ff01 66.5px,#0dff19 74.5px,#00fd80 84.5px,#00dfd7 92.5px,#0090f0 98.5px,#003ae2 104.5px,#0015d2 108.5px,#0007c5 112.5px,#0010c7 117.5px,#002fde 122.5px,#004bed 126px)"></b><b style="left:402px;background:linear-gradient(#000080 0px,#000094 16.5px,#0001d2 24.5px,#0012f0 27.5px,#0051fe 30.5px,#00dcef 35.5px,#00fcc6 38.5px,#03ff25 47.5px,#16ff05 51.5px,#4cff00 61.5px,#3fff00 71.5px,#10ff11 81.5px,#01ff55 89.5px,#00efc3 99.5px,#00d1e2 103.5px,#007ef3 109.5px,#0037e5 114.5px,#0013d2 118.5px,#0005bf 122.5px,#0005be 126px)"></b><b style="left:404px;background:linear-gradient(#000080 0px,#00008f 18.5px,#0000c2 26.5px,#000aec 30.5px,#0040fc 33.5px,#00cdf7 38.5px,#00f7d5 41.5px,#04ff1c 52.5px,#22ff01 57.5px,#51ff00 66.5px,#43ff00 78.5px,#10ff0f 89.5px,#01ff4f 97.5px,#00f2c4 108.5px,#00cbea 113.5px,#0063f5 120.5px,#0022df 126px)"></b><b style="left:406px;background:linear-gradient(#000080 0px,#00008e 21.5px,#0000be 29.5px,#000ff0 34.5px,#0047fd 37.5px,#00d1f7 42.5px,#00f7d6 45.5px,#04ff21 56.5px,#1eff02 61.5px,#53ff00 71.5px,#48ff00 85.5px,#10ff0e 97.5px,#01ff4c 105.5px,#00f3cb 117.5px,#00d5e9 121.5px,#009ef8 126px)"></b><b style="left:408px;background:linear-gradient(#000080 0px,#00008d 24.5px,#0000c4 33.5px,#0014f3 38.5px,#006aff 42.5px,#00d5f7 46.5px,#00f8d6 49.5px,#04ff1a 61.5px,#2aff00 67.5px,#55ff00 76.5px,#4bff00 92.5px,#0dff0f 105.5px,#00ff5b 114.5px,#00f5cf 126px)"></b><b style="left:410px;background:linear-gradient(#000080 0px,#00008d 27.5px,#0000c1 36.5px,#000cf1 41.5px,#003ffd 44.5px,#00d8f7 50.5px,#00f9d7 53.5px,#04ff1d 65.5px,#20ff01 70.5px,#54ff00 79.5px,#4fff00 98.5px,#0bff0e 112.5px,#00ff5c 121.5px,#00ff88 126px)"></b><b style="left:412px;background:linear-gradient(#000080 0px,#00008d 30.5px,#0000be 39.5px,#0008ed 44.5px,#0031fc 47.5px,#00dcf6 54.5px,#00fbd6 57.5px,#05ff13 70.5px,#2fff00 76.5px,#56ff00 84.5px,#50ff00 104.5px,#0aff0c 118.5px,#00ff46 126px)"></b><b style="left:414px;background:linear-gradient(#000080 0px,#00008a 32.5px,#0000bc 42.5px,#000bf2 48.5px,#003bfe 51.5px,#00e4f4 58.5px,#00fec2 62.5px,#06ff11 74.5px,#37ff00 81.5px,#57ff00 89.5px,#4eff00 110.5px,#09ff09 123.5px,#03ff14 126px)"></b><b style="left:416px;background:linear-gradient(#000080 0px,#00008b 35.5px,#0000bb 45.5px,#0008f2 51.5px,#0035fe 54.5px,#00e1f8 61.5px,#00fdd9 64.5px,#03ff19 77.5px,#1fff01 82.5px,#52ff00 91.5px,#53ff00 112.5px,#13ff01 126px)"></b><b style="left:418px;background:linear-gradient(#000080 0px,#00008b 38.5px,#0000bd 48.5px,#0007f4 54.5px,#0037ff 57.5px,#00e2fa 64.5px,#00fedc 67.5px,#03ff17 81.5px,#24ff00 87.5px,#52ff00 97.5px,#4dff00 116.5px,#26ff00 126px)"></b><b style="left:420px;background:linear-gradient(#000080 0px,#00008b 40.5px,#0000bb 50.5px,#000af9 57.5px,#0058ff 61.5px,#00e5fa 67.5px,#00fedd 70.5px,#03ff19 85.5px,#1eff01 91.5px,#4eff00 103.5px,#48ff00 118.5px,#30ff00 126px)"></b><b style="left:422px;background:linear-gradient(#000080 0px,#00008b 41.5px,#0000bf 52.5px,#0008fa 59.5px,#0067ff 64.5px,#00e8fa 70.5px,#00ffd1 74.5px,#02ff1f 89.5px,#1aff02 96.5px,#43ff00 110.5px,#30ff00 126px)"></b><b style="left:424px;background:linear-gradient(#000080 0px,#00008a 40.5px,#0000c0 53.5px,#0008fc 61.5px,#00e9fa 73.5px,#00ffcb 78.5px,#01ff25 94.5px,#17ff02 103.5px,#2fff00 119.5px,#28ff00 126px)"></b><b style="left:426px;background:linear-gradient(#000080 0px,#00008c 39.5px,#0000cc 55.5px,#0003fb 62.5px,#007cff 70.5px,#00edf6 77.5px,#00ffb8 84.5px,#01ff25 101.5px,#11ff04 112.5px,#19ff00 126px)"></b><b style="left:428px;background:linear-gradient(#000080 0px,#00008c 36.5px,#0000dd 58.5px,#0005fd 64.5px,#0097ff 75.5px,#00e9f7 81.5px,#00ffc4 88.5px,#00ff36 107.5px,#06ff09 121.5px,#07ff05 126px)"></b><b style="left:430px;background:linear-gradient(#000080 0px,#00008c 33.5px,#0005fb 66.5px,#005bff 75.5px,#00e2f8 86.5px,#00fecf 93.5px,#00ff46 114.5px,#00ff1f 126px)"></b><b style="left:432px;background:linear-gradient(#000080 0px,#00008c 30.5px,#0000e2 60.5px,#000bfa 71.5px,#005cff 81.5px,#00e0f6 93.5px,#00fdd3 100.5px,#00ff53 122.5px,#00ff47 126px)"></b><b style="left:434px;background:linear-gradient(#000080 0px,#00008b 26.5px,#0000d5 50.5px,#0008f3 77.5px,#0040fe 86.5px,#00e6f2 102.5px,#00fec2 111.5px,#00ff72 126px)"></b><b style="left:436px;background:linear-gradient(#000080 0px,#00008b 23.5px,#0000d7 45.5px,#0000d3 77.5px,#0016f3 89.5px,#0058fe 97.5px,#00dff6 109.5px,#00fdd6 116.5px,#00ff9d 126px)"></b><b style="left:438px;background:linear-gradient(#000080 0px,#00008c 20.5px,#0000d9 40.5px,#0000ca 57.5px,#0000ac 76.5px,#0001cf 90.5px,#0016f1 98.5px,#0056fe 105.5px,#00e5f5 117.5px,#00fed0 124.5px,#00ffc9 126px)"></b><b style="left:440px;background:linear-gradient(#000080 0px,#00008d 17.5px,#0000db 35.5px,#0000cc 50.5px,#000093 71.5px,#0000a5 91.5px,#000ae9 104.5px,#003afc 110.5px,#00e6f8 123.5px,#00f6f0 126px)"></b><b style="left:442px;background:linear-gradient(#000080 0px,#00008f 14.5px,#0000dc 30.5px,#0000cd 43.5px,#000093 62.5px,#0000ad 83.5px,#00009b 98.5px,#0007e5 110.5px,#002bfb 115.5px,#00c3fe 126px)"></b><b style="left:444px;background:linear-gradient(#000080 0px,#000095 12.5px,#0000dd 25.5px,#0000d2 35.5px,#000095 53.5px,#0000b4 65.5px,#0000d6 81.5px,#0000bc 94.5px,#000099 104.5px,#0000b8 110.5px,#000cf1 117.5px,#0049ff 122.5px,#007dff 126px)"></b><b style="left:446px;background:linear-gradient(#000080 0px,#00009c 10.5px,#0000dc 21.5px,#0000ca 30.5px,#000099 43.5px,#0000ad 53.5px,#0006f0 74.5px,#0004ec 91.5px,#0000ae 104.5px,#000096 110.5px,#0008f3 121.5px,#003dff 126px)"></b><b style="left:448px;background:linear-gradient(#000081 0px,#0000a9 9.5px,#0000d4 17.5px,#0000bc 25.5px,#0000a1 33.5px,#0000b7 44.5px,#0012f8 65.5px,#0034ff 82.5px,#0004f2 98.5px,#000092 113.5px,#0000aa 117.5px,#0006f4 124.5px,#000efa 126px)"></b><b style="left:450px;background:linear-gradient(#000082 0px,#0000c0 13.5px,#0000ac 24.5px,#0012f5 51.5px,#0062ff 76.5px,#0057ff 88.5px,#0002f2 103.5px,#00008e 116.5px,#0000bb 121.5px,#0001e9 126px)"></b><b style="left:452px;background:linear-gradient(#000082 0px,#000bca 20.5px,#001df3 32.5px,#0040fe 49.5px,#0087ff 71.5px,#0083ff 85.5px,#004fff 96.5px,#0000f3 106.5px,#00008a 118.5px,#0000d7 126px)"></b><b style="left:454px;background:linear-gradient(#000082 0px,#0000a5 7.5px,#001adc 13.5px,#0059fa 21.5px,#0065ff 43.5px,#00a7ff 68.5px,#009cff 84.5px,#0062ff 96.5px,#0000f7 107.5px,#000085 119.5px,#0000cc 126px)"></b><b style="left:456px;background:linear-gradient(#000085 0px,#0000b9 5.5px,#000be9 8.5px,#0077fe 14.5px,#0091ff 19.5px,#0072ff 35.5px,#00baff 64.5px,#00acff 82.5px,#0070ff 95.5px,#0000fb 107.5px,#000093 118.5px,#000089 120.5px,#0000c9 126px)"></b><b style="left:458px;background:linear-gradient(#000088 0px,#0000cd 5.5px,#0002ee 7.5px,#004bf4 12.5px,#0050f4 19.5px,#004afe 31.5px,#00b3ff 54.5px,#00beff 71.5px,#0090ff 88.5px,#003eff 100.5px,#0000f5 107.5px,#000086 119.5px,#0000cf 126px)"></b><b style="left:460px;background:linear-gradient(#000087 0px,#0006cf 8.5px,#000ed1 14.5px,#0008c1 21.5px,#000be1 29.5px,#002cfd 36.5px,#008aff 47.5px,#00b0ff 59.5px,#00a2ff 77.5px,#0065ff 92.5px,#0001f5 105.5px,#00008a 118.5px,#0000dc 126px)"></b><b style="left:462px;background:linear-gradient(#00008c 0px,#0002db 5.5px,#003bf1 10.5px,#002ef1 14.5px,#0001d3 20.5px,#0000a4 26.5px,#0000a8 29.5px,#0011f9 38.5px,#0070ff 49.5px,#0091ff 61.5px,#007bff 79.5px,#0034ff 94.5px,#0001ed 103.5px,#00008f 116.5px,#0002ef 126px)"></b><b style="left:464px;background:linear-gradient(#00008b 0px,#0001d3 5.5px,#0030ea 10.5px,#002df4 15.5px,#0000eb 21.5px,#00008d 30.5px,#0004f0 40.5px,#004fff 54.5px,#005bff 70.5px,#002dfe 87.5px,#0001e7 99.5px,#000093 112.5px,#0000a8 116.5px,#0006f2 123.5px,#001bfd 126px)"></b><b style="left:466px;background:linear-gradient(#000088 0px,#0001be 6.5px,#0005c2 16.5px,#0000c3 23.5px,#000089 30.5px,#0001df 42.5px,#001bfa 58.5px,#0018fa 77.5px,#0001e0 93.5px,#000097 108.5px,#0000b0 113.5px,#0009f2 120.5px,#0040ff 124.5px,#0054ff 126px)"></b><b style="left:468px;background:linear-gradient(#000085 0px,#0000d1 9.5px,#0000b8 15.5px,#0000a6 21.5px,#00009c 31.5px,#0001d8 57.5px,#0001d8 81.5px,#00009a 102.5px,#0000b2 108.5px,#000df1 116.5px,#003dfe 120.5px,#0099ff 126px)"></b><b style="left:470px;background:linear-gradient(#000082 0px,#0000c3 17.5px,#0000b9 29.5px,#00009c 42.5px,#0000ad 78.5px,#00009c 96.5px,#000bed 110.5px,#003cfd 115.5px,#00defb 126px)"></b><b style="left:472px;background:linear-gradient(#000082 0px,#000096 10.5px,#000094 13.5px,#0000e4 20.5px,#0000e6 25.5px,#000092 36.5px,#0000a2 54.5px,#0000a3 85.5px,#0002d3 98.5px,#0020f7 106.5px,#0086ff 114.5px,#00e6f6 121.5px,#00fddd 126px)"></b><b style="left:474px;background:linear-gradient(#000081 0px,#00009a 13.5px,#0000eb 19.5px,#0000eb 23.5px,#00009b 32.5px,#0000ab 37.5px,#0000cc 47.5px,#0001c7 80.5px,#0013f0 95.5px,#0047fd 102.5px,#00e4f5 115.5px,#00fed0 121.5px,#00ffae 126px)"></b><b style="left:476px;background:linear-gradient(#000080 0px,#000094 7.5px,#0000ea 16.5px,#0000c2 23.5px,#0001b1 26.5px,#0001b8 31.5px,#0003e9 42.5px,#0012f2 81.5px,#003cfc 91.5px,#00e3f4 108.5px,#00fecd 115.5px,#00ff7c 126px)"></b><b style="left:478px;background:linear-gradient(#000082 0px,#000099 4.5px,#0016ed 10.5px,#0014f3 13.5px,#0002db 16.5px,#0005c2 18.5px,#0013c5 22.5px,#001df1 32.5px,#0026fe 53.5px,#0040fe 77.5px,#0086ff 89.5px,#00f0ed 102.5px,#00ff96 115.5px,#00ff48 126px)"></b><b style="left:480px;background:linear-gradient(#000088 0px,#0006e8 6.5px,#0020eb 10.5px,#0025d5 13.5px,#002ed3 15.5px,#008df2 22.5px,#008dfd 26.5px,#003fff 37.5px,#0041ff 48.5px,#0080ff 75.5px,#00eff0 93.5px,#00ff99 107.5px,#03ff18 126px)"></b><b style="left:482px;background:linear-gradient(#00008f 0px,#0006c3 3.5px,#0030da 6.5px,#0033da 7.5px,#006ebb 9.5px,#0081bf 10.5px,#0081ba 11.5px,#00b2a8 13.5px,#00e1b7 17.5px,#00ecf3 23.5px,#00c3ff 26.5px,#0064ff 32.5px,#003eff 38.5px,#004dff 48.5px,#00bfff 75.5px,#00f9e8 87.5px,#07ff10 119.5px,#1aff02 126px)"></b><b style="left:484px;background:linear-gradient(#00009f 0px,#0000c1 1.5px,#0026d9 2.5px,#0065e8 3.5px,#00cba2 6.5px,#00d869 8.5px,#00f04f 11.5px,#00f475 14.5px,#00c5de 20.5px,#0078f5 25.5px,#0035f5 30.5px,#001bfb 37.5px,#003bff 46.5px,#00f6f5 77.5px,#00ff8c 94.5px,#07ff11 111.5px,#3cff00 126px)"></b><b style="left:486px;background:linear-gradient(#0000ac 0px,#0001d8 1.5px,#0036f0 2.5px,#007cfc 3.5px,#00b1c2 5.5px,#01bbac 6.5px,#04ad89 9.5px,#01ad8c 12.5px,#00aab2 14.5px,#0055e5 19.5px,#0012ce 25.5px,#0005bf 29.5px,#0002d9 36.5px,#0011fd 44.5px,#00f9f9 72.5px,#00ff6c 92.5px,#07ff10 104.5px,#42ff00 118.5px,#54ff00 126px)"></b><b style="left:488px;background:linear-gradient(#0000b1 0px,#000adf 1.5px,#0056f2 2.5px,#008de8 3.5px,#00cc97 5.5px,#09df81 6.5px,#26d963 9.5px,#10d95a 13.5px,#01d776 15.5px,#00cab9 18.5px,#0093f0 22.5px,#0035ec 25.5px,#0002d2 28.5px,#00009d 33.5px,#0000aa 36.5px,#0007fa 46.5px,#00fafc 69.5px,#00ff50 90.5px,#0aff0a 99.5px,#54ff00 116.5px,#5eff00 126px)"></b><b style="left:490px;background:linear-gradient(#0000aa 0px,#0005d5 1.5px,#004de7 2.5px,#007ee5 3.5px,#00cc93 5.5px,#1cd956 7.5px,#25df43 11.5px,#03f053 15.5px,#00d9f8 22.5px,#0020fb 27.5px,#0007f6 28.5px,#00008c 35.5px,#000098 37.5px,#0003fa 48.5px,#009eff 61.5px,#00fdfb 68.5px,#06ff0d 93.5px,#4cff00 106.5px,#67ff00 126px)"></b><b style="left:492px;background:linear-gradient(#00009d 0px,#0005df 2.5px,#0030ed 3.5px,#009de2 5.5px,#02adae 7.5px,#039ebe 9.5px,#0386ca 12.5px,#0198bf 14.5px,#0093b7 15.5px,#0068e0 20.5px,#0036e1 24.5px,#0002d3 28.5px,#000088 36.5px,#0003fb 50.5px,#009bff 61.5px,#00fdfc 67.5px,#05ff0c 89.5px,#55ff00 103.5px,#6fff00 126px)"></b><b style="left:494px;background:linear-gradient(#000096 0px,#0000d1 2.5px,#0025e6 3.5px,#00a2ef 5.5px,#00c6e3 6.5px,#00e3ba 8.5px,#00dbab 11.5px,#00d3c8 14.5px,#0095eb 17.5px,#004be7 20.5px,#0014d2 23.5px,#0000ad 29.5px,#00009a 35.5px,#0007ff 52.5px,#00c1ff 63.5px,#00fbfd 66.5px,#05ff0a 86.5px,#54ff00 98.5px,#73ff00 122.5px,#73ff00 126px)"></b><b style="left:496px;background:linear-gradient(#000088 0px,#000dbb 4.5px,#002dcc 6.5px,#007dd6 9.5px,#00b9c8 12.5px,#00ddd4 15.5px,#00dbf4 18.5px,#00d3fe 19.5px,#0040f6 24.5px,#000aea 27.5px,#0000b9 35.5px,#0000c9 44.5px,#0001fd 52.5px,#008dff 60.5px,#00f8fd 65.5px,#07ff06 84.5px,#54ff00 94.5px,#76ff00 117.5px,#72ff00 126px)"></b><b style="left:498px;background:linear-gradient(#000087 0px,#0006ce 8.5px,#002acb 13.5px,#0060e7 17.5px,#0072f6 20.5px,#0035fc 25.5px,#0000f4 29.5px,#0000c5 37.5px,#0000ce 45.5px,#0001fd 52.5px,#0085ff 59.5px,#00f7fc 64.5px,#02ff0b 81.5px,#53ff00 91.5px,#76ff00 114.5px,#6dff00 126px)"></b><b style="left:500px;background:linear-gradient(#000083 0px,#0000a9 5.5px,#0000dd 10.5px,#0003c9 15.5px,#0005c0 17.5px,#000fc8 21.5px,#0001de 28.5px,#0000c4 41.5px,#0000f2 50.5px,#000aff 52.5px,#00b7ff 60.5px,#00f8f8 63.5px,#02ff0a 79.5px,#54ff00 89.5px,#73ff00 111.5px,#64ff00 126px)"></b><b style="left:502px;background:linear-gradient(#000081 0px,#000095 6.5px,#0000e0 14.5px,#0000c7 19.5px,#0000a9 24.5px,#0000c9 43.5px,#0004fa 50.5px,#004cff 54.5px,#00f2fa 61.5px,#00ffb4 66.5px,#02ff0b 77.5px,#50ff00 86.5px,#6eff00 107.5px,#57ff00 126px)"></b><b style="left:504px;background:linear-gradient(#000080 0px,#000091 9.5px,#0000d7 18.5px,#0000bf 24.5px,#000094 31.5px,#0000a6 37.5px,#0004f7 48.5px,#0032ff 51.5px,#00eff8 59.5px,#00ffc2 63.5px,#02ff0b 75.5px,#4dff00 84.5px,#65ff00 104.5px,#46ff00 123.5px,#3dff00 126px)"></b><b style="left:506px;background:linear-gradient(#000080 0px,#00008e 12.5px,#0000c9 21.5px,#0000bb 27.5px,#000088 35.5px,#0005f5 46.5px,#0036ff 49.5px,#00e4fb 56.5px,#00fedb 59.5px,#03ff0a 73.5px,#55ff00 85.5px,#56ff00 107.5px,#21ff04 122.5px,#13ff0a 126px)"></b><b style="left:508px;background:linear-gradient(#000080 0px,#00008b 15.5px,#0000b5 25.5px,#000096 32.5px,#00008c 35.5px,#0009f5 44.5px,#0042ff 47.5px,#00ddfa 53.5px,#00fddd 56.5px,#01ff12 70.5px,#1fff00 75.5px,#52ff00 85.5px,#47ff00 102.5px,#0fff12 117.5px,#01ff43 126px)"></b><b style="left:510px;background:linear-gradient(#000080 0px,#000092 22.5px,#00009c 34.5px,#0009ef 41.5px,#003eff 44.5px,#00ddf9 50.5px,#00fcdb 53.5px,#00ff16 67.5px,#16ff00 72.5px,#41ff00 83.5px,#2fff01 97.5px,#0bff19 108.5px,#00ff79 121.5px,#00fd9c 126px)"></b><b style="left:512px;background:linear-gradient(#000080 0px,#00009f 27.5px,#0001c9 34.5px,#0013f0 38.5px,#0048fe 41.5px,#00e0f5 47.5px,#00fdd5 50.5px,#00ff22 63.5px,#0aff01 68.5px,#2aff00 79.5px,#0eff12 95.5px,#01ff56 106.5px,#00efcb 120.5px,#00cfe8 126px)"></b><b style="left:514px;background:linear-gradient(#000080 0px,#000098 17.5px,#000ae8 32.5px,#003bfb 36.5px,#00dbf5 43.5px,#00fad7 46.5px,#00ff29 59.5px,#07ff01 65.5px,#15ff03 77.5px,#04ff24 88.5px,#00f3be 107.5px,#00cfe4 113.5px,#0077f4 121.5px,#0045ee 126px)"></b><b style="left:516px;background:linear-gradient(#000080 0px,#00009b 15.5px,#0008ee 27.5px,#004efd 32.5px,#00def2 39.5px,#00fdc7 43.5px,#00ff2d 55.5px,#03ff02 62.5px,#05ff11 74.5px,#00ff5b 85.5px,#00f1bf 96.5px,#00d1e1 101.5px,#0081f1 108.5px,#0033e0 115.5px,#0012ce 120.5px,#0006c2 126px)"></b><b style="left:518px;background:linear-gradient(#000080 0px,#00009e 13.5px,#000af4 24.5px,#0052fe 28.5px,#00daf7 34.5px,#00fccf 38.5px,#00ff38 50.5px,#00ff08 58.5px,#01ff1a 67.5px,#00ff72 78.5px,#00ecca 87.5px,#00a4f1 94.5px,#0046e7 101.5px,#0015d0 107.5px,#000ac6 111.5px,#0012c7 117.5px,#0037e0 124.5px,#003ee4 126px)"></b><b style="left:520px;background:linear-gradient(#000081 0px,#00009e 11.5px,#0007f4 21.5px,#003bfe 24.5px,#00d8fb 30.5px,#00fadf 33.5px,#00ff45 45.5px,#00ff19 52.5px,#00ff23 60.5px,#00ff77 70.5px,#00eacc 78.5px,#0093f0 85.5px,#003ce0 91.5px,#0018d2 95.5px,#000ec7 98.5px,#0017cb 104.5px,#0038dc 109.5px,#007bec 116.5px,#00c4e1 124.5px,#00cbdd 126px)"></b><b style="left:522px;background:linear-gradient(#000081 0px,#0000a3 10.5px,#0009f7 19.5px,#0047ff 22.5px,#00e9f9 28.5px,#00fed3 31.5px,#00ff5a 40.5px,#00ff2c 47.5px,#00ff35 54.5px,#00fe82 63.5px,#00e6d1 70.5px,#0091ee 76.5px,#004ce7 80.5px,#0018cf 85.5px,#0011ca 87.5px,#001acc 92.5px,#003adc 96.5px,#008be9 103.5px,#00e5c6 113.5px,#01fd77 126px)"></b><b style="left:524px;background:linear-gradient(#000081 0px,#0000a5 9.5px,#0005f7 17.5px,#0045ff 20.5px,#00eefc 26.5px,#00ffc5 30.5px,#00ff64 38.5px,#00ff48 45.5px,#00ff69 52.5px,#00eebd 60.5px,#00d5d9 63.5px,#0084ec 68.5px,#0040e0 72.5px,#0019ca 76.5px,#001cc8 81.5px,#0034da 84.5px,#0073e7 89.5px,#00abe0 93.5px,#00e5bc 99.5px,#04fd68 109.5px,#14ff28 120.5px,#1dff16 126px)"></b><b style="left:526px;background:linear-gradient(#000081 0px,#0000a5 8.5px,#0005fb 16.5px,#00f7ff 25.5px,#00ff94 34.5px,#00ff7a 41.5px,#00fba0 48.5px,#00d8d5 54.5px,#008bea 59.5px,#0055e4 62.5px,#0020d4 66.5px,#0022d0 72.5px,#006fe3 78.5px,#00a4dd 81.5px,#01e4b3 87.5px,#09fd56 96.5px,#20ff1b 105.5px,#55ff01 122.5px,#5bff01 126px)"></b><b style="left:528px;background:linear-gradient(#000082 0px,#0000a9 8.5px,#0000f9 15.5px,#0041ff 18.5px,#00efff 25.5px,#00fcc3 33.5px,#00edc3 40.5px,#00d7d7 44.5px,#0087e9 50.5px,#0056e3 53.5px,#0023d3 57.5px,#0025cd 62.5px,#0073df 68.5px,#00a7d4 71.5px,#02e3ab 76.5px,#0bfc57 83.5px,#2cff12 92.5px,#72ff00 109.5px,#96ff00 126px)"></b><b style="left:530px;background:linear-gradient(#000082 0px,#0000aa 8.5px,#0007fc 16.5px,#009fff 24.5px,#00c3fa 28.5px,#00b3f1 34.5px,#0074ea 40.5px,#0025d5 47.5px,#0032d4 53.5px,#0076da 58.5px,#00a9cc 61.5px,#02dea9 65.5px,#0ffc4c 72.5px,#38ff10 80.5px,#89ff00 95.5px,#ccf900 116.5px,#d9f700 126px)"></b><b style="left:532px;background:linear-gradient(#000081 0px,#0000ab 9.5px,#0004ec 17.5px,#003df1 26.5px,#002fde 33.5px,#0020d2 37.5px,#002cd1 42.5px,#0082d7 48.5px,#03d9a9 54.5px,#14fb4a 61.5px,#3dff12 68.5px,#95fd00 81.5px,#e1e700 98.5px,#fabe00 119.5px,#fbbb00 126px)"></b><b style="left:534px;background:linear-gradient(#000081 0px,#0003c3 22.5px,#0019cb 29.5px,#0032d6 32.5px,#0079d9 37.5px,#01aac5 40.5px,#04dd9b 44.5px,#1efb3f 51.5px,#48ff11 57.5px,#a7fa00 69.5px,#e2da00 80.5px,#fd9100 95.5px,#fe5e00 111.5px,#ff5b00 126px)"></b><b style="left:536px;background:linear-gradient(#000080 0px,#0000a5 15.5px,#0016d0 21.5px,#0072e3 27.5px,#00abd0 30.5px,#03e09d 34.5px,#1cfb42 40.5px,#43ff14 45.5px,#9bfc01 54.5px,#ded500 64.5px,#fa8500 75.5px,#f62f00 90.5px,#ef0e00 112.5px,#f51300 126px)"></b><b style="left:538px;background:linear-gradient(#000081 0px,#0000a3 9.5px,#000edd 15.5px,#0045f1 18.5px,#00ade8 22.5px,#00e2bc 25.5px,#14fc42 31.5px,#3aff15 35.5px,#a4fa00 44.5px,#d8dc00 50.5px,#f59900 57.5px,#f33700 68.5px,#df0d00 79.5px,#c60000 105.5px,#da0100 126px)"></b><b style="left:540px;background:linear-gradient(#000082 0px,#0000ab 7.5px,#0005e1 11.5px,#0026f5 13.5px,#00b6f5 17.5px,#00e4d8 19.5px,#07fe52 24.5px,#23ff1a 27.5px,#77ff01 33.5px,#d7ee00 40.5px,#f98f00 47.5px,#f53400 54.5px,#de0e00 61.5px,#a60000 83.5px,#a80000 109.5px,#c20000 126px)"></b><b style="left:542px;background:linear-gradient(#000083 0px,#0000a5 5.5px,#0002e5 9.5px,#0010f4 10.5px,#0059fe 12.5px,#00bafb 14.5px,#00f1db 16.5px,#03ff38 21.5px,#1cff0f 23.5px,#8dff00 30.5px,#e3f900 35.5px,#fbb700 39.5px,#fe2b00 46.5px,#e60800 51.5px,#9d0000 68.5px,#880000 91.5px,#b40000 124.5px,#b60000 126px)"></b><b style="left:544px;background:linear-gradient(#000084 0px,#0000b4 5.5px,#0003ef 8.5px,#001afc 9.5px,#00e3fb 13.5px,#00fec7 15.5px,#01ff13 20.5px,#47ff00 23.5px,#aeff00 30.5px,#f7fb00 34.5px,#ff1400 45.5px,#e10100 50.5px,#9e0000 65.5px,#880000 88.5px,#b20000 122.5px,#b80000 126px)"></b><b style="left:546px;background:linear-gradient(#000086 0px,#0000b1 4.5px,#0000ec 7.5px,#000dfd 8.5px,#00d3ff 12.5px,#00f9f5 13.5px,#01ff14 20.5px,#4eff01 24.5px,#bbff00 32.5px,#e6f700 35.5px,#fd8900 42.5px,#fb2f00 48.5px,#e10c00 55.5px,#aa0000 76.5px,#aa0000 105.5px,#c70000 126px)"></b><b style="left:548px;background:linear-gradient(#000085 0px,#0000bb 5.5px,#0006f1 8.5px,#0044fb 10.5px,#00bffc 13.5px,#00e9e0 15.5px,#03fd4f 21.5px,#25ff15 25.5px,#97ff00 35.5px,#d7e500 42.5px,#f78e00 51.5px,#f33800 62.5px,#df0f00 75.5px,#d00100 107.5px,#e10100 126px)"></b><b style="left:550px;background:linear-gradient(#000082 0px,#0000a8 6.5px,#000ad6 10.5px,#0066f0 15.5px,#00aedc 19.5px,#01ddae 23.5px,#1bfa42 31.5px,#3cfe19 36.5px,#9bfb01 47.5px,#d8d900 57.5px,#f69300 69.5px,#f83600 90.5px,#f71c00 119.5px,#f91d00 126px)"></b><b style="left:552px;background:linear-gradient(#000081 0px,#0000ac 10.5px,#0016c9 17.5px,#0031d7 21.5px,#008cd0 29.5px,#08da92 37.5px,#2afb36 46.5px,#46fe16 51.5px,#9afc01 63.5px,#e1d900 79.5px,#fc9900 98.5px,#ff7100 121.5px,#ff7000 126px)"></b><b style="left:554px;background:linear-gradient(#000083 0px,#0000bc 8.5px,#000ce3 13.5px,#003de3 20.5px,#0033db 27.5px,#0040d2 36.5px,#0189cd 43.5px,#08dc92 51.5px,#1ffb40 59.5px,#41ff13 66.5px,#90fd00 80.5px,#e0ea00 103.5px,#f9ce00 126px)"></b><b style="left:556px;background:linear-gradient(#000083 0px,#0000b3 6.5px,#0005fa 11.5px,#00affe 18.5px,#00caf3 21.5px,#00bbde 28.5px,#008ae1 35.5px,#0058df 40.5px,#0035d7 44.5px,#0040d3 50.5px,#0093ce 57.5px,#03de9b 64.5px,#13fb48 72.5px,#3aff11 81.5px,#84ff00 98.5px,#ccfb00 126px)"></b><b style="left:558px;background:linear-gradient(#000083 0px,#0000af 6.5px,#0005fa 11.5px,#00e8ff 18.5px,#00fce9 20.5px,#00fda4 26.5px,#00fa91 32.5px,#00e2b5 40.5px,#0093e0 48.5px,#0063e0 51.5px,#002ed5 56.5px,#0035d4 62.5px,#007ada 68.5px,#00afca 72.5px,#02e2a6 77.5px,#0cfc56 85.5px,#2fff11 96.5px,#78ff00 117.5px,#8bff00 126px)"></b><b style="left:560px;background:linear-gradient(#000082 0px,#0000a3 6.5px,#0006f3 12.5px,#0036fe 14.5px,#00e6fc 19.5px,#00fde1 21.5px,#00ff71 28.5px,#00ff40 34.5px,#00ff45 40.5px,#00f392 49.5px,#00d5c7 54.5px,#0081e3 60.5px,#0056e1 63.5px,#0025d3 67.5px,#0027d0 73.5px,#0073e1 80.5px,#00a1db 83.5px,#01e4b1 90.5px,#09fd57 100.5px,#22ff15 111.5px,#52ff01 126px)"></b><b style="left:562px;background:linear-gradient(#000081 0px,#0000a6 8.5px,#0008ef 14.5px,#0050fe 17.5px,#00d9f9 21.5px,#00fdce 24.5px,#00ff35 33.5px,#02ff09 38.5px,#09ff1f 48.5px,#01fc67 56.5px,#00dcc9 64.5px,#0087e7 70.5px,#0057e2 73.5px,#0020d0 78.5px,#001fca 84.5px,#006be6 92.5px,#00acdf 97.5px,#00e4bf 103.5px,#03fd6a 113.5px,#17ff1e 126px)"></b><b style="left:564px;background:linear-gradient(#000081 0px,#00009d 9.5px,#0005e5 16.5px,#001ef7 18.5px,#0098fe 22.5px,#00e8ec 25.5px,#00ffa5 29.5px,#00ff19 37.5px,#10ff01 41.5px,#24ff02 49.5px,#0dff1d 58.5px,#01fc6e 66.5px,#00e4c5 73.5px,#009ae9 79.5px,#0057e7 83.5px,#001ed6 88.5px,#0012cc 91.5px,#001bcc 96.5px,#0045dd 101.5px,#008bea 107.5px,#00e5ca 116.5px,#01fd83 126px)"></b><b style="left:566px;background:linear-gradient(#000080 0px,#000098 11.5px,#0005e2 19.5px,#0030fa 22.5px,#00c9f8 27.5px,#00f0e4 29.5px,#00ff73 35.5px,#05ff11 41.5px,#29ff00 47.5px,#38ff00 55.5px,#10ff16 66.5px,#01fe62 74.5px,#00e4cd 83.5px,#009aed 89.5px,#004de7 94.5px,#0019d3 99.5px,#000ec7 102.5px,#0017cd 108.5px,#0047e6 114.5px,#00b6eb 123.5px,#00c9e2 126px)"></b><b style="left:568px;background:linear-gradient(#000080 0px,#000093 13.5px,#0001d3 21.5px,#0015f1 24.5px,#0059fe 27.5px,#00d1f5 31.5px,#00f8ce 34.5px,#04ff1b 44.5px,#22ff01 49.5px,#47ff00 58.5px,#2dff02 68.5px,#0aff1e 76.5px,#00f2b4 90.5px,#00dad9 94.5px,#008bf0 100.5px,#0041e6 105.5px,#0013cf 110.5px,#0008c3 113.5px,#0011ca 119.5px,#003de7 126px)"></b><b style="left:570px;background:linear-gradient(#000080 0px,#000092 16.5px,#0001ce 24.5px,#000dee 27.5px,#0048fd 30.5px,#00d6f3 35.5px,#00f9cc 38.5px,#04ff1d 48.5px,#22ff01 53.5px,#4fff00 62.5px,#3eff00 73.5px,#0fff14 83.5px,#01ff64 92.5px,#00eec7 101.5px,#00b6f0 107.5px,#003ae8 115.5px,#0013d4 119.5px,#0004be 124.5px,#0004be 126px)"></b><b style="left:572px;background:linear-gradient(#000080 0px,#000091 19.5px,#0000c9 27.5px,#0012f1 31.5px,#0050fe 34.5px,#00d9f2 39.5px,#00facc 42.5px,#04ff21 52.5px,#20ff01 57.5px,#52ff00 66.5px,#48ff00 79.5px,#10ff11 91.5px,#01ff52 99.5px,#00f0cb 110.5px,#00b8f4 116.5px,#0036eb 124.5px,#002be5 126px)"></b><b style="left:574px;background:linear-gradient(#000080 0px,#00008d 21.5px,#0000c5 30.5px,#000aee 34.5px,#003efd 37.5px,#00dcf2 43.5px,#00fbcd 46.5px,#05ff19 57.5px,#2dff00 63.5px,#55ff00 71.5px,#49ff00 87.5px,#0fff10 99.5px,#00ff54 107.5px,#00f3cd 118.5px,#00c8f2 123.5px,#00aaf8 126px)"></b><b style="left:576px;background:linear-gradient(#000080 0px,#00008d 24.5px,#0000c1 33.5px,#000ff1 38.5px,#0046fe 41.5px,#00dff2 47.5px,#00fccd 50.5px,#04ff1b 61.5px,#23ff01 66.5px,#54ff00 74.5px,#52ff00 92.5px,#0eff0d 106.5px,#00ff53 114.5px,#00f7cd 126px)"></b><b style="left:578px;background:linear-gradient(#000080 0px,#00008c 27.5px,#0000be 36.5px,#0009ee 41.5px,#0037fd 44.5px,#00e3f1 51.5px,#00fdcc 54.5px,#04ff1b 65.5px,#24ff01 70.5px,#54ff00 78.5px,#53ff00 98.5px,#0dff0a 112.5px,#00ff50 120.5px,#00ff87 126px)"></b><b style="left:580px;background:linear-gradient(#000080 0px,#00008c 30.5px,#0000bb 39.5px,#000df3 45.5px,#0041fe 48.5px,#00dcf7 54.5px,#00fcd6 57.5px,#04ff18 69.5px,#25ff01 74.5px,#54ff00 82.5px,#54ff00 103.5px,#12ff04 116.5px,#00ff2a 122.5px,#00ff4a 126px)"></b><b style="left:582px;background:linear-gradient(#000080 0px,#00008c 33.5px,#0000c3 43.5px,#0009f3 48.5px,#003bff 51.5px,#00d7fa 57.5px,#00fbdd 60.5px,#04ff14 73.5px,#2eff00 79.5px,#55ff00 87.5px,#53ff00 108.5px,#05ff0c 123.5px,#01ff1a 126px)"></b><b style="left:584px;background:linear-gradient(#000080 0px,#00008a 35.5px,#0000bd 45.5px,#0009f5 51.5px,#003eff 54.5px,#00d8fb 60.5px,#00fcdf 63.5px,#04ff13 77.5px,#32ff00 84.5px,#55ff00 93.5px,#4eff00 112.5px,#0bff03 126px)"></b><b style="left:586px;background:linear-gradient(#000080 0px,#00008a 37.5px,#0000bc 47.5px,#0005f4 53.5px,#0033ff 56.5px,#00ddfb 63.5px,#00fde0 66.5px,#04ff14 81.5px,#2bff00 88.5px,#51ff00 99.5px,#49ff00 114.5px,#19ff00 126px)"></b><b style="left:588px;background:linear-gradient(#000080 0px,#00008b 38.5px,#0000c0 49.5px,#000bfc 56.5px,#00e3fb 66.5px,#00fde1 69.5px,#03ff1c 85.5px,#1eff01 92.5px,#45ff00 105.5px,#32ff00 120.5px,#20ff00 126px)"></b><b style="left:590px;background:linear-gradient(#000080 0px,#00008a 37.5px,#0000c3 50.5px,#0003fa 57.5px,#006bff 63.5px,#00e3fb 69.5px,#00fed9 73.5px,#02ff23 90.5px,#1aff02 99.5px,#31ff00 114.5px,#1eff00 126px)"></b><b style="left:592px;background:linear-gradient(#000080 0px,#00008b 35.5px,#0000ca 51.5px,#0007fd 59.5px,#00e8f8 73.5px,#00fed0 78.5px,#01ff2b 96.5px,#0eff05 106.5px,#15ff00 124.5px,#14ff00 126px)"></b><b style="left:594px;background:linear-gradient(#000080 0px,#00008b 32.5px,#0000ec 57.5px,#0009fe 61.5px,#00aaff 73.5px,#00e9f5 78.5px,#00fec1 85.5px,#00ff38 103.5px,#06ff0a 117.5px,#06ff04 126px)"></b><b style="left:596px;background:linear-gradient(#000080 0px,#00008b 29.5px,#0006fb 63.5px,#0057ff 72.5px,#00e5f4 84.5px,#00fec1 92.5px,#00ff46 111.5px,#00ff1b 126px)"></b><b style="left:598px;background:linear-gradient(#000080 0px,#00008c 26.5px,#0000d8 50.5px,#0008f6 68.5px,#0045fe 77.5px,#00dff4 91.5px,#00fdd0 98.5px,#00ff55 119.5px,#00ff3e 126px)"></b><b style="left:600px;background:linear-gradient(#000080 0px,#00008d 23.5px,#0000d7 44.5px,#0002e5 72.5px,#001ff8 81.5px,#0085ff 91.5px,#00e4f1 100.5px,#00fec6 108.5px,#00ff66 126px)"></b><b style="left:602px;background:linear-gradient(#000080 0px,#00008d 20.5px,#0000d9 39.5px,#0000cb 57.5px,#0000c0 73.5px,#000eec 87.5px,#0044fc 94.5px,#00def6 107.5px,#00fdd4 114.5px,#00ff8e 126px)"></b><b style="left:604px;background:linear-gradient(#000080 0px,#00008f 17.5px,#0000db 34.5px,#0000cf 48.5px,#00009c 69.5px,#0000ae 84.5px,#000eeb 96.5px,#004efe 103.5px,#00dff8 114.5px,#00fedb 120.5px,#00ffb7 126px)"></b><b style="left:606px;background:linear-gradient(#000080 0px,#000091 14.5px,#0000dc 29.5px,#0000d1 41.5px,#000094 61.5px,#00009e 82.5px,#0000a5 92.5px,#000be9 103.5px,#0042fd 109.5px,#00e2fa 120.5px,#00fedf 126px)"></b><b style="left:608px;background:linear-gradient(#000080 0px,#000092 11.5px,#0000de 25.5px,#0000ca 36.5px,#000095 51.5px,#0000ad 62.5px,#0000cb 77.5px,#0000a6 92.5px,#00009f 99.5px,#000eef 110.5px,#0047fe 115.5px,#00e8fa 126px)"></b><b style="left:610px;background:linear-gradient(#000080 0px,#000099 9.5px,#0000db 20.5px,#0000ce 28.5px,#00009a 41.5px,#0000ab 51.5px,#0005eb 71.5px,#0003e6 86.5px,#000099 103.5px,#0000bd 109.5px,#000df2 115.5px,#0052ff 120.5px,#00afff 126px)"></b><b style="left:612px;background:linear-gradient(#000081 0px,#0000ab 9.5px,#0000d3 17.5px,#0000a2 32.5px,#0000bb 43.5px,#0014f8 64.5px,#002cfe 79.5px,#0004ef 93.5px,#000095 108.5px,#0000c7 114.5px,#000df6 119.5px,#0061ff 124.5px,#0075ff 126px)"></b><b style="left:614px;background:linear-gradient(#000082 0px,#0000bc 13.5px,#0001ad 24.5px,#000ff2 47.5px,#0060ff 74.5px,#0050ff 85.5px,#0004f2 98.5px,#000091 111.5px,#0000b0 115.5px,#0005f3 121.5px,#002fff 124.5px,#0045ff 126px)"></b><b style="left:616px;background:linear-gradient(#000082 0px,#0009c2 17.5px,#0023f3 29.5px,#0046ff 48.5px,#0089ff 70.5px,#007fff 83.5px,#003fff 94.5px,#0000f1 102.5px,#00008d 113.5px,#0000a1 116.5px,#0003f6 123.5px,#001fff 126px)"></b><b style="left:618px;background:linear-gradient(#000082 0px,#0000a2 6.5px,#000fd6 11.5px,#0058f8 18.5px,#006bfe 26.5px,#0067ff 41.5px,#00a9ff 67.5px,#009bff 82.5px,#0060ff 93.5px,#0000f9 103.5px,#000087 115.5px,#0007fe 126px)"></b><b style="left:620px;background:linear-gradient(#000085 0px,#0000bf 5.5px,#0001e3 7.5px,#004cfc 11.5px,#0085fe 15.5px,#008bff 21.5px,#0071ff 34.5px,#00bbff 63.5px,#00adff 80.5px,#0071ff 92.5px,#0000f8 104.5px,#000085 116.5px,#0000fb 126px)"></b><b style="left:622px;background:linear-gradient(#000088 0px,#0002e9 7.5px,#003af0 12.5px,#0040fd 31.5px,#00adff 52.5px,#00bfff 68.5px,#0099ff 84.5px,#004bff 96.5px,#0001fd 103.5px,#000095 114.5px,#000087 116.5px,#0001fc 126px)"></b><b style="left:624px;background:linear-gradient(#000087 0px,#0005cc 7.5px,#000dd0 14.5px,#0004bc 23.5px,#0016f6 34.5px,#008bff 48.5px,#00aeff 61.5px,#0097ff 79.5px,#0057ff 92.5px,#0002f8 102.5px,#000089 115.5px,#0002f8 124.5px,#000dff 126px)"></b><b style="left:626px;background:linear-gradient(#00008c 0px,#0004e1 5.5px,#0045f4 10.5px,#0039f4 14.5px,#0001dd 20.5px,#0000a0 27.5px,#0000a8 30.5px,#000cf6 38.5px,#0069ff 49.5px,#008aff 61.5px,#0077ff 78.5px,#0033ff 92.5px,#0002f1 100.5px,#00008e 113.5px,#0000d8 120.5px,#0007f9 123.5px,#002aff 126px)"></b><b style="left:628px;background:linear-gradient(#000089 0px,#0007d4 6.5px,#002de3 11.5px,#0018f3 17.5px,#0000e2 22.5px,#00008a 30.5px,#0003ec 40.5px,#003bfe 51.5px,#0055ff 65.5px,#0038ff 82.5px,#0002ec 96.5px,#000092 110.5px,#0000ac 114.5px,#000af7 121.5px,#0055ff 126px)"></b><b style="left:630px;background:linear-gradient(#000088 0px,#0001c5 7.5px,#0002bd 17.5px,#0000b7 24.5px,#000089 30.5px,#0001de 43.5px,#0018f8 62.5px,#0003e8 88.5px,#000096 106.5px,#0000b1 111.5px,#000cf5 118.5px,#004bff 122.5px,#008bff 126px)"></b><b style="left:632px;background:linear-gradient(#000085 0px,#0000ce 9.5px,#0000c3 14.5px,#0000a5 22.5px,#0000a3 32.5px,#0001d9 67.5px,#0000c6 86.5px,#000099 101.5px,#0000c1 108.5px,#000df2 114.5px,#0041ff 118.5px,#00c9fe 126px)"></b><b style="left:634px;background:linear-gradient(#000082 0px,#0000cc 21.5px,#0000b4 31.5px,#000099 41.5px,#0000a7 79.5px,#00009b 94.5px,#0005df 106.5px,#0020fa 111.5px,#00edf5 124.5px,#00f7f0 126px)"></b><b style="left:636px;background:linear-gradient(#000082 0px,#000096 10.5px,#000090 13.5px,#0000e7 20.5px,#0000e7 25.5px,#000095 35.5px,#0000a7 54.5px,#0000a4 82.5px,#0001cd 95.5px,#0017f3 103.5px,#0055fe 109.5px,#00e6f6 119.5px,#00fed2 124.5px,#00ffc8 126px)"></b><b style="left:638px;background:linear-gradient(#000080 0px,#0000a1 13.5px,#0000e5 18.5px,#0000ec 22.5px,#00009d 32.5px,#0000d1 46.5px,#0001ce 80.5px,#0017f2 94.5px,#004cfe 101.5px,#00e9f2 114.5px,#00ffbf 121.5px,#00ff9a 126px)"></b><b style="left:640px;background:linear-gradient(#000080 0px,#000091 6.5px,#0001ec 15.5px,#0000d1 20.5px,#0002b4 25.5px,#0002bc 30.5px,#0005ee 42.5px,#0016f5 80.5px,#0042fd 90.5px,#00e6f3 107.5px,#00ffc0 115.5px,#00ff6a 126px)"></b><b style="left:642px;background:linear-gradient(#000082 0px,#00009f 4.5px,#0013ea 9.5px,#001bf4 12.5px,#0004d7 16.5px,#0007c5 18.5px,#0018c8 21.5px,#002cec 28.5px,#0022fe 44.5px,#0048fe 76.5px,#008bff 88.5px,#00f2ec 101.5px,#00ff69 119.5px,#00ff38 126px)"></b><b style="left:644px;background:linear-gradient(#00008a 0px,#0005ea 6.5px,#001ee6 10.5px,#0021d6 11.5px,#0033d2 14.5px,#0066d7 17.5px,#009ff0 21.5px,#00a6fe 25.5px,#0047ff 36.5px,#003eff 45.5px,#008aff 75.5px,#00f1ef 92.5px,#00ff88 108.5px,#07ff0e 126px)"></b><b style="left:646px;background:linear-gradient(#000090 0px,#000dbd 3.5px,#002ed9 5.5px,#0032d9 6.5px,#0075bc 8.5px,#0086b1 10.5px,#00a29f 11.5px,#00d0a2 13.5px,#00eaad 17.5px,#00f2e9 22.5px,#00d3ff 25.5px,#006aff 31.5px,#003dff 37.5px,#0046ff 46.5px,#00c7ff 75.5px,#00f9e7 86.5px,#00ff38 111.5px,#12ff05 121.5px,#23ff01 126px)"></b><b style="left:648px;background:linear-gradient(#0000a3 0px,#0000c9 1.5px,#002ede 2.5px,#0079e9 3.5px,#00caba 5.5px,#00db74 7.5px,#01f054 9.5px,#00f354 11.5px,#00db91 15.5px,#00ceca 18.5px,#0084ef 23.5px,#0039f0 28.5px,#0016f7 36.5px,#002bff 44.5px,#00f6f6 76.5px,#00ff8c 93.5px,#07ff10 110.5px,#40ff00 124.5px,#43ff00 126px)"></b><b style="left:650px;background:linear-gradient(#0000a9 0px,#0001d2 1.5px,#003be3 2.5px,#0088e4 3.5px,#00aacc 4.5px,#02ad75 7.5px,#03ad80 9.5px,#02a4b5 12.5px,#0063e0 16.5px,#0048e4 20.5px,#0008cb 26.5px,#0002b8 31.5px,#000dfc 44.5px,#00fbf7 72.5px,#00ff5c 93.5px,#0aff0b 104.5px,#54ff00 123.5px,#57ff00 126px)"></b><b style="left:652px;background:linear-gradient(#0000b3 0px,#000de0 1.5px,#0064f0 2.5px,#00b1dc 3.5px,#00d1b0 4.5px,#00d377 5.5px,#1dd846 7.5px,#26d947 11.5px,#00d466 15.5px,#00c7da 20.5px,#00aaf5 22.5px,#0026ee 26.5px,#0002dc 28.5px,#00009a 33.5px,#0000a3 36.5px,#0005f9 46.5px,#00e8ff 67.5px,#00fef5 70.5px,#06ff0f 97.5px,#47ff00 110.5px,#60ff00 126px)"></b><b style="left:654px;background:linear-gradient(#0000a4 0px,#0006c8 1.5px,#007ce0 3.5px,#009ea6 5.5px,#13d57e 7.5px,#26d951 10.5px,#00dd60 15.5px,#00dce8 21.5px,#00affd 23.5px,#0021f9 27.5px,#0005f6 28.5px,#00008c 35.5px,#000088 36.5px,#0000ea 46.5px,#0010ff 50.5px,#00fefa 68.5px,#08ff09 93.5px,#53ff00 107.5px,#69ff00 126px)"></b><b style="left:656px;background:linear-gradient(#00009c 0px,#0003df 2.5px,#0063fa 4.5px,#0093f6 5.5px,#02adba 8.5px,#02ada9 9.5px,#029fbc 11.5px,#0175d5 13.5px,#016cdb 14.5px,#0072d0 16.5px,#0065c9 18.5px,#0043e0 22.5px,#0007d1 27.5px,#00008a 36.5px,#0008fe 51.5px,#00ceff 64.5px,#00fefb 67.5px,#07ff09 89.5px,#55ff00 102.5px,#70ff00 126px)"></b><b style="left:658px;background:linear-gradient(#000093 0px,#0000c7 2.5px,#001edd 3.5px,#004eed 4.5px,#0093f0 5.5px,#00cbd2 7.5px,#00e3ad 9.5px,#00eaaa 11.5px,#00d3d6 15.5px,#0095e9 18.5px,#0042e7 21.5px,#000fd5 24.5px,#0000a9 30.5px,#0000a1 36.5px,#0005ff 52.5px,#00afff 62.5px,#00fcfc 66.5px,#06ff07 86.5px,#54ff00 97.5px,#74ff00 122.5px,#73ff00 126px)"></b><b style="left:660px;background:linear-gradient(#000088 0px,#0005b7 4.5px,#0030cb 7.5px,#008ccf 11.5px,#00cfdb 15.5px,#00dbf6 18.5px,#00b7fe 20.5px,#0031f8 25.5px,#0002ea 28.5px,#0000bd 35.5px,#0000c9 44.5px,#0000fd 52.5px,#008fff 60.5px,#00f9fc 65.5px,#03ff0a 83.5px,#55ff00 94.5px,#77ff00 117.5px,#72ff00 126px)"></b><b style="left:662px;background:linear-gradient(#000086 0px,#0003cf 8.5px,#0026ca 14.5px,#0056e8 18.5px,#0053f7 22.5px,#0000f3 29.5px,#0000c6 37.5px,#0000cf 45.5px,#0001fe 52.5px,#0088ff 59.5px,#00f8fb 64.5px,#04ff08 81.5px,#54ff00 91.5px,#76ff00 113.5px,#6cff00 126px)"></b><b style="left:664px;background:linear-gradient(#000082 0px,#0000a5 5.5px,#0000dc 10.5px,#0000db 13.5px,#0004bc 18.5px,#0007d1 25.5px,#0000cc 33.5px,#0000c6 42.5px,#0002fb 51.5px,#0047ff 55.5px,#00fbf6 63.5px,#04ff08 79.5px,#55ff00 89.5px,#73ff00 111.5px,#62ff00 126px)"></b><b style="left:666px;background:linear-gradient(#000080 0px,#000099 7.5px,#0000dd 14.5px,#0000d5 18.5px,#0000a6 25.5px,#0000c0 41.5px,#0006fb 50.5px,#0069ff 55.5px,#00f5f7 61.5px,#00ff71 70.5px,#04ff08 77.5px,#55ff00 87.5px,#6cff00 108.5px,#55ff00 126px)"></b><b style="left:668px;background:linear-gradient(#000080 0px,#00008e 9.5px,#0000d4 18.5px,#0000c9 23.5px,#000092 32.5px,#0000aa 38.5px,#0005f9 48.5px,#0050ff 52.5px,#00e4fc 58.5px,#00ffdc 61.5px,#04ff09 75.5px,#56ff00 86.5px,#61ff00 108.5px,#40ff00 123.5px,#37ff01 126px)"></b><b style="left:670px;background:linear-gradient(#000080 0px,#00008c 12.5px,#0000c7 22.5px,#0000af 29.5px,#000087 35.5px,#0007f7 46.5px,#0057ff 50.5px,#00eaf8 56.5px,#00ffd5 59.5px,#04ff08 73.5px,#55ff00 85.5px,#54ff00 107.5px,#12ff0b 124.5px,#0fff10 126px)"></b><b style="left:672px;background:linear-gradient(#000080 0px,#00008d 16.5px,#0000b0 26.5px,#00008a 34.5px,#0005ee 43.5px,#0033ff 46.5px,#00e5f8 53.5px,#00fed7 56.5px,#02ff0e 70.5px,#27ff00 76.5px,#51ff00 86.5px,#3fff00 103.5px,#0eff14 116.5px,#01ff50 126px)"></b><b style="left:674px;background:linear-gradient(#000080 0px,#00009b 33.5px,#0007e9 40.5px,#0032fd 43.5px,#00e4f5 50.5px,#00fed4 53.5px,#01ff12 67.5px,#18ff00 72.5px,#3eff00 83.5px,#28ff02 97.5px,#07ff20 108.5px,#00fcaa 126px)"></b><b style="left:676px;background:linear-gradient(#000080 0px,#00009e 25.5px,#0001c7 33.5px,#001bf4 38.5px,#0071ff 42.5px,#00d9f8 46.5px,#00fada 49.5px,#00ff1d 63.5px,#0cff00 68.5px,#27ff00 79.5px,#0cff14 94.5px,#00ff6c 107.5px,#00edd0 119.5px,#00c1ee 126px)"></b><b style="left:678px;background:linear-gradient(#000080 0px,#000099 17.5px,#0009e7 31.5px,#0036fa 35.5px,#00d5f8 42.5px,#00f8dc 45.5px,#00ff2e 58.5px,#04ff02 64.5px,#12ff03 76.5px,#04ff28 87.5px,#00f3bc 105.5px,#00d1e2 111.5px,#0079f3 119.5px,#0037e6 126px)"></b><b style="left:680px;background:linear-gradient(#000080 0px,#000099 14.5px,#0006eb 26.5px,#0036fc 30.5px,#00daf4 38.5px,#00fdcc 42.5px,#00ff31 54.5px,#01ff02 61.5px,#04ff12 73.5px,#00ff5f 84.5px,#00efc4 95.5px,#00c1e8 101.5px,#004fef 110.5px,#0016d4 117.5px,#0007c2 122.5px,#0006c3 126px)"></b><b style="left:682px;background:linear-gradient(#000080 0px,#00009f 13.5px,#0006f0 23.5px,#0031fd 26.5px,#00d5fa 33.5px,#00fbd4 37.5px,#00ff3c 49.5px,#00ff0b 57.5px,#01ff17 65.5px,#00ff6b 76.5px,#00eec5 85.5px,#00c3e7 90.5px,#0062f0 97.5px,#0019d7 104.5px,#000dc4 108.5px,#0013c8 115.5px,#0032dc 121.5px,#004fed 126px)"></b><b style="left:684px;background:linear-gradient(#000081 0px,#0000a0 11.5px,#0003ee 20.5px,#002dfe 23.5px,#00e1f9 30.5px,#00feca 34.5px,#00ff49 44.5px,#00ff1c 51.5px,#00ff25 59.5px,#00ff79 69.5px,#00e8d0 77.5px,#009df0 83.5px,#004de9 88.5px,#0019d5 93.5px,#000fc7 96.5px,#0014c4 101.5px,#002fdb 106.5px,#007dec 114.5px,#00c6df 122.5px,#00dcd4 126px)"></b><b style="left:686px;background:linear-gradient(#000081 0px,#0000a4 10.5px,#0003f1 18.5px,#0035ff 21.5px,#00ddfd 27.5px,#00fedd 30.5px,#00ff62 39.5px,#00ff30 46.5px,#00ff38 53.5px,#00fd85 62.5px,#00e5d4 69.5px,#009dee 74.5px,#003adf 80.5px,#0017cb 84.5px,#0011cb 88.5px,#001dd1 91.5px,#007de9 100.5px,#00c8d7 107.5px,#00e9bc 112.5px,#02fe6b 124.5px,#02fe65 126px)"></b><b style="left:688px;background:linear-gradient(#000081 0px,#0000a7 9.5px,#0007f9 17.5px,#0068ff 21.5px,#00f3fa 26.5px,#00ffa5 32.5px,#00ff5e 39.5px,#00ff4f 45.5px,#00ff76 52.5px,#00ecbf 59.5px,#00d1db 62.5px,#007eec 67.5px,#0020da 73.5px,#0013ce 76.5px,#001ecd 80.5px,#006de6 87.5px,#00a9e0 91.5px,#00e4bc 97.5px,#05fd65 107.5px,#16ff25 118.5px,#24ff0e 126px)"></b><b style="left:690px;background:linear-gradient(#000081 0px,#0000a6 8.5px,#0006fd 16.5px,#00f8ff 25.5px,#00ff98 34.5px,#00ff83 40.5px,#00faa6 47.5px,#00d2d7 53.5px,#0085ea 58.5px,#0034dd 63.5px,#001acf 66.5px,#0021ca 70.5px,#0065e3 76.5px,#00aad9 80.5px,#01e3b5 85.5px,#08fc5f 93.5px,#1cff24 101.5px,#41ff05 112.5px,#63ff00 126px)"></b><b style="left:692px;background:linear-gradient(#000082 0px,#0000aa 8.5px,#0000f9 15.5px,#0040ff 18.5px,#00e9ff 25.5px,#00f9d3 31.5px,#00edc9 38.5px,#00d9d7 42.5px,#0090e9 48.5px,#005be3 51.5px,#0022d0 56.5px,#0028d1 61.5px,#007fde 67.5px,#00add0 70.5px,#02e1af 74.5px,#0dfd4d 82.5px,#34ff10 91.5px,#7fff00 110.5px,#9fff00 126px)"></b><b style="left:694px;background:linear-gradient(#000082 0px,#0000a9 8.5px,#0006fa 16.5px,#0092fe 24.5px,#00b1fa 28.5px,#009df1 34.5px,#0025d3 46.5px,#002cd1 51.5px,#0084d9 57.5px,#02dcae 63.5px,#0ffb50 70.5px,#38ff11 78.5px,#87ff00 92.5px,#cff700 113.5px,#e2f400 126px)"></b><b style="left:696px;background:linear-gradient(#000081 0px,#0000a9 9.5px,#0007ea 18.5px,#0031e8 26.5px,#0020d2 36.5px,#0036d5 41.5px,#0078d7 46.5px,#02b5be 50.5px,#03dd9f 53.5px,#18fb44 60.5px,#3cff13 66.5px,#91fd00 78.5px,#e2e400 95.5px,#fbb600 115.5px,#fdb000 126px)"></b><b style="left:698px;background:linear-gradient(#000081 0px,#0008c7 25.5px,#0028d5 30.5px,#006eda 35.5px,#01a4ca 38.5px,#06e093 43.5px,#1cfb43 49.5px,#3eff16 54.5px,#92fc01 64.5px,#e0db00 77.5px,#fb9600 90.5px,#fd5800 106.5px,#fe4f00 126px)"></b><b style="left:700px;background:linear-gradient(#000080 0px,#00009f 13.5px,#000fc9 19.5px,#0031da 22.5px,#0079e5 26.5px,#00b0d0 29.5px,#03e397 33.5px,#1ffb3d 39.5px,#3eff16 43.5px,#99fc01 52.5px,#dada00 61.5px,#f88f00 71.5px,#f53000 86.5px,#ea0c00 105.5px,#f30d00 126px)"></b><b style="left:702px;background:linear-gradient(#000081 0px,#0000a0 8.5px,#000bdb 14.5px,#003ef2 17.5px,#00adec 21.5px,#00e3bf 24.5px,#14fd40 30.5px,#3cff13 34.5px,#9efd00 42.5px,#ddd700 49.5px,#f88300 57.5px,#f23400 66.5px,#dd0d00 76.5px,#c00000 101.5px,#d80000 126px)"></b><b style="left:704px;background:linear-gradient(#000082 0px,#0000a4 6.5px,#0007e7 11.5px,#0032f9 13.5px,#00a5f9 16.5px,#00dde0 18.5px,#01fc76 22.5px,#14ff2c 25.5px,#3cff0b 28.5px,#ccf600 38.5px,#f3bd00 43.5px,#fa4100 51.5px,#e31000 58.5px,#a80000 77.5px,#9e0000 101.5px,#c20000 126px)"></b><b style="left:706px;background:linear-gradient(#000083 0px,#0000a7 5.5px,#0004ea 9.5px,#0016f7 10.5px,#0067fe 12.5px,#00c9fa 14.5px,#00f5d2 16.5px,#04ff2b 21.5px,#38ff04 24.5px,#eaf500 35.5px,#ff6c00 42.5px,#fd2000 46.5px,#e30400 51.5px,#9c0000 67.5px,#870000 90.5px,#b40000 123.5px,#b80000 126px)"></b><b style="left:708px;background:linear-gradient(#000084 0px,#0000b7 5.5px,#0003f3 8.5px,#0020fd 9.5px,#00eafa 13.5px,#00fec1 15.5px,#01ff0e 20.5px,#4aff00 23.5px,#afff00 30.5px,#f7fb00 34.5px,#ff1700 45.5px,#e30200 50.5px,#a10000 65.5px,#8b0000 88.5px,#b60000 122.5px,#bc0000 126px)"></b><b style="left:710px;background:linear-gradient(#000086 0px,#0000b1 4.5px,#0000ed 7.5px,#000dfe 8.5px,#00d1ff 12.5px,#00f6f6 13.5px,#01ff1b 20.5px,#39ff03 23.5px,#defa00 35.5px,#f7b800 40.5px,#fc3f00 48.5px,#e30f00 56.5px,#af0000 78.5px,#b30000 107.5px,#cd0000 126px)"></b><b style="left:712px;background:linear-gradient(#000085 0px,#0000b8 5.5px,#0004ec 8.5px,#003af9 10.5px,#00c9f4 14.5px,#00eebf 17.5px,#0bfd3a 23.5px,#34ff13 27.5px,#9efe00 37.5px,#d8e000 44.5px,#f69000 53.5px,#f33900 65.5px,#e00e00 80.5px,#dc0200 112.5px,#e80400 126px)"></b><b style="left:714px;background:linear-gradient(#000082 0px,#0000ad 7.5px,#000ed4 11.5px,#0075ea 17.5px,#00a7da 20.5px,#02dca5 25.5px,#1efa41 33.5px,#3efe19 38.5px,#99fb02 49.5px,#ddd300 61.5px,#f98700 75.5px,#f93a00 96.5px,#fb2900 121.5px,#fc2b00 126px)"></b><b style="left:716px;background:linear-gradient(#000082 0px,#0009ca 16.5px,#0031d5 23.5px,#0089cf 31.5px,#08d993 39.5px,#29fb37 48.5px,#44fe16 53.5px,#9bfc00 66.5px,#e0dd00 82.5px,#faa600 101.5px,#ff8400 126px)"></b><b style="left:718px;background:linear-gradient(#000083 0px,#0000b5 7.5px,#0007e7 12.5px,#0048ed 19.5px,#004ce2 26.5px,#0033d7 32.5px,#0046d2 39.5px,#0188ce 45.5px,#07dd93 53.5px,#1dfb41 61.5px,#3fff13 68.5px,#8afe00 82.5px,#def000 107.5px,#f5dd00 126px)"></b><b style="left:720px;background:linear-gradient(#000083 0px,#0000b3 6.5px,#0006fc 11.5px,#00beff 18.5px,#00d9ef 21.5px,#00d2d7 28.5px,#008fe0 37.5px,#0068e0 40.5px,#0034d7 46.5px,#0041d3 52.5px,#0088d4 58.5px,#03df9c 66.5px,#12fb49 74.5px,#37ff12 83.5px,#81ff00 101.5px,#c0fd00 126px)"></b><b style="left:722px;background:linear-gradient(#000083 0px,#0000ae 6.5px,#0004f8 11.5px,#005eff 14.5px,#00e8ff 18.5px,#00fbf8 19.5px,#00fe9d 26.5px,#00fc83 32.5px,#00e6ac 41.5px,#00c7ca 45.5px,#008ee0 50.5px,#0060e0 53.5px,#002dd5 58.5px,#002bd3 63.5px,#007cdb 70.5px,#02ddb3 78.5px,#0bfb5b 87.5px,#28ff13 98.5px,#6eff00 118.5px,#7fff00 126px)"></b><b style="left:724px;background:linear-gradient(#000082 0px,#0000ab 7.5px,#0004ef 12.5px,#002efd 14.5px,#00defd 19.5px,#00fbe4 21.5px,#00ff64 29.5px,#00ff35 35.5px,#02ff3c 41.5px,#00fa80 49.5px,#00cfca 56.5px,#008de3 61.5px,#005ce1 64.5px,#0023d0 69.5px,#0026d2 75.5px,#0072e1 82.5px,#00a9d8 86.5px,#01e2b6 92.5px,#07fd5e 102.5px,#1cff1f 112.5px,#46ff02 126px)"></b><b style="left:726px;background:linear-gradient(#000081 0px,#0000a4 8.5px,#0006ea 14.5px,#0026fb 16.5px,#00ccfb 21.5px,#00f4e6 23.5px,#00ff38 33.5px,#02ff06 38.5px,#0dff17 48.5px,#03ff4c 55.5px,#00ebac 63.5px,#00d6cc 66.5px,#007fe7 72.5px,#0022d7 79.5px,#001eca 86.5px,#0065e7 94.5px,#00a9e2 99.5px,#00e6bd 106.5px,#04fe61 117.5px,#0eff2a 126px)"></b><b style="left:728px;background:linear-gradient(#000081 0px,#00009a 9.5px,#0009eb 17.5px,#0046fd 20.5px,#00def1 25.5px,#00f8d5 27.5px,#00ff1e 37.5px,#0fff01 41.5px,#28ff01 49.5px,#0eff1a 59.5px,#01fd68 67.5px,#00e2c9 75.5px,#0096ea 81.5px,#004be0 86.5px,#001ace 91.5px,#0013cb 96.5px,#002ada 101.5px,#0077eb 108.5px,#00bee1 114.5px,#00ecbe 120.5px,#00fc97 126px)"></b><b style="left:730px;background:linear-gradient(#000080 0px,#000096 11.5px,#0001d1 18.5px,#0014f1 21.5px,#0059fe 24.5px,#00d4f4 28.5px,#00facb 31.5px,#03ff16 41.5px,#21ff00 46.5px,#3cff00 54.5px,#15ff0d 66.5px,#02ff4f 74.5px,#00edb8 83.5px,#00cddb 87.5px,#008aed 92.5px,#004de8 96.5px,#0019d4 101.5px,#000ec6 104.5px,#0015cb 110.5px,#003be1 115.5px,#0083f0 121.5px,#00b8ec 126px)"></b><b style="left:732px;background:linear-gradient(#000080 0px,#000096 14.5px,#0002d8 22.5px,#001cf5 25.5px,#0087fe 29.5px,#00d9f1 32.5px,#00fbc7 35.5px,#03ff23 44.5px,#1eff01 49.5px,#49ff00 58.5px,#36ff01 68.5px,#0eff19 77.5px,#00fd7b 87.5px,#00e5d3 95.5px,#009af1 101.5px,#003fe6 107.5px,#0011ce 112.5px,#0006c2 115.5px,#000ec5 120.5px,#002ddf 126px)"></b><b style="left:734px;background:linear-gradient(#000080 0px,#000090 16.5px,#0000c8 24.5px,#0013f1 28.5px,#0053fe 31.5px,#00ddef 36.5px,#00fcc5 39.5px,#05ff18 49.5px,#26ff01 54.5px,#52ff00 63.5px,#3fff00 75.5px,#10ff14 85.5px,#01ff59 93.5px,#00eec9 103.5px,#00b2f2 109.5px,#003fec 116.5px,#000fcf 121.5px,#0004bc 126px)"></b><b style="left:736px;background:linear-gradient(#000080 0px,#00008f 19.5px,#0000c4 27.5px,#000bee 31.5px,#0042fd 34.5px,#00cef7 39.5px,#00f7d5 42.5px,#04ff1b 53.5px,#24ff01 58.5px,#53ff00 66.5px,#4aff00 81.5px,#10ff11 93.5px,#01ff56 101.5px,#00f2c8 111.5px,#00d3e9 115.5px,#0097f8 119.5px,#0035eb 126px)"></b><b style="left:738px;background:linear-gradient(#000080 0px,#00008f 22.5px,#0000c0 30.5px,#0010f1 35.5px,#0049fe 38.5px,#00d3f7 43.5px,#00f8d5 46.5px,#04ff1e 57.5px,#24ff01 62.5px,#54ff00 70.5px,#51ff00 87.5px,#11ff0c 100.5px,#01ff46 107.5px,#00f3cf 119.5px,#00c7f4 124.5px,#00b7f7 126px)"></b><b style="left:740px;background:linear-gradient(#000080 0px,#00008e 25.5px,#0000c5 34.5px,#0009ee 38.5px,#003afd 41.5px,#00d8f6 47.5px,#00fad4 50.5px,#04ff1d 61.5px,#25ff01 66.5px,#53ff00 73.5px,#56ff00 92.5px,#2aff01 102.5px,#05ff18 109.5px,#00f9ca 126px)"></b><b style="left:742px;background:linear-gradient(#000080 0px,#00008b 27.5px,#0000ba 36.5px,#000ef2 42.5px,#0043fe 45.5px,#00dff4 51.5px,#00fdd0 54.5px,#04ff1a 65.5px,#27ff01 70.5px,#54ff00 77.5px,#58ff00 96.5px,#3aff00 105.5px,#05ff13 114.5px,#00ff87 126px)"></b><b style="left:744px;background:linear-gradient(#000080 0px,#00008b 30.5px,#0000b8 39.5px,#0009f2 45.5px,#003cfe 48.5px,#00dcf9 54.5px,#00fdd7 57.5px,#04ff15 69.5px,#28ff00 74.5px,#55ff00 82.5px,#56ff00 102.5px,#2fff00 111.5px,#03ff12 119.5px,#00ff4e 126px)"></b><b style="left:746px;background:linear-gradient(#000080 0px,#00008b 33.5px,#0000ba 42.5px,#0008f4 48.5px,#003fff 51.5px,#00ddfa 57.5px,#00fdda 60.5px,#05ff13 73.5px,#36ff00 80.5px,#57ff00 89.5px,#50ff00 108.5px,#05ff0a 122.5px,#00ff21 126px)"></b><b style="left:748px;background:linear-gradient(#000080 0px,#00008b 35.5px,#0000c1 45.5px,#000dfa 51.5px,#007fff 56.5px,#00e3fa 60.5px,#00feda 63.5px,#03ff1e 76.5px,#1bff02 81.5px,#50ff00 92.5px,#4fff00 109.5px,#04ff06 126px)"></b><b style="left:750px;background:linear-gradient(#000080 0px,#00008c 36.5px,#0000be 46.5px,#000bfc 53.5px,#00e8f9 63.5px,#00ffcd 67.5px,#04ff1b 81.5px,#22ff01 88.5px,#49ff00 100.5px,#3dff00 113.5px,#0dff00 126px)"></b><b style="left:752px;background:linear-gradient(#000080 0px,#00008b 35.5px,#0000c2 47.5px,#0003fa 54.5px,#006fff 60.5px,#00e8f9 66.5px,#00fed3 70.5px,#03ff22 86.5px,#1aff03 94.5px,#35ff00 109.5px,#11ff00 126px)"></b><b style="left:754px;background:linear-gradient(#000080 0px,#00008c 33.5px,#0000d0 49.5px,#0007fd 56.5px,#00eaf6 70.5px,#00ffc1 76.5px,#01ff2b 92.5px,#10ff05 102.5px,#18ff00 119.5px,#0dff00 126px)"></b><b style="left:756px;background:linear-gradient(#000080 0px,#00008c 30.5px,#0003fb 57.5px,#006eff 66.5px,#00e1f8 74.5px,#00fdd0 80.5px,#00ff38 99.5px,#07ff0c 112.5px,#04ff04 126px)"></b><b style="left:758px;background:linear-gradient(#000080 0px,#00008d 27.5px,#0006fa 60.5px,#0053ff 69.5px,#00e3f3 81.5px,#00fdc7 88.5px,#00ff47 107.5px,#00ff19 123.5px,#00ff17 126px)"></b><b style="left:760px;background:linear-gradient(#000080 0px,#00008e 24.5px,#0000d8 45.5px,#0009f5 66.5px,#003dfd 74.5px,#00dbf5 88.5px,#00fcd0 95.5px,#00ff58 115.5px,#00ff35 126px)"></b><b style="left:762px;background:linear-gradient(#000080 0px,#00008b 20.5px,#0000d8 40.5px,#0001dc 69.5px,#0019f3 78.5px,#0061fe 86.5px,#00e0f2 97.5px,#00fdce 104.5px,#00ff59 126px)"></b><b style="left:764px;background:linear-gradient(#000080 0px,#00008d 17.5px,#0000da 35.5px,#0000ce 50.5px,#0000b2 68.5px,#0005da 82.5px,#0024f6 89.5px,#009efe 99.5px,#00e8f0 106.5px,#00ffc1 114.5px,#00ff7d 126px)"></b><b style="left:766px;background:linear-gradient(#000080 0px,#000092 15.5px,#0000dc 30.5px,#0000d1 42.5px,#000095 63.5px,#0000a8 82.5px,#000de9 94.5px,#0043fc 100.5px,#00e3f6 112.5px,#00fed5 118.5px,#00ffa3 126px)"></b><b style="left:768px;background:linear-gradient(#000080 0px,#000094 12.5px,#0000dc 25.5px,#0000d3 35.5px,#000095 53.5px,#0000b1 75.5px,#00009e 89.5px,#0002d2 98.5px,#0021f7 104.5px,#00defa 117.5px,#00fee0 122.5px,#00ffc8 126px)"></b><b style="left:770px;background:linear-gradient(#000080 0px,#00009b 10.5px,#0000dc 21.5px,#0000cb 30.5px,#000099 43.5px,#0000aa 53.5px,#0001dd 71.5px,#0000ca 84.5px,#00009c 95.5px,#0000ad 100.5px,#0010f0 108.5px,#004fff 113.5px,#00e6fb 122.5px,#00fcea 126px)"></b><b style="left:772px;background:linear-gradient(#000081 0px,#0000a8 9.5px,#0000d5 17.5px,#0000be 25.5px,#0000a0 34.5px,#0000b5 44.5px,#000ef4 65.5px,#000ff6 81.5px,#0000ce 92.5px,#000099 101.5px,#0000b4 106.5px,#0011f5 113.5px,#005fff 118.5px,#00e1fd 126px)"></b><b style="left:774px;background:linear-gradient(#000082 0px,#0000c2 14.5px,#0000ab 25.5px,#0013f6 52.5px,#004bff 72.5px,#0035fe 83.5px,#0003ed 93.5px,#000095 105.5px,#0000aa 109.5px,#0009f4 116.5px,#0049ff 120.5px,#00b1ff 126px)"></b><b style="left:776px;background:linear-gradient(#000082 0px,#000ac7 20.5px,#001bf2 32.5px,#003dfe 49.5px,#007cff 69.5px,#006eff 81.5px,#0023fe 92.5px,#0000ea 98.5px,#000090 109.5px,#000bf9 119.5px,#0085ff 126px)"></b><b style="left:778px;background:linear-gradient(#000082 0px,#0000ac 8.5px,#0021e0 14.5px,#0058fb 22.5px,#0063ff 43.5px,#00a2ff 67.5px,#0093ff 80.5px,#004fff 91.5px,#0002f8 99.5px,#00008b 111.5px,#0003f5 120.5px,#001fff 122.5px,#0064ff 126px)"></b><b style="left:780px;background:linear-gradient(#000084 0px,#0000b7 5.5px,#0009e7 8.5px,#0074fd 14.5px,#0091ff 19.5px,#0073ff 36.5px,#00b9ff 64.5px,#00a8ff 79.5px,#0062ff 91.5px,#0000f6 101.5px,#000086 112.5px,#0008ff 122.5px,#004fff 126px)"></b><b style="left:782px;background:linear-gradient(#000087 0px,#0000cd 5.5px,#0002ef 7.5px,#0046f5 11.5px,#005bf4 16.5px,#004bfe 30.5px,#00b6ff 55.5px,#00bcff 71.5px,#008eff 85.5px,#0034ff 96.5px,#0000f9 101.5px,#000086 113.5px,#0001fe 122.5px,#0048ff 126px)"></b><b style="left:784px;background:linear-gradient(#000088 0px,#000ad1 9.5px,#000bc4 18.5px,#000bd8 27.5px,#0026fc 35.5px,#0091ff 48.5px,#00b3ff 61.5px,#009dff 78.5px,#0056ff 91.5px,#0001fa 100.5px,#000087 112.5px,#0000e7 120.5px,#0006ff 122.5px,#004eff 126px)"></b><b style="left:786px;background:linear-gradient(#00008c 0px,#0001d8 5.5px,#0036f0 10.5px,#002bef 14.5px,#0001d2 20.5px,#0000a5 26.5px,#0000aa 29.5px,#000bf5 37.5px,#0072ff 49.5px,#0093ff 61.5px,#007dff 78.5px,#0039ff 91.5px,#0001f2 99.5px,#00008b 111.5px,#0000d9 118.5px,#0008fc 121.5px,#0062ff 126px)"></b><b style="left:788px;background:linear-gradient(#00008b 0px,#0000d6 5.5px,#0031ee 10.5px,#0035f4 14.5px,#0001f3 20.5px,#00008e 30.5px,#0005f1 40.5px,#0052ff 54.5px,#005fff 69.5px,#0033ff 85.5px,#0001ec 96.5px,#00008f 109.5px,#0000bd 114.5px,#0006f7 119.5px,#0053ff 123.5px,#0082ff 126px)"></b><b style="left:790px;background:linear-gradient(#000088 0px,#0001bb 6.5px,#0007be 13.5px,#0000ca 22.5px,#000089 30.5px,#0001e1 42.5px,#001efa 58.5px,#001cfb 76.5px,#0001e4 91.5px,#000094 106.5px,#0000c5 112.5px,#000cf7 117.5px,#0055ff 121.5px,#00afff 126px)"></b><b style="left:792px;background:linear-gradient(#000086 0px,#0000d1 9.5px,#0000ac 17.5px,#00009b 31.5px,#0001d7 54.5px,#0001de 78.5px,#0000ae 94.5px,#000097 102.5px,#0008f1 113.5px,#003eff 117.5px,#00e1fc 126px)"></b><b style="left:794px;background:linear-gradient(#000082 0px,#0000c2 16.5px,#0000b5 30.5px,#00009e 43.5px,#0000b1 77.5px,#00009a 95.5px,#0001cd 104.5px,#0017f6 110.5px,#0060ff 115.5px,#00eef6 123.5px,#00fce7 126px)"></b><b style="left:796px;background:linear-gradient(#000082 0px,#000096 10.5px,#000095 13.5px,#0000e3 20.5px,#0000e5 25.5px,#000093 36.5px,#0000a0 55.5px,#0000a4 86.5px,#0003db 99.5px,#001ef8 105.5px,#007fff 112.5px,#00eaf5 119.5px,#00ffcc 124.5px,#00ffc1 126px)"></b><b style="left:798px;background:linear-gradient(#000081 0px,#000091 10.5px,#000090 13.5px,#0000ea 19.5px,#0000f2 23.5px,#0000ab 30.5px,#000092 32.5px,#0000c6 47.5px,#0000be 79.5px,#0008f0 95.5px,#003ffe 102.5px,#00e8fa 114.5px,#00ffcd 120.5px,#00ff9b 126px)"></b></div>
<div class="a" style="left:65px;top:212.5px;width:11px;height:113px;background:linear-gradient(#800000 0%,#ff0000 20%,#ffff00 39%,#00ff00 63%,#00ffff 81%,#0000ff 91%,#000080 100%)"></div>
<svg class="a" style="left:55px;top:195px" width="62" height="145" viewBox="55 195 62 145">
<text x="71" y="210.5" text-anchor="middle" class="hz">100%</text>
<text x="71" y="335" text-anchor="middle" class="hz">0%</text>
<text x="112" y="210" text-anchor="end" class="hz">200Hz</text>
<path d="M112 207H115" stroke="#bdbdbd" stroke-width="1"/>
<text x="112" y="229.5" text-anchor="end" class="hz">20Hz</text>
<path d="M112 226.5H115" stroke="#bdbdbd" stroke-width="1"/>
<text x="112" y="249" text-anchor="end" class="hz">10Hz</text>
<path d="M112 246H115" stroke="#bdbdbd" stroke-width="1"/>
<text x="112" y="268.5" text-anchor="end" class="hz">7Hz</text>
<path d="M112 265.5H115" stroke="#bdbdbd" stroke-width="1"/>
<text x="112" y="288" text-anchor="end" class="hz">5Hz</text>
<path d="M112 285H115" stroke="#bdbdbd" stroke-width="1"/>
<text x="112" y="307.5" text-anchor="end" class="hz">4Hz</text>
<path d="M112 304.5H115" stroke="#bdbdbd" stroke-width="1"/>
<text x="112" y="335" text-anchor="end" class="hz">3Hz</text>
<path d="M112 332H115" stroke="#bdbdbd" stroke-width="1"/>
</svg>
<div class="a" style="left:939px;top:79px;width:488px;height:270.5px;background:#d0dbf4"></div>
<div class="a t" style="left:939px;top:91px;width:488px;text-align:center;font-size:20.5px;color:#111">MyoVista<span style="font-size:1.12em;line-height:0">®</span> <i>wav</i>ECG<span style="font-size:0.62em;vertical-align:0.5em;line-height:0">™</span> Information</div>
<div class="a" style="left:951px;top:118.5px;width:464px;height:1.5px;background:#4d5566"></div>
<div class="a" style="left:950.5px;top:138.5px;width:87px;height:47px;border:1.5px solid #a9b3c9"></div>
<div class="a t" style="left:950.5px;top:143.5px;width:87px;text-align:center;font-size:15.5px;line-height:19px;color:#a6afc4;white-space:normal">Highly<br>Negative</div>
<div class="a" style="left:1045px;top:138.5px;width:87px;height:47px;border:1.5px solid #a9b3c9"></div>
<div class="a t" style="left:1045px;top:154.5px;width:87px;text-align:center;font-size:15.5px;color:#a6afc4">Negative</div>
<div class="a" style="left:1139.5px;top:138.5px;width:87px;height:47px;border:1.5px solid #a9b3c9"></div>
<div class="a t" style="left:1139.5px;top:154.5px;width:87px;text-align:center;font-size:15.5px;color:#a6afc4">Borderline</div>
<div class="a" style="left:1234px;top:138.5px;width:87px;height:47px;background:#fb8c06;border:1.5px solid #a08c74"></div>
<div class="a t" style="left:1234px;top:154.5px;width:87px;text-align:center;font-size:16px;color:#161616">Positive</div>
<div class="a" style="left:1328.5px;top:138.5px;width:87px;height:47px;border:1.5px solid #a9b3c9"></div>
<div class="a t" style="left:1328.5px;top:143.5px;width:87px;text-align:center;font-size:15.5px;line-height:19px;color:#a6afc4;white-space:normal">Highly<br>Positive</div>
<div class="a t" style="left:947px;top:203px;font-size:14.6px;font-weight:bold;color:#111"><i>wav</i>ECG LV Relaxation Algorithm Result:</div>
<div class="a t" style="left:947px;top:222.5px;font-size:13.7px;color:#151515">Positive for LV relaxation abnormality</div>
<div class="a" style="left:939px;top:367px;width:488px;height:377.5px;background:#d0dbf4"></div>
<div class="a t" style="left:1043px;top:374.5px;font-size:20.6px;color:#111">Conventional ECG Information</div>
<div class="a" style="left:951px;top:403px;width:464px;height:1.8px;background:#6e7686"></div>
<div class="a" style="left:1419px;top:405.5px;width:4px;height:167px;border-radius:2px;background:#9c9ea3;box-shadow:0 0 0 0.5px #6a6d74"></div>
<div class="a t b" style="left:951px;top:413.8px">Heart Rate:</div>
<div class="a t r" style="left:1016px;top:413.8px;width:150px;text-align:right">71 bpm</div>
<div class="a t b" style="left:1199px;top:413.8px">QRS Duration:</div>
<div class="a t r" style="left:1264px;top:413.8px;width:150.5px;text-align:right">94 ms</div>
<div class="a t b" style="left:951px;top:436.2px">RR Interval:</div>
<div class="a t r" style="left:1016px;top:436.2px;width:150px;text-align:right">844 ms</div>
<div class="a t b" style="left:1199px;top:436.2px">QT/QTc Interval:</div>
<div class="a t r" style="left:1264px;top:436.2px;width:150.5px;text-align:right">414/450 ms</div>
<div class="a t b" style="left:951px;top:458.6px">PR Interval:</div>
<div class="a t r" style="left:1016px;top:458.6px;width:150px;text-align:right">140 ms</div>
<div class="a t b" style="left:1199px;top:458.6px">P/QRS/T Axis:</div>
<div class="a t r" style="left:1264px;top:458.6px;width:150.5px;text-align:right">9°/-28°/49°</div>
<div class="a t b" style="left:951px;top:481.0px">QT Dispersion:</div>
<div class="a t r" style="left:1016px;top:481.0px;width:150px;text-align:right">54 ms</div>
<div class="a t b" style="left:951px;top:520.8px">Glasgow Analysis Summary:</div>
<div class="a t r" style="left:1174px;top:520.8px">Abnormal ECG</div>
<div class="a t r" style="left:951px;top:543.2px">Sinus rhythm</div>
<div class="a t r" style="left:951px;top:565.6px">Leftward axis</div>
<div class="a t r" style="left:951px;top:588.0px">rSr'(V1) - probable normal variant</div>
<div class="a" style="left:939px;top:761px;width:112px;height:75.5px;border-radius:4px;background:#4f5b7e"></div>
<div class="a t" style="left:939px;top:816.5px;width:112px;text-align:center;font-size:13.7px;color:#f4f6fa">Annotate</div>
<svg class="a" style="left:975px;top:768px" width="42" height="42" viewBox="0 0 42 42">
<g stroke="#fff" stroke-width="4.4" stroke-linecap="round"><path d="M2.2 14H26M2.2 22H26M2.2 29.9H26M2.2 37.7H31"/></g>
<path d="M28.5 5.5Q28.5 1.2 33.4 1.2Q38.3 1.2 38.3 5.5V33.5L33.4 39.8L28.5 33.5Z" fill="#fff"/><path d="M28.5 7H38.3" stroke="#4f5b7e" stroke-width="1.2"/></svg>
<div class="a" style="left:1064px;top:761px;width:112px;height:75.5px;border-radius:4px;background:#4f5b7e"></div>
<div class="a t" style="left:1064px;top:816.5px;width:112px;text-align:center;font-size:13.7px;color:#f4f6fa">Print</div>
<svg class="a" style="left:1099px;top:768px" width="42" height="42" viewBox="0 0 42 42">
<path d="M7.5 14V2.5H25.5L33 10V14" fill="none" stroke="#fff" stroke-width="3"/><path d="M25 2.5V10H33" fill="#fff" stroke="#fff" stroke-width="1.5"/>
<path d="M8 32H3.5Q1.5 32 1.5 30V17Q1.5 14.5 4 14.5H37Q39.5 14.5 39.5 17V30Q39.5 32 37.5 32H33" fill="none" stroke="#fff" stroke-width="3"/>
<rect x="8.7" y="24" width="23.7" height="15.5" fill="none" stroke="#fff" stroke-width="3"/></svg>
<div class="a" style="left:1189px;top:761px;width:112px;height:75.5px;border-radius:4px;background:#4f5b7e"></div>
<div class="a t" style="left:1189px;top:816.5px;width:112px;text-align:center;font-size:13.7px;color:#f4f6fa">Export Report</div>
<svg class="a" style="left:1229px;top:768px" width="34" height="42" viewBox="0 0 34 42">
<path d="M2 1H20L31 11.5V40H2Z" fill="#fff"/><path d="M21 1.5V10.5H30.5" fill="none" stroke="#4f5b7e" stroke-width="1.3"/>
<text x="16" y="24" text-anchor="middle" font-family="Liberation Sans" font-weight="bold" font-size="9.5" fill="#4f5b7e">PDF</text></svg>
<div class="a" style="left:1314px;top:761px;width:112px;height:75.5px;border-radius:4px;background:#4f5b7e"></div>
<div class="a t" style="left:1314px;top:816.5px;width:112px;text-align:center;font-size:13.7px;color:#f4f6fa">Delete</div>
<svg class="a" style="left:1353px;top:768px" width="34" height="42" viewBox="0 0 34 42">
<path d="M11.5 6V2.5H21.5V6" fill="none" stroke="#fff" stroke-width="2.8"/><rect x="1.5" y="5.5" width="30" height="5" rx="1.5" fill="#fff"/>
<path d="M3.5 12H29.5V36.5Q29.5 40 26 40H7Q3.5 40 3.5 36.5Z" fill="#fff"/>
<path d="M10.5 16V35M16.5 16V35M22.5 16V35" stroke="#4f5b7e" stroke-width="2.6"/></svg>
<div class="a" style="left:1427px;top:25px;width:108px;height:839px;background:#1e2c44"></div>
<div class="a" style="left:1441px;top:25px;width:3px;height:351px;background:#2f4b70"></div>
<div class="a" style="left:1441px;top:490.5px;width:3px;height:373.5px;background:#2f4b70"></div>
<div class="a" style="left:1444px;top:25px;width:91px;height:116px;background:#222427"></div>
<div class="a" style="left:1444px;top:143px;width:91px;height:115px;background:#222427"></div>
<div class="a" style="left:1444px;top:259px;width:91px;height:115px;background:#222427"></div>
<div class="a" style="left:1444px;top:141.5px;width:91px;height:2px;background:#2f4b70"></div>
<div class="a" style="left:1444px;top:257.5px;width:91px;height:2px;background:#2f4b70"></div>
<div class="a" style="left:1444px;top:374px;width:91px;height:2px;background:#2f4b70"></div>
<div class="a" style="left:1441px;top:490.5px;width:94px;height:116px;background:#2f4b70"></div>
<div class="a" style="left:1444px;top:493px;width:91px;height:112px;background:#222427"></div>
<div class="a" style="left:1444px;top:606.5px;width:91px;height:257.5px;background:#000"></div>
<div class="a t" style="left:1444px;top:104px;width:88px;text-align:center;font-size:12.2px;color:#a9a9a9">HOME</div>
<div class="a t" style="left:1444px;top:219px;width:88px;text-align:center;font-size:12.2px;color:#a9a9a9">PATIENT</div>
<div class="a t" style="left:1444px;top:335.5px;width:88px;text-align:center;font-size:12.2px;color:#a9a9a9">TEST</div>
<div class="a t" style="left:1444px;top:452px;width:88px;text-align:center;font-size:12.2px;color:#f4f4f4">REPORT</div>
<div class="a t" style="left:1444px;top:568px;width:88px;text-align:center;font-size:12.2px;color:#a9a9a9">SETTINGS</div>
<svg class="a" style="left:1450px;top:40px" width="75" height="65" viewBox="1450 40 75 65">
<path d="M1469 96.5V69H1462V65L1487 53L1499 58.5V50H1503.5V60.6L1513 65V69H1506V96.5Z" fill="none" stroke="#f2f2f2" stroke-width="2"/></svg>
<svg class="a" style="left:1460px;top:155px" width="55" height="65" viewBox="1460 155 55 65">
<circle cx="1487.5" cy="171.7" r="5.1" fill="none" stroke="#f2f2f2" stroke-width="1.8"/>
<path d="M1482 212.5V198H1479V186Q1479 180 1485 180H1490Q1496.5 180 1496.5 186V198H1493.5V212.5H1489.5V202.5H1486V212.5Z" fill="none" stroke="#f2f2f2" stroke-width="1.8" stroke-linejoin="round"/></svg>
<svg class="a" style="left:1460px;top:280px" width="56" height="50" viewBox="0 0 56 50">
<path d="M12 26Q8 22 8 17Q8 7 18 6Q26 6 30 13Q34 6 42 6Q53 7 53 17.5Q53 25 45 32.5L30 45.5L24 41" fill="none" stroke="#f4f4f4" stroke-width="1.8" stroke-linecap="round" stroke-linejoin="round"/>
<path d="M2 26.8H22L25.5 19.5L29.5 31.5L32.5 24.5H39.5" fill="none" stroke="#f4f4f4" stroke-width="1.8" stroke-linejoin="round"/></svg>
<svg class="a" style="left:1455px;top:390px" width="65" height="60" viewBox="1455 390 65 60">
<path d="M1476 399.3H1504Q1505.5 399.3 1505.8 401C1507 408 1505.5 416 1502.5 423C1500 430 1500 437 1501.5 441.5Q1502 443.7 1500 443.7H1476Q1474.5 443.7 1473.8 442.5C1470.5 437 1469.5 431 1471 425C1472.8 418 1477 411 1474.8 401.5Q1474.5 399.3 1476 399.3Z" fill="#fff"/>
<path d="M1482 405.7H1499M1482 411.2H1496.5" stroke="#1e2c44" stroke-width="2.2"/></svg>
<svg class="a" style="left:1462.2px;top:512.4px" width="50" height="50" viewBox="0 0 50 50">
<polygon points="42.64,20.12 46.90,20.79 46.90,29.21 42.64,29.88 40.92,34.02 43.46,37.51 37.51,43.46 34.02,40.92 29.88,42.64 29.21,46.90 20.79,46.90 20.12,42.64 15.98,40.92 12.49,43.46 6.54,37.51 9.08,34.02 7.36,29.88 3.10,29.21 3.10,20.79 7.36,20.12 9.08,15.98 6.54,12.49 12.49,6.54 15.98,9.08 20.12,7.36 20.79,3.10 29.21,3.10 29.88,7.36 34.02,9.08 37.51,6.54 43.46,12.49 40.92,15.98" fill="none" stroke="#f4f4f4" stroke-width="1.8" stroke-linejoin="round"/>
<circle cx="25" cy="25" r="9.8" fill="none" stroke="#f4f4f4" stroke-width="1.8"/></svg>
<div class="a" style="left:1453px;top:776px;width:72px;height:72px;border:3px solid #fff;border-radius:10px;background:#000"></div>
<svg class="a" style="left:1460px;top:780px" width="56" height="45" viewBox="1460 780 56 45">
<path d="M1479.5 795.5A12 12 0 1 0 1496.7 795.5" fill="none" stroke="#8cc63f" stroke-width="4.2" stroke-linecap="round"/>
<path d="M1488.1 787.5V799" stroke="#8cc63f" stroke-width="3.8" stroke-linecap="round"/>
<path d="M1491.5 794Q1492 789 1496.5 788.5Q1496 793 1491.5 794Z" fill="#8cc63f"/></svg>
<div class="a t" style="left:1453px;top:826px;width:72px;text-align:center;font-size:10.4px;color:#8cc63f">STAND BY</div>
</body></html>
